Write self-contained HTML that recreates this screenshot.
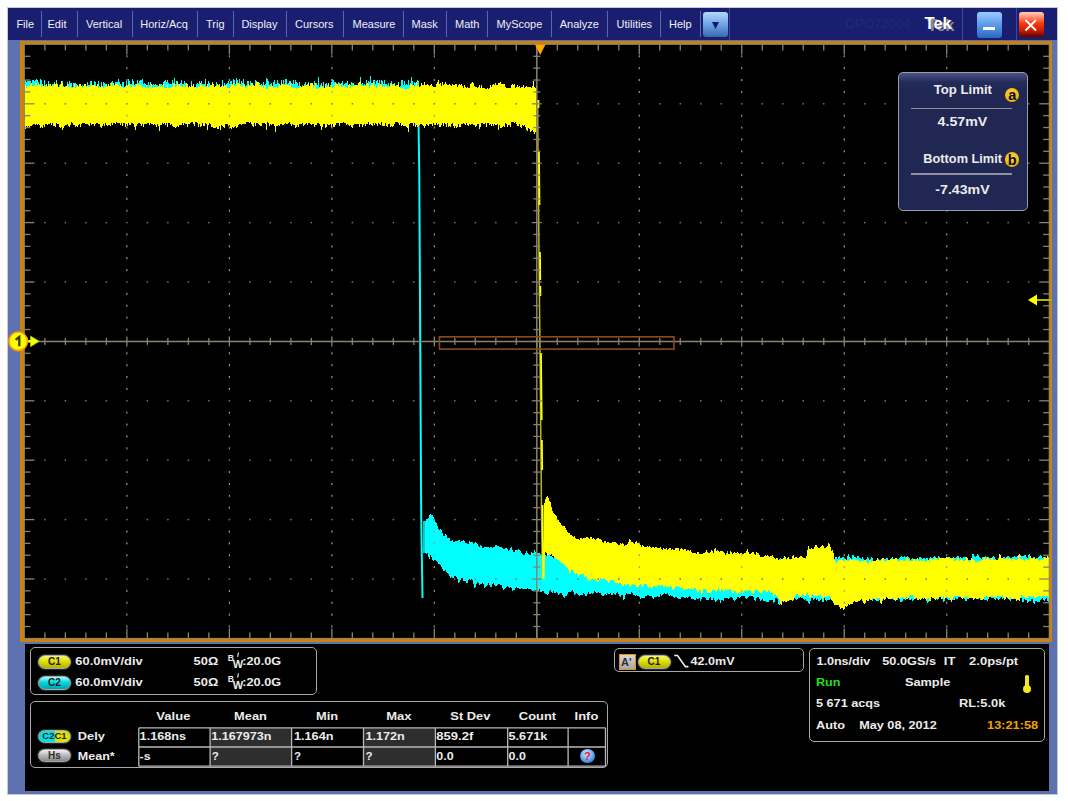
<!DOCTYPE html>
<html><head><meta charset="utf-8"><style>
html,body{margin:0;padding:0;background:#ffffff;}
body{width:1068px;height:801px;position:relative;overflow:hidden;font-family:"Liberation Sans",sans-serif;}
.a{position:absolute;}
.t{position:absolute;white-space:pre;}
.sep{position:absolute;top:11px;width:1px;height:26px;background:#5868b4;}
.box{position:absolute;border:1px solid #a8a8a8;border-radius:5px;box-sizing:border-box;}
.pill{position:absolute;border-radius:7px;box-sizing:border-box;border:1.3px solid #a8a8a8;box-shadow:0 0 1.5px 0.5px #505050;font-weight:bold;font-size:10px;text-align:center;color:#202020;}
</style></head><body>

<div class="a" style="left:7px;top:7px;width:1051px;height:788px;background:#c4c8de"></div>
<div class="a" style="left:8px;top:8px;width:1049px;height:786px;background:#5f72b0"></div>
<div class="a" style="left:8px;top:8px;width:1049px;height:32px;background:#191e6e"></div>
<div class="a" style="left:20px;top:41px;width:1032px;height:601px;background:#c9820f"></div>
<div class="a" style="left:24px;top:44px;width:1025px;height:594px;background:#000"></div>
<div class="a" style="left:25px;top:644px;width:1024px;height:147px;background:#000"></div>
<svg width="1068" height="801" style="position:absolute;left:0;top:0">
<defs><clipPath id="scr"><rect x="24.4" y="44.4" width="1024.8" height="594.0"/></clipPath></defs>
<g clip-path="url(#scr)">
<path shape-rendering="crispEdges" fill="#00ffff" d="M24.4,79.8L25.4,79.6L26.4,82.2L27.4,80.8L28.4,80.5L29.4,81.4L30.4,80.2L31.4,84.9L32.4,80.1L33.4,79.4L34.4,81.6L35.4,80.3L36.4,79.1L37.4,80.4L38.4,81.4L39.4,85.2L40.4,79.1L41.4,79.4L42.4,83.2L43.4,87.1L44.4,79.6L45.4,84.5L46.4,86.8L47.4,87.0L48.4,81.2L49.4,83.7L50.4,86.0L51.4,86.1L52.4,83.8L53.4,84.3L54.4,81.4L55.4,86.3L56.4,79.3L57.4,86.5L58.4,86.9L59.4,84.5L60.4,87.3L61.4,87.0L62.4,81.0L63.4,85.4L64.4,87.1L65.4,85.6L66.4,87.2L67.4,82.2L68.4,84.0L69.4,80.4L70.4,83.5L71.4,82.5L72.4,87.4L73.4,82.5L74.4,82.9L75.4,82.8L76.4,83.4L77.4,84.9L78.4,86.4L79.4,86.2L80.4,86.7L81.4,87.5L82.4,84.9L83.4,87.7L84.4,84.2L85.4,83.6L86.4,86.1L87.4,81.7L88.4,85.3L89.4,85.6L90.4,80.7L91.4,80.8L92.4,85.1L93.4,86.5L94.4,80.5L95.4,81.1L96.4,86.7L97.4,84.1L98.4,80.7L99.4,85.5L100.4,87.3L101.4,80.9L102.4,86.9L103.4,82.1L104.4,82.9L105.4,84.0L106.4,83.7L107.4,85.8L108.4,85.4L109.4,86.3L110.4,83.3L111.4,82.7L112.4,80.8L113.4,86.1L114.4,85.3L115.4,82.1L116.4,81.4L117.4,82.9L118.4,79.2L119.4,82.0L120.4,84.2L121.4,86.9L122.4,82.4L123.4,80.9L124.4,86.6L125.4,86.7L126.4,80.7L127.4,86.0L128.4,78.6L129.4,80.4L130.4,83.5L131.4,84.9L132.4,79.1L133.4,80.1L134.4,85.6L135.4,83.7L136.4,84.7L137.4,79.2L138.4,83.7L139.4,81.3L140.4,80.0L141.4,80.2L142.4,78.6L143.4,83.9L144.4,83.0L145.4,83.7L146.4,85.2L147.4,85.7L148.4,81.5L149.4,85.0L150.4,81.9L151.4,85.9L152.4,85.1L153.4,83.9L154.4,85.6L155.4,83.3L156.4,85.6L157.4,84.4L158.4,86.0L159.4,86.4L160.4,84.5L161.4,84.3L162.4,85.7L163.4,82.1L164.4,81.0L165.4,80.3L166.4,82.0L167.4,79.9L168.4,83.3L169.4,84.3L170.4,84.1L171.4,84.0L172.4,79.8L173.4,84.2L174.4,77.7L175.4,84.5L176.4,81.0L177.4,80.8L178.4,83.5L179.4,85.7L180.4,83.5L181.4,79.0L182.4,83.9L183.4,84.5L184.4,80.9L185.4,82.6L186.4,87.6L187.4,87.5L188.4,87.5L189.4,87.0L190.4,88.0L191.4,80.6L192.4,87.5L193.4,86.8L194.4,87.3L195.4,88.3L196.4,84.6L197.4,82.4L198.4,84.4L199.4,81.2L200.4,83.8L201.4,80.4L202.4,83.9L203.4,83.9L204.4,84.3L205.4,78.6L206.4,85.7L207.4,85.7L208.4,80.3L209.4,83.0L210.4,84.3L211.4,88.1L212.4,81.4L213.4,87.4L214.4,87.7L215.4,86.8L216.4,81.0L217.4,87.0L218.4,86.1L219.4,87.0L220.4,87.6L221.4,86.9L222.4,79.8L223.4,86.2L224.4,83.2L225.4,85.4L226.4,83.9L227.4,82.8L228.4,80.7L229.4,83.8L230.4,81.4L231.4,80.6L232.4,84.4L233.4,79.2L234.4,79.1L235.4,85.0L236.4,78.1L237.4,79.1L238.4,84.8L239.4,78.4L240.4,84.0L241.4,80.7L242.4,83.8L243.4,78.0L244.4,84.3L245.4,85.9L246.4,85.4L247.4,81.5L248.4,80.4L249.4,85.2L250.4,79.8L251.4,86.3L252.4,83.2L253.4,85.3L254.4,86.4L255.4,80.1L256.4,80.4L257.4,85.5L258.4,85.7L259.4,82.3L260.4,86.2L261.4,83.5L262.4,85.6L263.4,82.1L264.4,84.9L265.4,85.1L266.4,78.3L267.4,79.3L268.4,80.8L269.4,84.8L270.4,84.1L271.4,82.5L272.4,86.0L273.4,82.5L274.4,79.8L275.4,84.1L276.4,84.3L277.4,79.8L278.4,82.4L279.4,85.3L280.4,86.0L281.4,79.6L282.4,84.4L283.4,79.1L284.4,85.0L285.4,78.9L286.4,78.4L287.4,84.4L288.4,83.0L289.4,80.6L290.4,80.5L291.4,83.2L292.4,84.4L293.4,79.2L294.4,84.6L295.4,80.1L296.4,82.2L297.4,83.1L298.4,86.5L299.4,81.9L300.4,87.4L301.4,87.8L302.4,84.3L303.4,86.6L304.4,84.2L305.4,80.9L306.4,87.5L307.4,88.5L308.4,81.0L309.4,87.7L310.4,82.6L311.4,87.4L312.4,86.7L313.4,85.5L314.4,80.4L315.4,84.9L316.4,82.6L317.4,86.3L318.4,75.6L319.4,86.7L320.4,85.7L321.4,82.8L322.4,86.3L323.4,81.0L324.4,88.1L325.4,84.4L326.4,83.2L327.4,84.5L328.4,86.4L329.4,86.7L330.4,85.8L331.4,82.2L332.4,79.3L333.4,79.2L334.4,82.2L335.4,81.5L336.4,82.5L337.4,85.5L338.4,82.1L339.4,85.7L340.4,83.6L341.4,83.2L342.4,80.8L343.4,85.4L344.4,84.6L345.4,82.8L346.4,83.3L347.4,80.3L348.4,86.6L349.4,86.3L350.4,85.1L351.4,82.2L352.4,82.9L353.4,83.0L354.4,85.1L355.4,85.9L356.4,85.9L357.4,84.9L358.4,87.1L359.4,87.2L360.4,75.9L361.4,84.4L362.4,82.9L363.4,84.9L364.4,83.4L365.4,85.9L366.4,79.7L367.4,84.7L368.4,80.4L369.4,83.4L370.4,74.6L371.4,83.4L372.4,83.8L373.4,79.9L374.4,79.9L375.4,84.7L376.4,81.0L377.4,79.5L378.4,84.6L379.4,79.5L380.4,83.9L381.4,80.4L382.4,80.9L383.4,85.0L384.4,79.3L385.4,84.3L386.4,83.8L387.4,85.1L388.4,83.1L389.4,86.6L390.4,83.5L391.4,80.6L392.4,84.2L393.4,86.5L394.4,82.9L395.4,86.4L396.4,85.3L397.4,86.6L398.4,81.4L399.4,86.6L400.4,86.4L401.4,79.5L402.4,79.5L403.4,85.8L404.4,80.9L405.4,85.2L406.4,83.4L407.4,85.9L408.4,79.1L409.4,84.7L410.4,83.3L411.4,77.0L412.4,80.6L413.4,84.9L414.4,82.3L415.4,83.1L416.4,82.0L417.4,79.7L418.4,82.3L418.5,80.7L418.5,111.7L418.4,113.0L417.4,115.7L416.4,109.9L415.4,109.9L414.4,111.6L413.4,116.7L412.4,111.8L411.4,115.5L410.4,110.4L409.4,112.3L408.4,111.3L407.4,113.0L406.4,112.6L405.4,110.9L404.4,115.6L403.4,115.8L402.4,114.3L401.4,111.0L400.4,114.8L399.4,112.5L398.4,114.4L397.4,109.3L396.4,109.5L395.4,110.3L394.4,112.8L393.4,116.0L392.4,115.8L391.4,117.9L390.4,117.7L389.4,112.0L388.4,115.5L387.4,116.9L386.4,113.0L385.4,116.4L384.4,112.2L383.4,113.3L382.4,113.1L381.4,113.3L380.4,110.8L379.4,116.9L378.4,109.8L377.4,110.6L376.4,111.4L375.4,114.4L374.4,114.5L373.4,111.6L372.4,111.9L371.4,115.2L370.4,110.9L369.4,114.7L368.4,112.9L367.4,117.1L366.4,111.9L365.4,111.5L364.4,114.3L363.4,114.3L362.4,117.1L361.4,116.3L360.4,111.4L359.4,113.1L358.4,114.7L357.4,115.3L356.4,116.7L355.4,118.1L354.4,111.5L353.4,117.8L352.4,110.8L351.4,116.5L350.4,111.2L349.4,113.2L348.4,114.1L347.4,110.6L346.4,113.3L345.4,113.4L344.4,115.3L343.4,110.1L342.4,113.0L341.4,110.9L340.4,116.4L339.4,111.0L338.4,109.6L337.4,116.8L336.4,111.2L335.4,109.8L334.4,114.9L333.4,111.7L332.4,113.4L331.4,117.1L330.4,115.8L329.4,114.7L328.4,111.7L327.4,111.9L326.4,111.4L325.4,110.3L324.4,116.6L323.4,113.4L322.4,115.5L321.4,109.4L320.4,115.1L319.4,115.1L318.4,111.4L317.4,117.3L316.4,111.5L315.4,113.0L314.4,114.1L313.4,112.8L312.4,115.1L311.4,109.9L310.4,110.4L309.4,112.6L308.4,111.0L307.4,110.0L306.4,116.7L305.4,111.6L304.4,112.0L303.4,116.9L302.4,111.6L301.4,111.2L300.4,117.0L299.4,111.6L298.4,118.4L297.4,114.2L296.4,110.9L295.4,111.0L294.4,114.4L293.4,116.0L292.4,109.9L291.4,116.5L290.4,110.1L289.4,109.6L288.4,109.7L287.4,114.7L286.4,108.9L285.4,113.0L284.4,110.5L283.4,114.4L282.4,112.3L281.4,110.9L280.4,115.2L279.4,113.3L278.4,112.0L277.4,113.2L276.4,117.1L275.4,110.3L274.4,115.9L273.4,110.0L272.4,115.0L271.4,110.1L270.4,114.3L269.4,113.9L268.4,109.4L267.4,111.0L266.4,112.0L265.4,109.0L264.4,109.6L263.4,109.3L262.4,110.6L261.4,108.9L260.4,111.8L259.4,109.9L258.4,113.5L257.4,110.1L256.4,116.9L255.4,110.7L254.4,115.2L253.4,113.9L252.4,110.8L251.4,110.3L250.4,112.9L249.4,115.6L248.4,114.3L247.4,118.5L246.4,110.2L245.4,119.8L244.4,116.4L243.4,109.1L242.4,113.5L241.4,110.8L240.4,115.0L239.4,114.4L238.4,115.6L237.4,109.0L236.4,111.2L235.4,112.0L234.4,115.8L233.4,114.4L232.4,111.7L231.4,116.7L230.4,111.9L229.4,112.0L228.4,111.0L227.4,117.9L226.4,112.0L225.4,110.4L224.4,113.5L223.4,110.4L222.4,111.6L221.4,110.6L220.4,111.1L219.4,110.0L218.4,111.8L217.4,114.0L216.4,115.6L215.4,112.8L214.4,111.9L213.4,110.0L212.4,112.8L211.4,113.2L210.4,114.4L209.4,109.2L208.4,112.0L207.4,111.8L206.4,111.5L205.4,116.6L204.4,111.5L203.4,110.2L202.4,116.0L201.4,116.9L200.4,113.4L199.4,110.6L198.4,115.8L197.4,115.9L196.4,109.9L195.4,111.7L194.4,109.5L193.4,111.5L192.4,116.0L191.4,113.0L190.4,111.3L189.4,110.6L188.4,116.4L187.4,110.8L186.4,109.8L185.4,113.5L184.4,110.1L183.4,114.9L182.4,112.0L181.4,110.7L180.4,115.9L179.4,116.3L178.4,117.4L177.4,110.2L176.4,115.2L175.4,112.4L174.4,110.1L173.4,109.4L172.4,110.9L171.4,110.4L170.4,110.9L169.4,109.7L168.4,110.0L167.4,110.6L166.4,117.5L165.4,116.8L164.4,111.0L163.4,111.6L162.4,110.9L161.4,117.8L160.4,117.6L159.4,110.9L158.4,113.7L157.4,111.4L156.4,111.7L155.4,115.3L154.4,111.0L153.4,112.8L152.4,114.4L151.4,111.5L150.4,112.5L149.4,117.2L148.4,115.3L147.4,111.7L146.4,116.1L145.4,119.0L144.4,116.0L143.4,114.4L142.4,111.2L141.4,110.7L140.4,110.7L139.4,112.3L138.4,113.1L137.4,111.3L136.4,109.4L135.4,109.0L134.4,116.2L133.4,116.5L132.4,116.4L131.4,111.3L130.4,114.7L129.4,114.6L128.4,108.8L127.4,112.2L126.4,110.5L125.4,114.9L124.4,111.3L123.4,114.3L122.4,112.8L121.4,113.3L120.4,115.7L119.4,114.4L118.4,110.4L117.4,109.6L116.4,109.0L115.4,112.9L114.4,111.4L113.4,109.9L112.4,114.1L111.4,110.2L110.4,115.3L109.4,112.0L108.4,116.7L107.4,114.5L106.4,117.8L105.4,111.4L104.4,111.7L103.4,115.0L102.4,110.5L101.4,115.3L100.4,111.0L99.4,114.1L98.4,110.2L97.4,115.3L96.4,113.3L95.4,114.4L94.4,114.0L93.4,116.9L92.4,111.3L91.4,110.3L90.4,111.2L89.4,110.9L88.4,114.2L87.4,113.3L86.4,112.3L85.4,114.0L84.4,115.4L83.4,114.4L82.4,111.0L81.4,114.9L80.4,113.3L79.4,117.3L78.4,116.3L77.4,112.8L76.4,113.7L75.4,112.8L74.4,116.6L73.4,110.0L72.4,114.0L71.4,109.9L70.4,109.8L69.4,109.5L68.4,110.8L67.4,113.0L66.4,110.1L65.4,111.4L64.4,116.1L63.4,110.7L62.4,110.0L61.4,109.7L60.4,112.8L59.4,114.2L58.4,112.5L57.4,111.7L56.4,113.0L55.4,113.6L54.4,110.8L53.4,114.4L52.4,113.2L51.4,117.0L50.4,111.5L49.4,110.7L48.4,115.9L47.4,111.5L46.4,114.5L45.4,116.0L44.4,110.9L43.4,110.5L42.4,110.1L41.4,115.2L40.4,115.5L39.4,111.0L38.4,110.4L37.4,114.9L36.4,109.8L35.4,110.9L34.4,114.0L33.4,113.3L32.4,112.5L31.4,109.1L30.4,109.0L29.4,112.1L28.4,113.9L27.4,112.8L26.4,115.2L25.4,111.3L24.4,112.0Z"/>
<path shape-rendering="crispEdges" fill="#00ffff" d="M425.0,522.2L426.0,520.4L427.0,518.4L428.0,519.2L429.0,516.7L430.0,514.1L431.0,514.0L432.0,516.4L433.0,514.3L434.0,519.8L435.0,521.1L436.0,522.9L437.0,523.4L438.0,529.0L439.0,529.2L440.0,529.9L441.0,529.1L442.0,531.3L443.0,535.1L444.0,536.2L445.0,536.0L446.0,532.6L447.0,536.9L448.0,539.0L449.0,537.0L450.0,539.3L451.0,541.9L452.0,539.8L453.0,539.3L454.0,543.9L455.0,539.9L456.0,541.8L457.0,539.8L458.0,541.3L459.0,538.0L460.0,542.4L461.0,541.9L462.0,540.8L463.0,540.4L464.0,540.2L465.0,542.4L466.0,543.3L467.0,543.2L468.0,544.0L469.0,543.0L470.0,539.6L471.0,543.8L472.0,539.6L473.0,543.9L474.0,543.4L475.0,542.5L476.0,540.8L477.0,544.3L478.0,543.9L479.0,547.2L480.0,546.7L481.0,543.3L482.0,548.1L483.0,548.2L484.0,547.5L485.0,546.8L486.0,546.9L487.0,546.8L488.0,546.3L489.0,547.9L490.0,548.0L491.0,546.2L492.0,548.0L493.0,547.7L494.0,546.2L495.0,548.1L496.0,543.0L497.0,546.8L498.0,546.0L499.0,545.7L500.0,547.7L501.0,545.4L502.0,548.0L503.0,548.6L504.0,549.7L505.0,548.4L506.0,548.5L507.0,546.9L508.0,550.6L509.0,550.8L510.0,549.9L511.0,545.7L512.0,548.8L513.0,551.8L514.0,551.4L515.0,552.5L516.0,548.0L517.0,551.0L518.0,549.7L519.0,549.2L520.0,550.0L521.0,552.7L522.0,553.2L523.0,554.4L524.0,555.1L525.0,555.2L526.0,550.9L527.0,551.0L528.0,554.1L529.0,553.1L530.0,556.3L531.0,554.4L532.0,550.6L533.0,554.4L534.0,550.9L535.0,550.1L536.0,554.6L537.0,553.8L538.0,552.6L539.0,553.0L540.0,552.7L541.0,555.7L542.0,553.8L543.0,554.8L544.0,554.0L545.0,555.4L546.0,555.3L547.0,556.7L548.0,554.7L549.0,554.5L550.0,553.9L551.0,557.4L552.0,555.1L553.0,558.0L554.0,558.2L555.0,556.8L556.0,558.7L557.0,553.8L558.0,557.6L559.0,555.0L560.0,552.2L561.0,553.5L562.0,558.2L563.0,554.3L564.0,555.2L565.0,558.7L566.0,554.5L567.0,556.5L568.0,555.0L569.0,557.9L570.0,557.6L571.0,554.8L572.0,553.4L573.0,553.4L574.0,557.6L575.0,557.5L576.0,556.1L577.0,555.4L578.0,557.4L579.0,558.5L580.0,556.7L581.0,553.2L582.0,557.8L583.0,557.8L584.0,558.0L585.0,553.3L586.0,553.4L587.0,557.6L588.0,552.7L589.0,551.1L590.0,554.9L591.0,556.6L592.0,552.9L593.0,556.5L594.0,553.0L595.0,556.0L596.0,552.2L597.0,554.1L598.0,556.3L599.0,556.2L600.0,553.0L601.0,556.7L602.0,554.2L603.0,556.5L604.0,553.5L605.0,557.7L606.0,557.4L607.0,558.4L608.0,555.9L609.0,552.8L610.0,556.2L611.0,555.8L612.0,558.0L613.0,558.4L614.0,557.3L615.0,557.2L616.0,555.7L617.0,556.8L618.0,558.1L619.0,557.2L620.0,553.9L621.0,552.6L622.0,554.6L623.0,556.6L624.0,557.0L625.0,554.6L626.0,553.8L627.0,557.3L628.0,555.9L629.0,553.2L630.0,557.7L631.0,555.2L632.0,556.0L633.0,550.4L634.0,553.2L635.0,557.1L636.0,555.4L637.0,555.8L638.0,557.0L639.0,556.4L640.0,556.8L641.0,556.5L642.0,556.9L643.0,556.1L644.0,557.4L645.0,554.1L646.0,556.3L647.0,558.8L648.0,554.9L649.0,558.2L650.0,557.2L651.0,558.0L652.0,557.6L653.0,557.2L654.0,554.6L655.0,557.4L656.0,557.4L657.0,557.4L658.0,553.7L659.0,554.2L660.0,558.0L661.0,553.7L662.0,556.7L663.0,553.7L664.0,556.7L665.0,554.9L666.0,555.2L667.0,556.5L668.0,557.6L669.0,554.3L670.0,558.2L671.0,555.7L672.0,558.4L673.0,556.5L674.0,554.7L675.0,555.4L676.0,556.6L677.0,557.4L678.0,555.5L679.0,558.5L680.0,555.7L681.0,556.9L682.0,557.5L683.0,556.7L684.0,558.5L685.0,556.3L686.0,558.1L687.0,558.2L688.0,558.0L689.0,558.3L690.0,556.9L691.0,559.6L692.0,558.5L693.0,557.0L694.0,555.3L695.0,556.6L696.0,555.9L697.0,558.6L698.0,557.4L699.0,558.0L700.0,556.3L701.0,558.6L702.0,559.4L703.0,559.7L704.0,558.4L705.0,559.8L706.0,560.8L707.0,560.6L708.0,561.1L709.0,560.9L710.0,552.0L711.0,560.3L712.0,556.8L713.0,559.4L714.0,556.7L715.0,555.5L716.0,559.4L717.0,557.9L718.0,554.3L719.0,556.8L720.0,558.1L721.0,557.6L722.0,555.6L723.0,556.3L724.0,556.0L725.0,555.2L726.0,556.7L727.0,548.4L728.0,553.7L729.0,557.2L730.0,557.2L731.0,553.6L732.0,553.8L733.0,554.9L734.0,552.8L735.0,556.6L736.0,554.2L737.0,555.2L738.0,559.1L739.0,557.0L740.0,559.0L741.0,557.0L742.0,555.0L743.0,554.2L744.0,555.4L745.0,557.3L746.0,558.2L747.0,555.6L748.0,554.6L749.0,553.9L750.0,558.9L751.0,559.0L752.0,557.5L753.0,555.6L754.0,557.6L755.0,556.9L756.0,556.5L757.0,560.7L758.0,553.6L759.0,553.2L760.0,559.8L761.0,555.7L762.0,560.2L763.0,559.7L764.0,558.4L765.0,558.7L766.0,556.8L767.0,559.5L768.0,557.3L769.0,558.7L770.0,557.9L771.0,557.2L772.0,555.0L773.0,557.9L774.0,558.6L775.0,560.7L776.0,559.0L777.0,559.9L778.0,560.8L779.0,560.4L780.0,557.1L781.0,559.1L782.0,558.8L783.0,560.1L784.0,560.0L785.0,557.7L786.0,559.4L787.0,558.8L788.0,559.9L789.0,558.7L790.0,559.2L791.0,559.8L792.0,557.9L793.0,556.3L794.0,560.7L795.0,558.8L796.0,557.7L797.0,560.9L798.0,559.9L799.0,560.6L800.0,558.0L801.0,559.4L802.0,561.4L803.0,557.0L804.0,560.5L805.0,558.5L806.0,557.5L807.0,556.6L808.0,559.9L809.0,555.9L810.0,556.1L811.0,559.1L812.0,558.1L813.0,557.5L814.0,560.4L815.0,560.7L816.0,557.6L817.0,560.0L818.0,557.2L819.0,558.8L820.0,559.3L821.0,560.5L822.0,559.8L823.0,558.2L824.0,560.8L825.0,556.0L826.0,557.4L827.0,557.7L828.0,558.1L829.0,560.0L830.0,557.2L831.0,555.8L832.0,559.3L833.0,558.8L834.0,558.1L835.0,559.1L836.0,554.9L837.0,558.9L838.0,558.9L839.0,556.1L840.0,556.9L841.0,559.1L842.0,557.6L843.0,557.0L844.0,556.2L845.0,560.5L846.0,559.3L847.0,560.1L848.0,552.1L849.0,555.3L850.0,557.7L851.0,558.3L852.0,559.3L853.0,551.5L854.0,558.2L855.0,556.8L856.0,556.4L857.0,560.0L858.0,551.9L859.0,559.4L860.0,556.7L861.0,560.2L862.0,557.0L863.0,557.8L864.0,561.0L865.0,560.5L866.0,559.7L867.0,558.2L868.0,556.4L869.0,560.5L870.0,559.3L871.0,559.1L872.0,554.4L873.0,560.7L874.0,562.0L875.0,559.7L876.0,562.6L877.0,562.2L878.0,558.0L879.0,560.1L880.0,559.7L881.0,560.5L882.0,560.7L883.0,561.0L884.0,560.2L885.0,558.3L886.0,560.3L887.0,556.2L888.0,560.7L889.0,560.7L890.0,560.5L891.0,560.1L892.0,556.2L893.0,558.3L894.0,560.9L895.0,559.9L896.0,560.2L897.0,559.2L898.0,559.6L899.0,558.8L900.0,558.2L901.0,555.7L902.0,555.7L903.0,557.5L904.0,556.8L905.0,556.2L906.0,557.4L907.0,556.1L908.0,556.5L909.0,556.8L910.0,559.8L911.0,560.8L912.0,557.2L913.0,558.6L914.0,560.7L915.0,560.6L916.0,556.8L917.0,560.7L918.0,559.3L919.0,558.6L920.0,556.1L921.0,557.5L922.0,558.6L923.0,559.0L924.0,556.3L925.0,559.9L926.0,557.5L927.0,557.7L928.0,559.3L929.0,560.3L930.0,554.9L931.0,558.2L932.0,558.0L933.0,558.3L934.0,555.7L935.0,556.6L936.0,558.2L937.0,559.0L938.0,557.0L939.0,555.8L940.0,557.8L941.0,559.9L942.0,559.6L943.0,560.2L944.0,558.0L945.0,558.5L946.0,558.7L947.0,556.3L948.0,558.4L949.0,558.9L950.0,559.8L951.0,558.4L952.0,557.7L953.0,557.5L954.0,557.1L955.0,558.5L956.0,557.3L957.0,557.5L958.0,554.0L959.0,558.0L960.0,557.2L961.0,556.3L962.0,559.0L963.0,557.5L964.0,556.5L965.0,558.5L966.0,556.4L967.0,559.7L968.0,559.9L969.0,560.4L970.0,560.0L971.0,559.9L972.0,555.9L973.0,552.5L974.0,556.1L975.0,556.5L976.0,557.7L977.0,554.1L978.0,554.7L979.0,554.8L980.0,558.4L981.0,558.1L982.0,559.4L983.0,555.1L984.0,558.1L985.0,556.4L986.0,556.1L987.0,558.1L988.0,555.5L989.0,558.2L990.0,557.9L991.0,558.5L992.0,558.5L993.0,555.7L994.0,556.6L995.0,557.7L996.0,559.6L997.0,560.3L998.0,559.3L999.0,556.0L1000.0,555.7L1001.0,557.2L1002.0,558.4L1003.0,558.2L1004.0,556.1L1005.0,557.1L1006.0,558.4L1007.0,556.0L1008.0,555.5L1009.0,555.5L1010.0,559.4L1011.0,556.5L1012.0,559.6L1013.0,555.1L1014.0,557.9L1015.0,554.3L1016.0,558.7L1017.0,555.9L1018.0,555.8L1019.0,559.6L1020.0,553.3L1021.0,557.3L1022.0,555.3L1023.0,556.6L1024.0,556.1L1025.0,554.8L1026.0,555.5L1027.0,557.8L1028.0,557.4L1029.0,553.7L1030.0,554.9L1031.0,557.3L1032.0,557.9L1033.0,557.5L1034.0,556.0L1035.0,558.7L1036.0,558.7L1037.0,558.2L1038.0,557.2L1039.0,556.6L1040.0,554.8L1041.0,554.7L1042.0,558.0L1043.0,557.7L1044.0,555.9L1045.0,558.2L1046.0,555.4L1047.0,559.9L1048.0,555.6L1049.0,559.3L1050.0,558.9L1050.0,599.2L1049.0,599.2L1048.0,604.0L1047.0,597.9L1046.0,598.0L1045.0,601.0L1044.0,601.9L1043.0,597.6L1042.0,599.4L1041.0,598.0L1040.0,602.2L1039.0,601.6L1038.0,602.2L1037.0,602.0L1036.0,600.1L1035.0,601.7L1034.0,605.9L1033.0,600.1L1032.0,598.9L1031.0,599.9L1030.0,602.7L1029.0,599.4L1028.0,605.6L1027.0,599.8L1026.0,600.7L1025.0,598.4L1024.0,600.2L1023.0,603.9L1022.0,599.2L1021.0,596.8L1020.0,596.3L1019.0,596.7L1018.0,599.9L1017.0,597.4L1016.0,598.9L1015.0,596.3L1014.0,601.2L1013.0,597.5L1012.0,597.2L1011.0,600.1L1010.0,601.3L1009.0,598.4L1008.0,598.0L1007.0,596.0L1006.0,595.9L1005.0,596.0L1004.0,596.5L1003.0,600.0L1002.0,598.7L1001.0,596.0L1000.0,599.2L999.0,598.5L998.0,600.6L997.0,597.0L996.0,599.1L995.0,600.3L994.0,598.1L993.0,598.2L992.0,597.4L991.0,597.9L990.0,596.9L989.0,597.4L988.0,600.4L987.0,601.7L986.0,599.1L985.0,601.0L984.0,598.5L983.0,597.3L982.0,598.6L981.0,600.8L980.0,599.1L979.0,597.4L978.0,596.3L977.0,599.7L976.0,596.2L975.0,598.3L974.0,597.4L973.0,596.1L972.0,596.7L971.0,598.6L970.0,598.3L969.0,598.4L968.0,599.2L967.0,599.8L966.0,601.5L965.0,599.7L964.0,597.6L963.0,598.7L962.0,596.5L961.0,596.7L960.0,597.2L959.0,596.9L958.0,597.3L957.0,600.3L956.0,597.3L955.0,599.0L954.0,601.2L953.0,599.0L952.0,600.4L951.0,596.6L950.0,600.8L949.0,599.9L948.0,600.9L947.0,597.3L946.0,598.4L945.0,598.1L944.0,604.5L943.0,600.0L942.0,597.9L941.0,597.3L940.0,597.4L939.0,597.3L938.0,601.6L937.0,597.7L936.0,599.8L935.0,596.8L934.0,600.0L933.0,596.8L932.0,597.9L931.0,596.2L930.0,597.1L929.0,599.6L928.0,604.3L927.0,602.1L926.0,600.7L925.0,597.8L924.0,598.1L923.0,596.7L922.0,599.1L921.0,596.9L920.0,599.5L919.0,596.9L918.0,597.5L917.0,597.0L916.0,599.1L915.0,598.2L914.0,597.5L913.0,602.5L912.0,599.5L911.0,598.2L910.0,601.8L909.0,598.4L908.0,598.1L907.0,598.0L906.0,599.1L905.0,600.0L904.0,598.9L903.0,599.9L902.0,601.6L901.0,602.5L900.0,601.8L899.0,596.9L898.0,599.9L897.0,600.6L896.0,599.6L895.0,598.5L894.0,600.9L893.0,599.9L892.0,598.6L891.0,596.6L890.0,596.4L889.0,600.2L888.0,596.9L887.0,597.5L886.0,597.4L885.0,598.5L884.0,597.2L883.0,600.5L882.0,601.2L881.0,598.7L880.0,599.0L879.0,600.7L878.0,600.8L877.0,601.2L876.0,601.8L875.0,598.9L874.0,597.3L873.0,600.3L872.0,601.6L871.0,596.7L870.0,597.8L869.0,599.5L868.0,599.4L867.0,596.9L866.0,600.9L865.0,596.6L864.0,598.5L863.0,598.8L862.0,597.8L861.0,598.4L860.0,600.3L859.0,598.2L858.0,601.3L857.0,600.9L856.0,600.1L855.0,596.0L854.0,596.7L853.0,600.7L852.0,596.7L851.0,599.0L850.0,599.6L849.0,598.6L848.0,599.4L847.0,599.1L846.0,599.0L845.0,598.6L844.0,597.5L843.0,597.4L842.0,601.1L841.0,597.7L840.0,600.3L839.0,597.3L838.0,601.1L837.0,601.2L836.0,599.0L835.0,600.9L834.0,597.8L833.0,597.9L832.0,600.7L831.0,597.9L830.0,599.7L829.0,600.5L828.0,598.8L827.0,600.7L826.0,600.9L825.0,600.0L824.0,596.5L823.0,607.8L822.0,596.4L821.0,601.0L820.0,599.2L819.0,603.0L818.0,599.1L817.0,599.8L816.0,599.7L815.0,596.7L814.0,600.5L813.0,599.5L812.0,596.7L811.0,599.5L810.0,602.4L809.0,605.8L808.0,600.3L807.0,602.7L806.0,598.5L805.0,598.9L804.0,601.8L803.0,596.9L802.0,598.5L801.0,597.3L800.0,597.0L799.0,599.1L798.0,597.5L797.0,600.3L796.0,599.4L795.0,598.1L794.0,597.8L793.0,602.3L792.0,597.6L791.0,598.9L790.0,600.3L789.0,599.1L788.0,597.3L787.0,598.7L786.0,599.3L785.0,600.7L784.0,599.7L783.0,597.4L782.0,597.9L781.0,600.6L780.0,601.4L779.0,608.4L778.0,600.4L777.0,598.2L776.0,597.7L775.0,599.3L774.0,605.0L773.0,600.8L772.0,599.0L771.0,600.4L770.0,598.7L769.0,602.3L768.0,601.8L767.0,603.2L766.0,600.8L765.0,600.3L764.0,601.8L763.0,599.5L762.0,598.6L761.0,601.1L760.0,600.2L759.0,597.2L758.0,597.0L757.0,596.5L756.0,599.1L755.0,603.4L754.0,597.4L753.0,596.1L752.0,596.0L751.0,596.4L750.0,596.1L749.0,596.0L748.0,597.4L747.0,599.1L746.0,599.1L745.0,596.4L744.0,595.9L743.0,595.9L742.0,595.8L741.0,595.7L740.0,599.4L739.0,596.4L738.0,596.7L737.0,597.2L736.0,600.2L735.0,600.7L734.0,601.9L733.0,598.5L732.0,596.7L731.0,598.0L730.0,596.1L729.0,600.6L728.0,598.3L727.0,597.1L726.0,598.1L725.0,597.4L724.0,599.2L723.0,602.8L722.0,597.4L721.0,602.6L720.0,602.6L719.0,598.1L718.0,599.3L717.0,600.0L716.0,602.2L715.0,601.6L714.0,597.9L713.0,599.1L712.0,601.5L711.0,597.6L710.0,596.9L709.0,599.6L708.0,600.0L707.0,600.5L706.0,598.8L705.0,598.1L704.0,596.2L703.0,598.0L702.0,596.6L701.0,601.3L700.0,600.0L699.0,596.6L698.0,600.7L697.0,596.6L696.0,598.8L695.0,600.3L694.0,600.7L693.0,597.3L692.0,600.1L691.0,597.8L690.0,597.1L689.0,595.6L688.0,598.2L687.0,598.7L686.0,595.3L685.0,600.6L684.0,595.6L683.0,597.9L682.0,595.9L681.0,598.9L680.0,599.3L679.0,598.3L678.0,600.0L677.0,596.8L676.0,597.8L675.0,596.3L674.0,599.7L673.0,594.9L672.0,596.6L671.0,596.0L670.0,594.7L669.0,597.6L668.0,593.2L667.0,592.6L666.0,595.7L665.0,593.2L664.0,593.2L663.0,594.0L662.0,597.0L661.0,594.4L660.0,594.4L659.0,598.7L658.0,595.8L657.0,595.6L656.0,599.0L655.0,594.9L654.0,599.6L653.0,598.7L652.0,596.5L651.0,595.5L650.0,596.5L649.0,594.7L648.0,595.3L647.0,595.5L646.0,595.7L645.0,597.2L644.0,598.2L643.0,597.2L642.0,598.3L641.0,598.5L640.0,599.9L639.0,594.3L638.0,598.2L637.0,593.9L636.0,597.0L635.0,594.5L634.0,596.1L633.0,593.5L632.0,592.1L631.0,592.7L630.0,596.0L629.0,592.4L628.0,595.4L627.0,593.6L626.0,593.1L625.0,596.4L624.0,602.1L623.0,596.9L622.0,593.3L621.0,597.1L620.0,596.1L619.0,595.3L618.0,591.8L617.0,592.2L616.0,593.0L615.0,596.1L614.0,591.6L613.0,593.7L612.0,596.9L611.0,593.6L610.0,592.7L609.0,594.5L608.0,593.8L607.0,593.1L606.0,596.2L605.0,592.6L604.0,596.8L603.0,594.4L602.0,598.0L601.0,591.6L600.0,594.6L599.0,591.7L598.0,592.9L597.0,592.9L596.0,593.7L595.0,591.2L594.0,591.0L593.0,595.3L592.0,592.0L591.0,593.2L590.0,595.5L589.0,592.7L588.0,591.6L587.0,596.4L586.0,595.2L585.0,596.5L584.0,592.4L583.0,593.2L582.0,596.2L581.0,593.3L580.0,597.0L579.0,594.5L578.0,596.1L577.0,592.5L576.0,592.9L575.0,594.6L574.0,594.9L573.0,590.0L572.0,590.3L571.0,592.2L570.0,591.8L569.0,591.6L568.0,591.8L567.0,595.6L566.0,595.7L565.0,596.5L564.0,598.8L563.0,596.1L562.0,593.1L561.0,592.5L560.0,593.2L559.0,594.8L558.0,594.6L557.0,592.3L556.0,591.8L555.0,594.7L554.0,590.4L553.0,591.1L552.0,594.2L551.0,590.0L550.0,589.8L549.0,592.5L548.0,594.6L547.0,594.7L546.0,593.4L545.0,594.9L544.0,591.0L543.0,591.6L542.0,590.4L541.0,593.8L540.0,589.2L539.0,589.5L538.0,591.9L537.0,591.8L536.0,589.0L535.0,590.5L534.0,590.0L533.0,592.2L532.0,589.6L531.0,590.7L530.0,588.0L529.0,589.8L528.0,587.4L527.0,588.7L526.0,589.0L525.0,588.7L524.0,589.0L523.0,589.9L522.0,588.1L521.0,587.7L520.0,589.9L519.0,587.3L518.0,588.6L517.0,586.6L516.0,586.7L515.0,590.4L514.0,588.8L513.0,590.8L512.0,590.5L511.0,585.6L510.0,587.8L509.0,588.5L508.0,586.0L507.0,586.4L506.0,588.5L505.0,587.8L504.0,590.2L503.0,590.1L502.0,585.7L501.0,584.7L500.0,584.7L499.0,583.4L498.0,583.8L497.0,586.2L496.0,586.2L495.0,585.8L494.0,583.2L493.0,582.9L492.0,584.8L491.0,588.6L490.0,586.4L489.0,583.0L488.0,582.4L487.0,588.2L486.0,584.4L485.0,590.7L484.0,584.6L483.0,582.5L482.0,583.8L481.0,584.7L480.0,584.0L479.0,585.2L478.0,581.3L477.0,583.5L476.0,584.9L475.0,589.6L474.0,586.5L473.0,581.0L472.0,578.7L471.0,579.3L470.0,580.0L469.0,578.9L468.0,581.8L467.0,583.7L466.0,581.3L465.0,579.8L464.0,582.1L463.0,579.1L462.0,577.0L461.0,578.7L460.0,581.5L459.0,583.1L458.0,582.6L457.0,576.1L456.0,577.5L455.0,575.5L454.0,575.6L453.0,579.5L452.0,576.5L451.0,578.2L450.0,577.3L449.0,575.2L448.0,572.7L447.0,574.1L446.0,570.1L445.0,570.0L444.0,572.4L443.0,570.3L442.0,567.9L441.0,565.9L440.0,564.7L439.0,563.8L438.0,564.0L437.0,560.6L436.0,562.2L435.0,558.7L434.0,560.9L433.0,560.4L432.0,559.6L431.0,554.5L430.0,555.8L429.0,561.8L428.0,552.2L427.0,554.1L426.0,554.0L425.0,551.2Z"/>
<path fill="none" stroke="#00ffff" stroke-width="2" d="M418.5,120 L419.3,175 L421.2,517 L422.5,598"/>
<path fill="none" stroke="#00ffff" stroke-width="1.6" d="M424,521 L424,553"/>
<path shape-rendering="crispEdges" fill="#ffff00" d="M24.4,84.0L25.4,84.4L26.4,88.7L27.4,85.6L28.4,84.9L29.4,86.5L30.4,84.3L31.4,83.0L32.4,85.5L33.4,85.8L34.4,86.3L35.4,82.7L36.4,82.6L37.4,86.6L38.4,84.3L39.4,85.0L40.4,84.0L41.4,86.9L42.4,84.8L43.4,86.5L44.4,85.8L45.4,87.6L46.4,83.7L47.4,87.8L48.4,84.1L49.4,86.7L50.4,84.1L51.4,85.8L52.4,84.9L53.4,86.1L54.4,83.2L55.4,84.5L56.4,83.2L57.4,83.8L58.4,87.0L59.4,87.0L60.4,84.5L61.4,81.1L62.4,82.0L63.4,87.2L64.4,87.3L65.4,86.9L66.4,86.4L67.4,84.0L68.4,87.1L69.4,87.4L70.4,85.1L71.4,88.2L72.4,88.0L73.4,87.9L74.4,83.4L75.4,87.9L76.4,87.7L77.4,84.4L78.4,87.5L79.4,84.6L80.4,83.5L81.4,85.4L82.4,87.8L83.4,85.8L84.4,84.1L85.4,83.1L86.4,87.4L87.4,86.4L88.4,86.9L89.4,87.3L90.4,86.5L91.4,82.4L92.4,85.1L93.4,85.4L94.4,85.4L95.4,86.3L96.4,86.3L97.4,83.0L98.4,87.6L99.4,87.2L100.4,87.0L101.4,85.1L102.4,87.3L103.4,87.8L104.4,85.6L105.4,87.0L106.4,83.8L107.4,87.5L108.4,83.9L109.4,86.4L110.4,86.7L111.4,82.6L112.4,86.7L113.4,82.6L114.4,85.9L115.4,84.4L116.4,83.8L117.4,83.6L118.4,84.3L119.4,87.3L120.4,84.7L121.4,87.2L122.4,87.3L123.4,88.4L124.4,87.6L125.4,87.2L126.4,84.5L127.4,86.2L128.4,84.1L129.4,83.1L130.4,87.0L131.4,87.1L132.4,84.6L133.4,86.0L134.4,86.6L135.4,86.6L136.4,84.0L137.4,83.5L138.4,86.3L139.4,84.2L140.4,84.6L141.4,85.8L142.4,86.9L143.4,86.7L144.4,86.8L145.4,88.4L146.4,84.7L147.4,88.2L148.4,87.8L149.4,87.2L150.4,87.6L151.4,83.7L152.4,87.6L153.4,87.0L154.4,86.6L155.4,87.5L156.4,87.4L157.4,86.4L158.4,87.8L159.4,83.8L160.4,87.2L161.4,86.1L162.4,87.6L163.4,83.2L164.4,87.7L165.4,88.2L166.4,88.3L167.4,84.3L168.4,87.5L169.4,87.9L170.4,88.3L171.4,87.5L172.4,87.0L173.4,83.8L174.4,82.9L175.4,86.7L176.4,86.1L177.4,81.6L178.4,85.3L179.4,84.0L180.4,86.6L181.4,86.1L182.4,87.3L183.4,85.2L184.4,84.4L185.4,87.9L186.4,83.1L187.4,84.0L188.4,88.0L189.4,85.6L190.4,87.4L191.4,84.5L192.4,86.1L193.4,83.5L194.4,87.8L195.4,86.8L196.4,87.8L197.4,87.6L198.4,85.4L199.4,87.6L200.4,82.2L201.4,85.4L202.4,86.4L203.4,86.4L204.4,84.7L205.4,87.4L206.4,87.5L207.4,83.9L208.4,87.5L209.4,87.3L210.4,84.6L211.4,85.8L212.4,82.6L213.4,83.5L214.4,86.7L215.4,85.4L216.4,86.6L217.4,83.8L218.4,85.1L219.4,84.0L220.4,86.8L221.4,87.2L222.4,85.2L223.4,87.2L224.4,84.5L225.4,85.9L226.4,84.2L227.4,88.1L228.4,87.8L229.4,87.8L230.4,87.6L231.4,84.2L232.4,85.1L233.4,82.6L234.4,86.4L235.4,86.1L236.4,81.7L237.4,83.6L238.4,83.4L239.4,84.3L240.4,85.9L241.4,84.6L242.4,87.5L243.4,84.0L244.4,84.1L245.4,88.1L246.4,87.0L247.4,87.6L248.4,84.1L249.4,85.7L250.4,86.5L251.4,83.0L252.4,82.4L253.4,84.7L254.4,86.7L255.4,84.7L256.4,81.8L257.4,82.2L258.4,81.6L259.4,85.2L260.4,84.7L261.4,86.9L262.4,85.9L263.4,87.9L264.4,86.3L265.4,86.0L266.4,89.0L267.4,89.1L268.4,84.6L269.4,87.4L270.4,86.9L271.4,84.6L272.4,85.5L273.4,87.9L274.4,87.3L275.4,86.7L276.4,86.7L277.4,88.0L278.4,87.2L279.4,83.4L280.4,86.5L281.4,83.0L282.4,83.6L283.4,85.4L284.4,85.0L285.4,84.2L286.4,85.2L287.4,85.4L288.4,84.4L289.4,86.5L290.4,83.1L291.4,86.5L292.4,88.0L293.4,87.9L294.4,86.3L295.4,88.4L296.4,89.0L297.4,87.9L298.4,88.1L299.4,88.1L300.4,85.5L301.4,87.5L302.4,86.2L303.4,85.5L304.4,86.1L305.4,85.3L306.4,84.5L307.4,84.6L308.4,82.7L309.4,86.7L310.4,84.2L311.4,82.5L312.4,82.9L313.4,87.7L314.4,86.5L315.4,82.8L316.4,88.5L317.4,88.7L318.4,88.6L319.4,87.6L320.4,86.8L321.4,86.2L322.4,87.5L323.4,86.6L324.4,88.6L325.4,84.0L326.4,87.2L327.4,87.6L328.4,82.7L329.4,87.5L330.4,87.0L331.4,85.1L332.4,87.6L333.4,87.6L334.4,86.5L335.4,83.3L336.4,84.5L337.4,83.7L338.4,86.0L339.4,82.9L340.4,83.5L341.4,86.7L342.4,86.5L343.4,86.5L344.4,85.3L345.4,86.9L346.4,87.1L347.4,88.2L348.4,85.8L349.4,83.2L350.4,88.2L351.4,85.8L352.4,87.6L353.4,84.1L354.4,85.9L355.4,85.4L356.4,84.7L357.4,86.6L358.4,83.5L359.4,82.0L360.4,80.1L361.4,85.5L362.4,85.5L363.4,86.0L364.4,86.4L365.4,86.3L366.4,84.1L367.4,82.9L368.4,84.1L369.4,87.8L370.4,86.0L371.4,84.9L372.4,83.4L373.4,83.5L374.4,86.6L375.4,85.2L376.4,87.5L377.4,87.6L378.4,83.1L379.4,84.5L380.4,85.0L381.4,85.1L382.4,86.7L383.4,86.3L384.4,87.2L385.4,85.7L386.4,86.2L387.4,87.1L388.4,86.6L389.4,87.4L390.4,83.7L391.4,83.3L392.4,85.9L393.4,84.1L394.4,83.7L395.4,85.6L396.4,85.5L397.4,85.6L398.4,83.8L399.4,87.2L400.4,88.3L401.4,87.6L402.4,88.7L403.4,88.1L404.4,88.8L405.4,89.7L406.4,89.0L407.4,89.1L408.4,89.0L409.4,88.4L410.4,84.5L411.4,83.5L412.4,86.7L413.4,84.6L414.4,87.3L415.4,85.5L416.4,82.0L417.4,85.9L418.4,85.1L419.4,87.3L420.4,86.8L421.4,83.2L422.4,85.4L423.4,85.5L424.4,81.6L425.4,85.0L426.4,85.6L427.4,84.4L428.4,85.4L429.4,86.4L430.4,84.7L431.4,83.5L432.4,85.7L433.4,86.6L434.4,87.3L435.4,87.6L436.4,84.5L437.4,82.0L438.4,79.9L439.4,83.7L440.4,82.5L441.4,87.1L442.4,81.3L443.4,85.5L444.4,84.3L445.4,82.2L446.4,84.2L447.4,85.0L448.4,85.6L449.4,83.8L450.4,85.4L451.4,86.0L452.4,84.3L453.4,85.3L454.4,84.8L455.4,83.9L456.4,83.1L457.4,87.3L458.4,84.8L459.4,84.2L460.4,84.9L461.4,84.3L462.4,85.5L463.4,88.2L464.4,84.9L465.4,87.4L466.4,88.1L467.4,87.2L468.4,87.7L469.4,87.9L470.4,84.6L471.4,83.0L472.4,82.0L473.4,82.7L474.4,85.4L475.4,86.6L476.4,86.6L477.4,88.2L478.4,87.5L479.4,84.2L480.4,88.2L481.4,84.5L482.4,88.0L483.4,87.5L484.4,88.2L485.4,89.0L486.4,89.2L487.4,87.5L488.4,89.0L489.4,88.0L490.4,84.6L491.4,87.0L492.4,85.5L493.4,84.4L494.4,84.9L495.4,82.5L496.4,84.9L497.4,85.8L498.4,82.8L499.4,83.5L500.4,82.3L501.4,84.1L502.4,83.7L503.4,84.4L504.4,83.7L505.4,86.9L506.4,87.5L507.4,87.6L508.4,87.9L509.4,88.5L510.4,88.1L511.4,84.9L512.4,83.4L513.4,85.5L514.4,83.0L515.4,88.2L516.4,87.8L517.4,84.7L518.4,87.4L519.4,85.2L520.4,88.4L521.4,87.4L522.4,87.8L523.4,84.5L524.4,88.3L525.4,86.8L526.4,86.2L527.4,86.5L528.4,87.0L529.4,87.1L530.4,86.5L531.4,88.2L532.4,87.0L533.4,80.5L534.4,86.7L535.4,88.5L536.4,86.9L537.0,84.0L537.0,134.8L536.4,131.5L535.4,131.5L534.4,134.1L533.4,131.9L532.4,130.1L531.4,131.3L530.4,131.6L529.4,129.0L528.4,127.6L527.4,131.1L526.4,129.9L525.4,126.4L524.4,125.1L523.4,126.2L522.4,125.4L521.4,127.9L520.4,127.2L519.4,123.2L518.4,126.1L517.4,125.6L516.4,123.7L515.4,121.9L514.4,122.9L513.4,121.9L512.4,121.8L511.4,122.4L510.4,127.1L509.4,124.4L508.4,125.4L507.4,126.9L506.4,124.1L505.4,123.3L504.4,127.5L503.4,126.2L502.4,126.9L501.4,128.0L500.4,127.6L499.4,124.8L498.4,130.6L497.4,123.5L496.4,124.7L495.4,125.3L494.4,124.2L493.4,126.0L492.4,123.5L491.4,126.1L490.4,123.8L489.4,124.9L488.4,123.2L487.4,123.0L486.4,127.5L485.4,122.7L484.4,124.7L483.4,124.2L482.4,122.3L481.4,123.0L480.4,127.0L479.4,129.4L478.4,123.2L477.4,124.6L476.4,126.0L475.4,127.5L474.4,124.2L473.4,125.0L472.4,123.5L471.4,124.5L470.4,125.0L469.4,123.4L468.4,126.1L467.4,124.4L466.4,122.5L465.4,125.5L464.4,123.8L463.4,123.2L462.4,124.6L461.4,123.8L460.4,127.0L459.4,127.5L458.4,123.2L457.4,127.9L456.4,128.1L455.4,126.3L454.4,127.8L453.4,125.7L452.4,123.0L451.4,123.6L450.4,126.9L449.4,125.4L448.4,126.7L447.4,123.1L446.4,127.6L445.4,123.0L444.4,123.3L443.4,126.1L442.4,122.1L441.4,125.3L440.4,126.9L439.4,126.9L438.4,124.0L437.4,125.3L436.4,122.7L435.4,125.4L434.4,124.7L433.4,123.0L432.4,126.4L431.4,123.5L430.4,124.3L429.4,123.7L428.4,126.3L427.4,125.1L426.4,123.9L425.4,126.6L424.4,128.5L423.4,126.0L422.4,125.3L421.4,123.6L420.4,124.1L419.4,124.7L418.4,126.0L417.4,127.4L416.4,124.5L415.4,127.5L414.4,122.8L413.4,126.6L412.4,123.1L411.4,123.4L410.4,122.9L409.4,124.6L408.4,133.4L407.4,126.9L406.4,127.5L405.4,125.7L404.4,125.5L403.4,126.5L402.4,124.8L401.4,126.2L400.4,123.0L399.4,125.2L398.4,122.6L397.4,122.2L396.4,122.2L395.4,122.1L394.4,124.4L393.4,126.5L392.4,126.9L391.4,126.2L390.4,127.3L389.4,123.8L388.4,123.6L387.4,127.0L386.4,125.6L385.4,122.4L384.4,125.9L383.4,125.5L382.4,125.5L381.4,121.7L380.4,125.5L379.4,123.9L378.4,123.1L377.4,126.0L376.4,123.6L375.4,122.9L374.4,125.1L373.4,123.1L372.4,126.9L371.4,125.2L370.4,123.7L369.4,124.8L368.4,121.9L367.4,124.2L366.4,124.3L365.4,126.4L364.4,124.2L363.4,125.6L362.4,127.2L361.4,123.6L360.4,124.2L359.4,127.8L358.4,124.1L357.4,123.6L356.4,123.9L355.4,124.3L354.4,124.5L353.4,124.7L352.4,129.0L351.4,127.3L350.4,124.9L349.4,126.5L348.4,124.8L347.4,123.7L346.4,125.5L345.4,122.9L344.4,122.8L343.4,122.4L342.4,122.8L341.4,122.8L340.4,122.6L339.4,126.5L338.4,122.6L337.4,122.7L336.4,122.6L335.4,125.3L334.4,127.7L333.4,127.2L332.4,123.6L331.4,127.2L330.4,123.5L329.4,125.7L328.4,125.0L327.4,123.8L326.4,127.8L325.4,127.8L324.4,123.6L323.4,123.5L322.4,127.6L321.4,130.2L320.4,125.5L319.4,124.2L318.4,122.3L317.4,123.6L316.4,125.6L315.4,124.6L314.4,126.8L313.4,123.8L312.4,123.8L311.4,125.6L310.4,123.6L309.4,123.4L308.4,123.4L307.4,125.4L306.4,123.1L305.4,124.0L304.4,124.7L303.4,126.0L302.4,122.9L301.4,123.9L300.4,123.7L299.4,123.6L298.4,127.7L297.4,125.0L296.4,126.9L295.4,127.6L294.4,124.9L293.4,125.2L292.4,124.3L291.4,125.9L290.4,123.6L289.4,122.2L288.4,123.3L287.4,124.1L286.4,124.1L285.4,122.9L284.4,124.5L283.4,124.6L282.4,125.5L281.4,124.1L280.4,123.6L279.4,126.8L278.4,124.5L277.4,126.1L276.4,126.1L275.4,133.1L274.4,124.7L273.4,124.3L272.4,124.3L271.4,124.9L270.4,124.3L269.4,126.7L268.4,122.6L267.4,122.1L266.4,130.9L265.4,122.7L264.4,122.9L263.4,122.7L262.4,122.6L261.4,126.6L260.4,126.4L259.4,125.3L258.4,123.5L257.4,123.2L256.4,123.1L255.4,126.7L254.4,123.1L253.4,127.3L252.4,125.5L251.4,123.4L250.4,122.0L249.4,122.9L248.4,121.8L247.4,122.4L246.4,122.4L245.4,124.1L244.4,123.7L243.4,123.9L242.4,123.5L241.4,124.8L240.4,123.7L239.4,123.6L238.4,124.7L237.4,127.5L236.4,128.3L235.4,125.6L234.4,127.5L233.4,128.4L232.4,127.3L231.4,129.5L230.4,127.4L229.4,124.2L228.4,126.3L227.4,123.8L226.4,123.6L225.4,123.5L224.4,128.3L223.4,126.7L222.4,125.6L221.4,124.5L220.4,130.9L219.4,125.3L218.4,129.2L217.4,128.5L216.4,127.2L215.4,128.1L214.4,128.2L213.4,127.8L212.4,127.0L211.4,126.9L210.4,124.1L209.4,123.3L208.4,124.8L207.4,130.7L206.4,123.7L205.4,122.7L204.4,126.5L203.4,126.2L202.4,122.3L201.4,127.0L200.4,126.9L199.4,123.2L198.4,127.3L197.4,122.5L196.4,122.3L195.4,122.3L194.4,126.0L193.4,123.5L192.4,122.3L191.4,122.4L190.4,123.1L189.4,124.7L188.4,123.8L187.4,127.2L186.4,123.1L185.4,123.6L184.4,123.3L183.4,124.7L182.4,123.2L181.4,125.0L180.4,124.7L179.4,124.9L178.4,127.3L177.4,125.3L176.4,127.3L175.4,128.1L174.4,127.0L173.4,127.3L172.4,125.8L171.4,123.6L170.4,125.6L169.4,123.1L168.4,123.5L167.4,127.2L166.4,122.6L165.4,125.8L164.4,122.6L163.4,123.8L162.4,123.3L161.4,124.9L160.4,125.3L159.4,131.5L158.4,125.2L157.4,124.4L156.4,127.1L155.4,125.3L154.4,123.9L153.4,125.0L152.4,123.4L151.4,123.6L150.4,123.0L149.4,125.3L148.4,122.6L147.4,122.7L146.4,124.4L145.4,124.3L144.4,124.0L143.4,127.6L142.4,123.0L141.4,126.1L140.4,124.2L139.4,122.6L138.4,123.0L137.4,124.3L136.4,126.3L135.4,130.5L134.4,126.2L133.4,123.2L132.4,123.1L131.4,123.4L130.4,125.6L129.4,125.4L128.4,123.0L127.4,126.3L126.4,123.5L125.4,127.0L124.4,122.9L123.4,123.0L122.4,126.1L121.4,122.3L120.4,124.9L119.4,123.2L118.4,123.2L117.4,122.7L116.4,121.6L115.4,124.7L114.4,123.0L113.4,122.5L112.4,125.8L111.4,123.0L110.4,126.1L109.4,124.5L108.4,124.8L107.4,126.3L106.4,124.7L105.4,123.0L104.4,126.6L103.4,123.6L102.4,126.3L101.4,128.1L100.4,127.3L99.4,123.1L98.4,124.7L97.4,123.2L96.4,123.3L95.4,124.3L94.4,126.4L93.4,124.0L92.4,124.4L91.4,124.6L90.4,123.1L89.4,126.3L88.4,124.3L87.4,124.5L86.4,123.8L85.4,123.6L84.4,122.6L83.4,123.5L82.4,122.5L81.4,124.2L80.4,126.9L79.4,123.3L78.4,125.7L77.4,126.7L76.4,126.4L75.4,126.8L74.4,124.3L73.4,125.6L72.4,122.7L71.4,122.0L70.4,125.0L69.4,127.1L68.4,126.4L67.4,123.7L66.4,125.2L65.4,124.8L64.4,126.5L63.4,127.9L62.4,129.8L61.4,127.2L60.4,128.5L59.4,126.8L58.4,123.6L57.4,123.6L56.4,122.8L55.4,127.2L54.4,125.9L53.4,125.8L52.4,122.2L51.4,125.8L50.4,122.9L49.4,124.1L48.4,123.5L47.4,125.7L46.4,124.1L45.4,124.4L44.4,127.5L43.4,125.0L42.4,128.8L41.4,126.6L40.4,128.0L39.4,124.7L38.4,124.1L37.4,124.9L36.4,123.7L35.4,125.6L34.4,123.6L33.4,123.6L32.4,125.1L31.4,126.2L30.4,125.5L29.4,128.6L28.4,125.4L27.4,127.0L26.4,125.7L25.4,129.0L24.4,127.2Z"/>
<path fill="none" stroke="#b8b820" stroke-width="1.5" d="M537.6,100 L538,152 L540,353 L541.5,511 L542.5,578"/>
<line x1="538.40" y1="100" x2="538.48" y2="108" stroke="#ffff00" stroke-width="1.8"/>
<line x1="538.93" y1="152" x2="539.48" y2="205" stroke="#ffff00" stroke-width="1.8"/>
<line x1="539.96" y1="252" x2="540.25" y2="280" stroke="#ffff00" stroke-width="1.8"/>
<line x1="540.31" y1="286" x2="540.41" y2="296" stroke="#ffff00" stroke-width="1.8"/>
<line x1="540.99" y1="353" x2="541.68" y2="420" stroke="#ffff00" stroke-width="1.8"/>
<line x1="541.89" y1="440" x2="542.19" y2="470" stroke="#ffff00" stroke-width="1.8"/>
<line x1="542.55" y1="505" x2="543.30" y2="578" stroke="#ffff00" stroke-width="1.8"/>
<path fill="none" stroke="#ffff00" stroke-width="1.8" d="M542.5,578 L543.5,578 L544.5,540"/>
<path shape-rendering="crispEdges" fill="#ffff00" d="M544.0,504.5L545.0,500.9L546.0,497.8L547.0,496.6L548.0,495.1L549.0,500.6L550.0,500.5L551.0,503.0L552.0,510.2L553.0,512.2L554.0,514.1L555.0,514.2L556.0,515.2L557.0,517.7L558.0,519.6L559.0,521.3L560.0,522.3L561.0,524.0L562.0,525.6L563.0,525.9L564.0,525.4L565.0,527.5L566.0,528.2L567.0,530.9L568.0,533.3L569.0,531.9L570.0,534.8L571.0,535.6L572.0,533.5L573.0,538.1L574.0,535.3L575.0,537.0L576.0,539.4L577.0,539.3L578.0,539.1L579.0,539.8L580.0,539.3L581.0,537.1L582.0,539.2L583.0,538.5L584.0,537.5L585.0,539.2L586.0,536.7L587.0,537.7L588.0,536.7L589.0,538.8L590.0,538.5L591.0,534.7L592.0,539.3L593.0,539.4L594.0,537.1L595.0,540.0L596.0,540.9L597.0,537.8L598.0,538.0L599.0,537.9L600.0,539.6L601.0,537.5L602.0,541.8L603.0,542.8L604.0,542.8L605.0,538.8L606.0,543.4L607.0,543.4L608.0,540.1L609.0,544.7L610.0,542.1L611.0,544.3L612.0,542.2L613.0,541.5L614.0,543.5L615.0,540.3L616.0,543.1L617.0,542.8L618.0,544.6L619.0,544.5L620.0,545.2L621.0,541.6L622.0,545.6L623.0,541.3L624.0,546.0L625.0,545.6L626.0,545.4L627.0,544.3L628.0,543.8L629.0,540.7L630.0,538.3L631.0,542.4L632.0,542.0L633.0,541.8L634.0,544.2L635.0,544.8L636.0,538.6L637.0,543.7L638.0,541.7L639.0,544.0L640.0,544.5L641.0,546.3L642.0,547.2L643.0,543.5L644.0,547.9L645.0,546.8L646.0,547.5L647.0,545.5L648.0,547.5L649.0,546.1L650.0,545.5L651.0,548.0L652.0,547.7L653.0,545.7L654.0,548.3L655.0,548.6L656.0,546.0L657.0,548.8L658.0,547.4L659.0,548.0L660.0,547.5L661.0,546.9L662.0,550.2L663.0,550.2L664.0,546.6L665.0,550.8L666.0,547.6L667.0,549.3L668.0,549.8L669.0,549.0L670.0,546.1L671.0,549.6L672.0,549.7L673.0,548.9L674.0,550.3L675.0,549.3L676.0,547.7L677.0,549.0L678.0,546.5L679.0,550.4L680.0,551.0L681.0,547.1L682.0,548.5L683.0,549.8L684.0,550.9L685.0,548.0L686.0,550.4L687.0,551.0L688.0,548.5L689.0,550.9L690.0,551.2L691.0,549.5L692.0,553.7L693.0,552.1L694.0,553.8L695.0,553.1L696.0,553.4L697.0,554.1L698.0,550.3L699.0,554.3L700.0,554.6L701.0,554.2L702.0,554.8L703.0,552.7L704.0,552.9L705.0,554.0L706.0,550.6L707.0,549.5L708.0,554.0L709.0,551.9L710.0,553.2L711.0,551.4L712.0,549.2L713.0,552.4L714.0,554.0L715.0,544.5L716.0,552.3L717.0,550.5L718.0,549.1L719.0,553.6L720.0,551.1L721.0,550.8L722.0,550.5L723.0,552.4L724.0,552.1L725.0,554.0L726.0,556.4L727.0,551.4L728.0,554.3L729.0,554.4L730.0,552.8L731.0,550.0L732.0,553.7L733.0,553.5L734.0,552.1L735.0,551.4L736.0,554.4L737.0,550.9L738.0,552.2L739.0,554.6L740.0,554.2L741.0,552.5L742.0,554.3L743.0,553.2L744.0,554.1L745.0,551.2L746.0,555.3L747.0,547.6L748.0,550.6L749.0,553.1L750.0,554.3L751.0,553.0L752.0,553.1L753.0,551.8L754.0,553.2L755.0,555.4L756.0,554.4L757.0,550.3L758.0,555.8L759.0,553.4L760.0,556.9L761.0,557.2L762.0,556.4L763.0,557.4L764.0,557.1L765.0,554.3L766.0,556.0L767.0,556.8L768.0,554.1L769.0,558.2L770.0,555.3L771.0,556.8L772.0,554.4L773.0,556.3L774.0,557.9L775.0,558.3L776.0,558.9L777.0,557.2L778.0,559.3L779.0,560.6L780.0,560.4L781.0,559.9L782.0,557.6L783.0,559.6L784.0,556.4L785.0,556.0L786.0,558.9L787.0,560.2L788.0,555.6L789.0,557.7L790.0,559.5L791.0,559.9L792.0,558.3L793.0,553.0L794.0,557.9L795.0,558.0L796.0,555.8L797.0,557.9L798.0,557.6L799.0,558.9L800.0,555.8L801.0,555.8L802.0,555.7L803.0,558.7L804.0,556.8L805.0,559.3L806.0,558.0L807.0,554.6L808.0,545.4L809.0,547.1L810.0,550.5L811.0,548.1L812.0,548.5L813.0,548.9L814.0,548.2L815.0,546.0L816.0,544.7L817.0,545.2L818.0,548.2L819.0,548.6L820.0,547.9L821.0,546.3L822.0,546.1L823.0,544.6L824.0,547.2L825.0,548.9L826.0,548.1L827.0,545.9L828.0,545.2L829.0,541.7L830.0,545.8L831.0,548.4L832.0,554.2L833.0,546.8L834.0,559.1L835.0,561.0L836.0,561.9L837.0,563.5L838.0,561.4L839.0,558.6L840.0,562.3L841.0,557.9L842.0,560.2L843.0,559.6L844.0,562.6L845.0,559.8L846.0,558.7L847.0,561.5L848.0,560.1L849.0,562.4L850.0,558.5L851.0,558.8L852.0,560.9L853.0,559.0L854.0,558.7L855.0,560.0L856.0,559.1L857.0,561.5L858.0,560.9L859.0,560.0L860.0,563.3L861.0,560.9L862.0,562.0L863.0,559.5L864.0,562.2L865.0,558.8L866.0,562.1L867.0,562.9L868.0,563.4L869.0,563.7L870.0,558.6L871.0,561.8L872.0,562.2L873.0,559.1L874.0,562.2L875.0,559.8L876.0,561.5L877.0,558.8L878.0,558.2L879.0,561.7L880.0,561.0L881.0,560.8L882.0,557.3L883.0,558.0L884.0,558.2L885.0,562.8L886.0,560.5L887.0,561.3L888.0,559.6L889.0,559.8L890.0,559.5L891.0,557.5L892.0,559.9L893.0,558.9L894.0,558.4L895.0,560.5L896.0,556.4L897.0,559.2L898.0,561.7L899.0,562.5L900.0,559.2L901.0,561.5L902.0,558.2L903.0,562.2L904.0,559.9L905.0,561.8L906.0,558.9L907.0,558.1L908.0,557.4L909.0,560.8L910.0,561.4L911.0,560.4L912.0,561.3L913.0,561.5L914.0,557.4L915.0,561.2L916.0,561.5L917.0,558.1L918.0,558.8L919.0,562.5L920.0,560.3L921.0,559.8L922.0,562.6L923.0,558.7L924.0,562.2L925.0,560.4L926.0,561.1L927.0,562.1L928.0,557.5L929.0,561.8L930.0,561.4L931.0,556.9L932.0,560.8L933.0,559.8L934.0,558.5L935.0,559.0L936.0,556.7L937.0,558.7L938.0,561.0L939.0,558.5L940.0,557.9L941.0,557.6L942.0,558.1L943.0,557.0L944.0,559.0L945.0,560.0L946.0,555.3L947.0,558.8L948.0,556.6L949.0,557.2L950.0,557.5L951.0,557.9L952.0,559.3L953.0,556.1L954.0,560.8L955.0,561.1L956.0,561.0L957.0,559.8L958.0,556.6L959.0,559.6L960.0,561.9L961.0,558.4L962.0,559.8L963.0,559.9L964.0,561.4L965.0,561.2L966.0,558.1L967.0,555.8L968.0,561.1L969.0,561.6L970.0,562.0L971.0,557.8L972.0,557.9L973.0,561.0L974.0,558.1L975.0,561.9L976.0,562.1L977.0,562.5L978.0,561.1L979.0,560.9L980.0,562.0L981.0,559.1L982.0,560.2L983.0,559.3L984.0,556.6L985.0,558.3L986.0,559.5L987.0,557.7L988.0,556.7L989.0,559.7L990.0,560.3L991.0,560.0L992.0,556.9L993.0,560.0L994.0,560.3L995.0,560.1L996.0,559.3L997.0,560.2L998.0,560.3L999.0,557.0L1000.0,550.7L1001.0,559.2L1002.0,556.4L1003.0,559.0L1004.0,558.9L1005.0,559.5L1006.0,558.3L1007.0,557.0L1008.0,558.8L1009.0,559.7L1010.0,556.8L1011.0,561.5L1012.0,559.5L1013.0,558.2L1014.0,559.2L1015.0,559.7L1016.0,560.5L1017.0,559.3L1018.0,558.4L1019.0,551.8L1020.0,556.9L1021.0,561.3L1022.0,557.4L1023.0,558.9L1024.0,561.5L1025.0,561.2L1026.0,557.5L1027.0,559.6L1028.0,560.3L1029.0,560.3L1030.0,555.0L1031.0,557.7L1032.0,558.3L1033.0,559.7L1034.0,555.9L1035.0,560.0L1036.0,558.6L1037.0,558.4L1038.0,559.4L1039.0,561.0L1040.0,561.0L1041.0,558.7L1042.0,560.1L1043.0,559.9L1044.0,557.3L1045.0,557.1L1046.0,559.6L1047.0,556.4L1048.0,556.3L1049.0,557.3L1050.0,558.2L1050.0,597.6L1049.0,600.8L1048.0,596.0L1047.0,596.6L1046.0,595.2L1045.0,596.4L1044.0,595.8L1043.0,596.6L1042.0,596.3L1041.0,597.5L1040.0,596.5L1039.0,595.9L1038.0,597.1L1037.0,597.0L1036.0,596.5L1035.0,600.2L1034.0,596.2L1033.0,596.7L1032.0,598.3L1031.0,596.2L1030.0,596.1L1029.0,596.3L1028.0,595.6L1027.0,599.6L1026.0,597.4L1025.0,597.7L1024.0,596.9L1023.0,596.8L1022.0,594.9L1021.0,595.2L1020.0,600.6L1019.0,600.9L1018.0,598.4L1017.0,601.4L1016.0,601.4L1015.0,596.6L1014.0,600.0L1013.0,598.1L1012.0,600.3L1011.0,596.7L1010.0,598.0L1009.0,600.0L1008.0,597.4L1007.0,597.9L1006.0,597.1L1005.0,600.6L1004.0,600.3L1003.0,595.6L1002.0,595.4L1001.0,596.8L1000.0,595.5L999.0,595.6L998.0,596.8L997.0,596.1L996.0,599.3L995.0,595.6L994.0,597.6L993.0,597.0L992.0,594.5L991.0,597.9L990.0,596.5L989.0,598.3L988.0,597.9L987.0,595.5L986.0,596.9L985.0,596.3L984.0,597.8L983.0,599.7L982.0,599.7L981.0,599.6L980.0,596.0L979.0,599.3L978.0,598.9L977.0,599.4L976.0,597.7L975.0,598.6L974.0,599.8L973.0,599.9L972.0,597.0L971.0,599.0L970.0,597.1L969.0,599.2L968.0,597.0L967.0,596.4L966.0,597.9L965.0,597.0L964.0,597.0L963.0,598.9L962.0,598.9L961.0,596.4L960.0,597.3L959.0,595.6L958.0,596.5L957.0,594.9L956.0,596.3L955.0,595.4L954.0,596.6L953.0,597.6L952.0,599.7L951.0,604.4L950.0,596.2L949.0,599.6L948.0,597.4L947.0,597.0L946.0,595.8L945.0,600.8L944.0,596.3L943.0,596.1L942.0,599.9L941.0,597.8L940.0,595.1L939.0,599.4L938.0,597.6L937.0,598.4L936.0,598.9L935.0,600.6L934.0,597.4L933.0,598.2L932.0,597.2L931.0,596.9L930.0,604.3L929.0,597.8L928.0,597.5L927.0,598.7L926.0,601.0L925.0,597.6L924.0,599.1L923.0,598.6L922.0,596.5L921.0,600.5L920.0,600.2L919.0,598.6L918.0,600.6L917.0,599.3L916.0,595.9L915.0,599.5L914.0,598.6L913.0,595.4L912.0,595.1L911.0,595.6L910.0,594.6L909.0,596.5L908.0,600.1L907.0,598.9L906.0,596.0L905.0,600.9L904.0,596.7L903.0,596.6L902.0,597.5L901.0,599.1L900.0,597.1L899.0,599.9L898.0,596.9L897.0,600.1L896.0,600.9L895.0,601.2L894.0,598.3L893.0,597.0L892.0,598.3L891.0,599.0L890.0,599.6L889.0,597.5L888.0,600.0L887.0,596.2L886.0,597.5L885.0,601.4L884.0,598.0L883.0,598.5L882.0,601.7L881.0,606.6L880.0,598.4L879.0,598.2L878.0,597.6L877.0,599.4L876.0,600.8L875.0,599.8L874.0,598.1L873.0,597.1L872.0,598.8L871.0,601.3L870.0,598.5L869.0,599.6L868.0,601.5L867.0,599.6L866.0,601.1L865.0,604.4L864.0,604.1L863.0,601.6L862.0,600.5L861.0,598.5L860.0,601.4L859.0,600.2L858.0,602.4L857.0,601.9L856.0,603.1L855.0,601.4L854.0,600.8L853.0,604.2L852.0,603.3L851.0,604.2L850.0,604.2L849.0,605.1L848.0,603.9L847.0,608.6L846.0,606.0L845.0,606.3L844.0,611.7L843.0,608.8L842.0,607.9L841.0,607.5L840.0,609.7L839.0,605.2L838.0,604.5L837.0,604.5L836.0,605.5L835.0,604.3L834.0,605.5L833.0,601.4L832.0,601.3L831.0,598.2L830.0,594.9L829.0,596.6L828.0,595.0L827.0,596.6L826.0,597.8L825.0,596.4L824.0,596.3L823.0,599.4L822.0,598.2L821.0,595.7L820.0,595.2L819.0,594.4L818.0,595.2L817.0,596.6L816.0,596.3L815.0,595.8L814.0,595.4L813.0,594.1L812.0,594.9L811.0,598.5L810.0,597.3L809.0,596.3L808.0,593.1L807.0,593.7L806.0,594.5L805.0,597.3L804.0,594.7L803.0,594.4L802.0,594.0L801.0,597.6L800.0,596.1L799.0,596.6L798.0,595.4L797.0,593.1L796.0,595.5L795.0,596.1L794.0,598.1L793.0,602.4L792.0,599.2L791.0,600.0L790.0,600.6L789.0,600.4L788.0,600.7L787.0,600.4L786.0,603.4L785.0,599.6L784.0,603.4L783.0,599.8L782.0,602.1L781.0,608.0L780.0,600.9L779.0,599.0L778.0,597.1L777.0,595.7L776.0,595.5L775.0,593.5L774.0,596.0L773.0,595.3L772.0,591.4L771.0,592.9L770.0,592.6L769.0,589.8L768.0,590.1L767.0,593.6L766.0,590.2L765.0,591.1L764.0,589.8L763.0,590.3L762.0,594.6L761.0,593.8L760.0,593.2L759.0,591.1L758.0,590.2L757.0,590.7L756.0,589.7L755.0,588.2L754.0,594.0L753.0,593.2L752.0,592.9L751.0,592.5L750.0,589.6L749.0,590.5L748.0,588.9L747.0,592.6L746.0,589.0L745.0,591.4L744.0,590.1L743.0,593.8L742.0,593.8L741.0,591.1L740.0,592.7L739.0,592.8L738.0,593.8L737.0,594.0L736.0,592.7L735.0,589.4L734.0,592.0L733.0,593.9L732.0,592.9L731.0,589.3L730.0,589.4L729.0,589.6L728.0,590.7L727.0,590.3L726.0,589.1L725.0,589.0L724.0,592.6L723.0,591.5L722.0,588.7L721.0,589.3L720.0,592.0L719.0,588.6L718.0,588.4L717.0,591.7L716.0,591.5L715.0,590.8L714.0,588.5L713.0,589.6L712.0,590.7L711.0,592.6L710.0,592.6L709.0,593.7L708.0,592.3L707.0,592.9L706.0,587.8L705.0,589.4L704.0,589.2L703.0,588.0L702.0,598.2L701.0,591.3L700.0,588.7L699.0,591.0L698.0,593.1L697.0,592.8L696.0,588.1L695.0,587.5L694.0,589.3L693.0,589.4L692.0,590.2L691.0,588.1L690.0,590.2L689.0,588.3L688.0,587.4L687.0,589.8L686.0,589.2L685.0,588.5L684.0,592.4L683.0,587.3L682.0,586.3L681.0,589.6L680.0,586.7L679.0,588.3L678.0,586.2L677.0,586.2L676.0,586.8L675.0,586.6L674.0,589.1L673.0,590.1L672.0,588.2L671.0,584.9L670.0,585.2L669.0,588.5L668.0,585.1L667.0,589.2L666.0,585.4L665.0,586.4L664.0,588.3L663.0,586.4L662.0,584.1L661.0,586.8L660.0,584.6L659.0,585.3L658.0,585.4L657.0,586.6L656.0,588.0L655.0,585.9L654.0,586.0L653.0,586.9L652.0,589.9L651.0,586.8L650.0,586.9L649.0,587.4L648.0,587.9L647.0,584.8L646.0,583.9L645.0,584.4L644.0,583.4L643.0,586.6L642.0,586.5L641.0,583.2L640.0,583.9L639.0,586.5L638.0,586.7L637.0,587.7L636.0,586.0L635.0,584.3L634.0,584.2L633.0,585.0L632.0,583.2L631.0,587.0L630.0,586.8L629.0,585.3L628.0,583.5L627.0,584.0L626.0,586.5L625.0,584.4L624.0,584.3L623.0,587.5L622.0,585.5L621.0,582.8L620.0,583.1L619.0,583.9L618.0,584.0L617.0,582.7L616.0,582.8L615.0,583.5L614.0,580.7L613.0,580.3L612.0,580.1L611.0,580.1L610.0,580.5L609.0,583.4L608.0,583.5L607.0,579.2L606.0,580.1L605.0,579.0L604.0,578.1L603.0,578.3L602.0,579.1L601.0,579.4L600.0,577.3L599.0,582.2L598.0,581.9L597.0,581.8L596.0,578.0L595.0,581.0L594.0,578.8L593.0,580.6L592.0,578.3L591.0,579.2L590.0,581.4L589.0,580.6L588.0,580.9L587.0,576.6L586.0,575.8L585.0,579.2L584.0,574.7L583.0,574.3L582.0,573.8L581.0,575.0L580.0,572.9L579.0,577.4L578.0,573.9L577.0,573.5L576.0,573.1L575.0,574.2L574.0,572.1L573.0,570.2L572.0,569.4L571.0,569.1L570.0,574.4L569.0,570.8L568.0,570.2L567.0,565.9L566.0,567.4L565.0,564.7L564.0,564.9L563.0,564.0L562.0,562.9L561.0,562.5L560.0,560.9L559.0,561.0L558.0,558.8L557.0,560.6L556.0,557.0L555.0,559.2L554.0,555.3L553.0,556.7L552.0,554.7L551.0,554.1L550.0,555.2L549.0,553.2L548.0,557.5L547.0,553.8L546.0,552.1L545.0,551.5L544.0,550.7Z"/>
</g>
<rect x="24.40" y="44.40" width="1024.80" height="594.00" fill="none" stroke="#8a846c" stroke-width="1"/>
<line x1="536.80" y1="44.40" x2="536.80" y2="638.40" stroke="#8a846c" stroke-width="1.5"/>
<line x1="24.40" y1="341.40" x2="1049.20" y2="341.40" stroke="#8a846c" stroke-width="1.5"/>
<line x1="44.90" y1="44.40" x2="44.90" y2="50.40" stroke="#8a846c" stroke-width="1.3"/>
<line x1="44.90" y1="638.40" x2="44.90" y2="632.40" stroke="#8a846c" stroke-width="1.3"/>
<line x1="44.90" y1="337.90" x2="44.90" y2="344.90" stroke="#8a846c" stroke-width="1.3"/>
<rect x="44.15" y="103.05" width="1.5" height="1.5" fill="#7a7462"/>
<rect x="44.15" y="162.45" width="1.5" height="1.5" fill="#7a7462"/>
<rect x="44.15" y="221.85" width="1.5" height="1.5" fill="#7a7462"/>
<rect x="44.15" y="281.25" width="1.5" height="1.5" fill="#7a7462"/>
<rect x="44.15" y="400.05" width="1.5" height="1.5" fill="#7a7462"/>
<rect x="44.15" y="459.45" width="1.5" height="1.5" fill="#7a7462"/>
<rect x="44.15" y="518.85" width="1.5" height="1.5" fill="#7a7462"/>
<rect x="44.15" y="578.25" width="1.5" height="1.5" fill="#7a7462"/>
<line x1="65.39" y1="44.40" x2="65.39" y2="50.40" stroke="#8a846c" stroke-width="1.3"/>
<line x1="65.39" y1="638.40" x2="65.39" y2="632.40" stroke="#8a846c" stroke-width="1.3"/>
<line x1="65.39" y1="337.90" x2="65.39" y2="344.90" stroke="#8a846c" stroke-width="1.3"/>
<rect x="64.64" y="103.05" width="1.5" height="1.5" fill="#7a7462"/>
<rect x="64.64" y="162.45" width="1.5" height="1.5" fill="#7a7462"/>
<rect x="64.64" y="221.85" width="1.5" height="1.5" fill="#7a7462"/>
<rect x="64.64" y="281.25" width="1.5" height="1.5" fill="#7a7462"/>
<rect x="64.64" y="400.05" width="1.5" height="1.5" fill="#7a7462"/>
<rect x="64.64" y="459.45" width="1.5" height="1.5" fill="#7a7462"/>
<rect x="64.64" y="518.85" width="1.5" height="1.5" fill="#7a7462"/>
<rect x="64.64" y="578.25" width="1.5" height="1.5" fill="#7a7462"/>
<line x1="85.89" y1="44.40" x2="85.89" y2="50.40" stroke="#8a846c" stroke-width="1.3"/>
<line x1="85.89" y1="638.40" x2="85.89" y2="632.40" stroke="#8a846c" stroke-width="1.3"/>
<line x1="85.89" y1="337.90" x2="85.89" y2="344.90" stroke="#8a846c" stroke-width="1.3"/>
<rect x="85.14" y="103.05" width="1.5" height="1.5" fill="#7a7462"/>
<rect x="85.14" y="162.45" width="1.5" height="1.5" fill="#7a7462"/>
<rect x="85.14" y="221.85" width="1.5" height="1.5" fill="#7a7462"/>
<rect x="85.14" y="281.25" width="1.5" height="1.5" fill="#7a7462"/>
<rect x="85.14" y="400.05" width="1.5" height="1.5" fill="#7a7462"/>
<rect x="85.14" y="459.45" width="1.5" height="1.5" fill="#7a7462"/>
<rect x="85.14" y="518.85" width="1.5" height="1.5" fill="#7a7462"/>
<rect x="85.14" y="578.25" width="1.5" height="1.5" fill="#7a7462"/>
<line x1="106.38" y1="44.40" x2="106.38" y2="50.40" stroke="#8a846c" stroke-width="1.3"/>
<line x1="106.38" y1="638.40" x2="106.38" y2="632.40" stroke="#8a846c" stroke-width="1.3"/>
<line x1="106.38" y1="337.90" x2="106.38" y2="344.90" stroke="#8a846c" stroke-width="1.3"/>
<rect x="105.63" y="103.05" width="1.5" height="1.5" fill="#7a7462"/>
<rect x="105.63" y="162.45" width="1.5" height="1.5" fill="#7a7462"/>
<rect x="105.63" y="221.85" width="1.5" height="1.5" fill="#7a7462"/>
<rect x="105.63" y="281.25" width="1.5" height="1.5" fill="#7a7462"/>
<rect x="105.63" y="400.05" width="1.5" height="1.5" fill="#7a7462"/>
<rect x="105.63" y="459.45" width="1.5" height="1.5" fill="#7a7462"/>
<rect x="105.63" y="518.85" width="1.5" height="1.5" fill="#7a7462"/>
<rect x="105.63" y="578.25" width="1.5" height="1.5" fill="#7a7462"/>
<line x1="126.88" y1="44.40" x2="126.88" y2="54.40" stroke="#8a846c" stroke-width="1.3"/>
<line x1="126.88" y1="638.40" x2="126.88" y2="628.40" stroke="#8a846c" stroke-width="1.3"/>
<line x1="126.88" y1="336.40" x2="126.88" y2="346.40" stroke="#8a846c" stroke-width="1.3"/>
<line x1="147.38" y1="44.40" x2="147.38" y2="50.40" stroke="#8a846c" stroke-width="1.3"/>
<line x1="147.38" y1="638.40" x2="147.38" y2="632.40" stroke="#8a846c" stroke-width="1.3"/>
<line x1="147.38" y1="337.90" x2="147.38" y2="344.90" stroke="#8a846c" stroke-width="1.3"/>
<rect x="146.63" y="103.05" width="1.5" height="1.5" fill="#7a7462"/>
<rect x="146.63" y="162.45" width="1.5" height="1.5" fill="#7a7462"/>
<rect x="146.63" y="221.85" width="1.5" height="1.5" fill="#7a7462"/>
<rect x="146.63" y="281.25" width="1.5" height="1.5" fill="#7a7462"/>
<rect x="146.63" y="400.05" width="1.5" height="1.5" fill="#7a7462"/>
<rect x="146.63" y="459.45" width="1.5" height="1.5" fill="#7a7462"/>
<rect x="146.63" y="518.85" width="1.5" height="1.5" fill="#7a7462"/>
<rect x="146.63" y="578.25" width="1.5" height="1.5" fill="#7a7462"/>
<line x1="167.87" y1="44.40" x2="167.87" y2="50.40" stroke="#8a846c" stroke-width="1.3"/>
<line x1="167.87" y1="638.40" x2="167.87" y2="632.40" stroke="#8a846c" stroke-width="1.3"/>
<line x1="167.87" y1="337.90" x2="167.87" y2="344.90" stroke="#8a846c" stroke-width="1.3"/>
<rect x="167.12" y="103.05" width="1.5" height="1.5" fill="#7a7462"/>
<rect x="167.12" y="162.45" width="1.5" height="1.5" fill="#7a7462"/>
<rect x="167.12" y="221.85" width="1.5" height="1.5" fill="#7a7462"/>
<rect x="167.12" y="281.25" width="1.5" height="1.5" fill="#7a7462"/>
<rect x="167.12" y="400.05" width="1.5" height="1.5" fill="#7a7462"/>
<rect x="167.12" y="459.45" width="1.5" height="1.5" fill="#7a7462"/>
<rect x="167.12" y="518.85" width="1.5" height="1.5" fill="#7a7462"/>
<rect x="167.12" y="578.25" width="1.5" height="1.5" fill="#7a7462"/>
<line x1="188.37" y1="44.40" x2="188.37" y2="50.40" stroke="#8a846c" stroke-width="1.3"/>
<line x1="188.37" y1="638.40" x2="188.37" y2="632.40" stroke="#8a846c" stroke-width="1.3"/>
<line x1="188.37" y1="337.90" x2="188.37" y2="344.90" stroke="#8a846c" stroke-width="1.3"/>
<rect x="187.62" y="103.05" width="1.5" height="1.5" fill="#7a7462"/>
<rect x="187.62" y="162.45" width="1.5" height="1.5" fill="#7a7462"/>
<rect x="187.62" y="221.85" width="1.5" height="1.5" fill="#7a7462"/>
<rect x="187.62" y="281.25" width="1.5" height="1.5" fill="#7a7462"/>
<rect x="187.62" y="400.05" width="1.5" height="1.5" fill="#7a7462"/>
<rect x="187.62" y="459.45" width="1.5" height="1.5" fill="#7a7462"/>
<rect x="187.62" y="518.85" width="1.5" height="1.5" fill="#7a7462"/>
<rect x="187.62" y="578.25" width="1.5" height="1.5" fill="#7a7462"/>
<line x1="208.86" y1="44.40" x2="208.86" y2="50.40" stroke="#8a846c" stroke-width="1.3"/>
<line x1="208.86" y1="638.40" x2="208.86" y2="632.40" stroke="#8a846c" stroke-width="1.3"/>
<line x1="208.86" y1="337.90" x2="208.86" y2="344.90" stroke="#8a846c" stroke-width="1.3"/>
<rect x="208.11" y="103.05" width="1.5" height="1.5" fill="#7a7462"/>
<rect x="208.11" y="162.45" width="1.5" height="1.5" fill="#7a7462"/>
<rect x="208.11" y="221.85" width="1.5" height="1.5" fill="#7a7462"/>
<rect x="208.11" y="281.25" width="1.5" height="1.5" fill="#7a7462"/>
<rect x="208.11" y="400.05" width="1.5" height="1.5" fill="#7a7462"/>
<rect x="208.11" y="459.45" width="1.5" height="1.5" fill="#7a7462"/>
<rect x="208.11" y="518.85" width="1.5" height="1.5" fill="#7a7462"/>
<rect x="208.11" y="578.25" width="1.5" height="1.5" fill="#7a7462"/>
<line x1="229.36" y1="44.40" x2="229.36" y2="54.40" stroke="#8a846c" stroke-width="1.3"/>
<line x1="229.36" y1="638.40" x2="229.36" y2="628.40" stroke="#8a846c" stroke-width="1.3"/>
<line x1="229.36" y1="336.40" x2="229.36" y2="346.40" stroke="#8a846c" stroke-width="1.3"/>
<line x1="249.86" y1="44.40" x2="249.86" y2="50.40" stroke="#8a846c" stroke-width="1.3"/>
<line x1="249.86" y1="638.40" x2="249.86" y2="632.40" stroke="#8a846c" stroke-width="1.3"/>
<line x1="249.86" y1="337.90" x2="249.86" y2="344.90" stroke="#8a846c" stroke-width="1.3"/>
<rect x="249.11" y="103.05" width="1.5" height="1.5" fill="#7a7462"/>
<rect x="249.11" y="162.45" width="1.5" height="1.5" fill="#7a7462"/>
<rect x="249.11" y="221.85" width="1.5" height="1.5" fill="#7a7462"/>
<rect x="249.11" y="281.25" width="1.5" height="1.5" fill="#7a7462"/>
<rect x="249.11" y="400.05" width="1.5" height="1.5" fill="#7a7462"/>
<rect x="249.11" y="459.45" width="1.5" height="1.5" fill="#7a7462"/>
<rect x="249.11" y="518.85" width="1.5" height="1.5" fill="#7a7462"/>
<rect x="249.11" y="578.25" width="1.5" height="1.5" fill="#7a7462"/>
<line x1="270.35" y1="44.40" x2="270.35" y2="50.40" stroke="#8a846c" stroke-width="1.3"/>
<line x1="270.35" y1="638.40" x2="270.35" y2="632.40" stroke="#8a846c" stroke-width="1.3"/>
<line x1="270.35" y1="337.90" x2="270.35" y2="344.90" stroke="#8a846c" stroke-width="1.3"/>
<rect x="269.60" y="103.05" width="1.5" height="1.5" fill="#7a7462"/>
<rect x="269.60" y="162.45" width="1.5" height="1.5" fill="#7a7462"/>
<rect x="269.60" y="221.85" width="1.5" height="1.5" fill="#7a7462"/>
<rect x="269.60" y="281.25" width="1.5" height="1.5" fill="#7a7462"/>
<rect x="269.60" y="400.05" width="1.5" height="1.5" fill="#7a7462"/>
<rect x="269.60" y="459.45" width="1.5" height="1.5" fill="#7a7462"/>
<rect x="269.60" y="518.85" width="1.5" height="1.5" fill="#7a7462"/>
<rect x="269.60" y="578.25" width="1.5" height="1.5" fill="#7a7462"/>
<line x1="290.85" y1="44.40" x2="290.85" y2="50.40" stroke="#8a846c" stroke-width="1.3"/>
<line x1="290.85" y1="638.40" x2="290.85" y2="632.40" stroke="#8a846c" stroke-width="1.3"/>
<line x1="290.85" y1="337.90" x2="290.85" y2="344.90" stroke="#8a846c" stroke-width="1.3"/>
<rect x="290.10" y="103.05" width="1.5" height="1.5" fill="#7a7462"/>
<rect x="290.10" y="162.45" width="1.5" height="1.5" fill="#7a7462"/>
<rect x="290.10" y="221.85" width="1.5" height="1.5" fill="#7a7462"/>
<rect x="290.10" y="281.25" width="1.5" height="1.5" fill="#7a7462"/>
<rect x="290.10" y="400.05" width="1.5" height="1.5" fill="#7a7462"/>
<rect x="290.10" y="459.45" width="1.5" height="1.5" fill="#7a7462"/>
<rect x="290.10" y="518.85" width="1.5" height="1.5" fill="#7a7462"/>
<rect x="290.10" y="578.25" width="1.5" height="1.5" fill="#7a7462"/>
<line x1="311.34" y1="44.40" x2="311.34" y2="50.40" stroke="#8a846c" stroke-width="1.3"/>
<line x1="311.34" y1="638.40" x2="311.34" y2="632.40" stroke="#8a846c" stroke-width="1.3"/>
<line x1="311.34" y1="337.90" x2="311.34" y2="344.90" stroke="#8a846c" stroke-width="1.3"/>
<rect x="310.59" y="103.05" width="1.5" height="1.5" fill="#7a7462"/>
<rect x="310.59" y="162.45" width="1.5" height="1.5" fill="#7a7462"/>
<rect x="310.59" y="221.85" width="1.5" height="1.5" fill="#7a7462"/>
<rect x="310.59" y="281.25" width="1.5" height="1.5" fill="#7a7462"/>
<rect x="310.59" y="400.05" width="1.5" height="1.5" fill="#7a7462"/>
<rect x="310.59" y="459.45" width="1.5" height="1.5" fill="#7a7462"/>
<rect x="310.59" y="518.85" width="1.5" height="1.5" fill="#7a7462"/>
<rect x="310.59" y="578.25" width="1.5" height="1.5" fill="#7a7462"/>
<line x1="331.84" y1="44.40" x2="331.84" y2="54.40" stroke="#8a846c" stroke-width="1.3"/>
<line x1="331.84" y1="638.40" x2="331.84" y2="628.40" stroke="#8a846c" stroke-width="1.3"/>
<line x1="331.84" y1="336.40" x2="331.84" y2="346.40" stroke="#8a846c" stroke-width="1.3"/>
<line x1="352.34" y1="44.40" x2="352.34" y2="50.40" stroke="#8a846c" stroke-width="1.3"/>
<line x1="352.34" y1="638.40" x2="352.34" y2="632.40" stroke="#8a846c" stroke-width="1.3"/>
<line x1="352.34" y1="337.90" x2="352.34" y2="344.90" stroke="#8a846c" stroke-width="1.3"/>
<rect x="351.59" y="103.05" width="1.5" height="1.5" fill="#7a7462"/>
<rect x="351.59" y="162.45" width="1.5" height="1.5" fill="#7a7462"/>
<rect x="351.59" y="221.85" width="1.5" height="1.5" fill="#7a7462"/>
<rect x="351.59" y="281.25" width="1.5" height="1.5" fill="#7a7462"/>
<rect x="351.59" y="400.05" width="1.5" height="1.5" fill="#7a7462"/>
<rect x="351.59" y="459.45" width="1.5" height="1.5" fill="#7a7462"/>
<rect x="351.59" y="518.85" width="1.5" height="1.5" fill="#7a7462"/>
<rect x="351.59" y="578.25" width="1.5" height="1.5" fill="#7a7462"/>
<line x1="372.83" y1="44.40" x2="372.83" y2="50.40" stroke="#8a846c" stroke-width="1.3"/>
<line x1="372.83" y1="638.40" x2="372.83" y2="632.40" stroke="#8a846c" stroke-width="1.3"/>
<line x1="372.83" y1="337.90" x2="372.83" y2="344.90" stroke="#8a846c" stroke-width="1.3"/>
<rect x="372.08" y="103.05" width="1.5" height="1.5" fill="#7a7462"/>
<rect x="372.08" y="162.45" width="1.5" height="1.5" fill="#7a7462"/>
<rect x="372.08" y="221.85" width="1.5" height="1.5" fill="#7a7462"/>
<rect x="372.08" y="281.25" width="1.5" height="1.5" fill="#7a7462"/>
<rect x="372.08" y="400.05" width="1.5" height="1.5" fill="#7a7462"/>
<rect x="372.08" y="459.45" width="1.5" height="1.5" fill="#7a7462"/>
<rect x="372.08" y="518.85" width="1.5" height="1.5" fill="#7a7462"/>
<rect x="372.08" y="578.25" width="1.5" height="1.5" fill="#7a7462"/>
<line x1="393.33" y1="44.40" x2="393.33" y2="50.40" stroke="#8a846c" stroke-width="1.3"/>
<line x1="393.33" y1="638.40" x2="393.33" y2="632.40" stroke="#8a846c" stroke-width="1.3"/>
<line x1="393.33" y1="337.90" x2="393.33" y2="344.90" stroke="#8a846c" stroke-width="1.3"/>
<rect x="392.58" y="103.05" width="1.5" height="1.5" fill="#7a7462"/>
<rect x="392.58" y="162.45" width="1.5" height="1.5" fill="#7a7462"/>
<rect x="392.58" y="221.85" width="1.5" height="1.5" fill="#7a7462"/>
<rect x="392.58" y="281.25" width="1.5" height="1.5" fill="#7a7462"/>
<rect x="392.58" y="400.05" width="1.5" height="1.5" fill="#7a7462"/>
<rect x="392.58" y="459.45" width="1.5" height="1.5" fill="#7a7462"/>
<rect x="392.58" y="518.85" width="1.5" height="1.5" fill="#7a7462"/>
<rect x="392.58" y="578.25" width="1.5" height="1.5" fill="#7a7462"/>
<line x1="413.82" y1="44.40" x2="413.82" y2="50.40" stroke="#8a846c" stroke-width="1.3"/>
<line x1="413.82" y1="638.40" x2="413.82" y2="632.40" stroke="#8a846c" stroke-width="1.3"/>
<line x1="413.82" y1="337.90" x2="413.82" y2="344.90" stroke="#8a846c" stroke-width="1.3"/>
<rect x="413.07" y="103.05" width="1.5" height="1.5" fill="#7a7462"/>
<rect x="413.07" y="162.45" width="1.5" height="1.5" fill="#7a7462"/>
<rect x="413.07" y="221.85" width="1.5" height="1.5" fill="#7a7462"/>
<rect x="413.07" y="281.25" width="1.5" height="1.5" fill="#7a7462"/>
<rect x="413.07" y="400.05" width="1.5" height="1.5" fill="#7a7462"/>
<rect x="413.07" y="459.45" width="1.5" height="1.5" fill="#7a7462"/>
<rect x="413.07" y="518.85" width="1.5" height="1.5" fill="#7a7462"/>
<rect x="413.07" y="578.25" width="1.5" height="1.5" fill="#7a7462"/>
<line x1="434.32" y1="44.40" x2="434.32" y2="54.40" stroke="#8a846c" stroke-width="1.3"/>
<line x1="434.32" y1="638.40" x2="434.32" y2="628.40" stroke="#8a846c" stroke-width="1.3"/>
<line x1="434.32" y1="336.40" x2="434.32" y2="346.40" stroke="#8a846c" stroke-width="1.3"/>
<line x1="454.82" y1="44.40" x2="454.82" y2="50.40" stroke="#8a846c" stroke-width="1.3"/>
<line x1="454.82" y1="638.40" x2="454.82" y2="632.40" stroke="#8a846c" stroke-width="1.3"/>
<line x1="454.82" y1="337.90" x2="454.82" y2="344.90" stroke="#8a846c" stroke-width="1.3"/>
<rect x="454.07" y="103.05" width="1.5" height="1.5" fill="#7a7462"/>
<rect x="454.07" y="162.45" width="1.5" height="1.5" fill="#7a7462"/>
<rect x="454.07" y="221.85" width="1.5" height="1.5" fill="#7a7462"/>
<rect x="454.07" y="281.25" width="1.5" height="1.5" fill="#7a7462"/>
<rect x="454.07" y="400.05" width="1.5" height="1.5" fill="#7a7462"/>
<rect x="454.07" y="459.45" width="1.5" height="1.5" fill="#7a7462"/>
<rect x="454.07" y="518.85" width="1.5" height="1.5" fill="#7a7462"/>
<rect x="454.07" y="578.25" width="1.5" height="1.5" fill="#7a7462"/>
<line x1="475.31" y1="44.40" x2="475.31" y2="50.40" stroke="#8a846c" stroke-width="1.3"/>
<line x1="475.31" y1="638.40" x2="475.31" y2="632.40" stroke="#8a846c" stroke-width="1.3"/>
<line x1="475.31" y1="337.90" x2="475.31" y2="344.90" stroke="#8a846c" stroke-width="1.3"/>
<rect x="474.56" y="103.05" width="1.5" height="1.5" fill="#7a7462"/>
<rect x="474.56" y="162.45" width="1.5" height="1.5" fill="#7a7462"/>
<rect x="474.56" y="221.85" width="1.5" height="1.5" fill="#7a7462"/>
<rect x="474.56" y="281.25" width="1.5" height="1.5" fill="#7a7462"/>
<rect x="474.56" y="400.05" width="1.5" height="1.5" fill="#7a7462"/>
<rect x="474.56" y="459.45" width="1.5" height="1.5" fill="#7a7462"/>
<rect x="474.56" y="518.85" width="1.5" height="1.5" fill="#7a7462"/>
<rect x="474.56" y="578.25" width="1.5" height="1.5" fill="#7a7462"/>
<line x1="495.81" y1="44.40" x2="495.81" y2="50.40" stroke="#8a846c" stroke-width="1.3"/>
<line x1="495.81" y1="638.40" x2="495.81" y2="632.40" stroke="#8a846c" stroke-width="1.3"/>
<line x1="495.81" y1="337.90" x2="495.81" y2="344.90" stroke="#8a846c" stroke-width="1.3"/>
<rect x="495.06" y="103.05" width="1.5" height="1.5" fill="#7a7462"/>
<rect x="495.06" y="162.45" width="1.5" height="1.5" fill="#7a7462"/>
<rect x="495.06" y="221.85" width="1.5" height="1.5" fill="#7a7462"/>
<rect x="495.06" y="281.25" width="1.5" height="1.5" fill="#7a7462"/>
<rect x="495.06" y="400.05" width="1.5" height="1.5" fill="#7a7462"/>
<rect x="495.06" y="459.45" width="1.5" height="1.5" fill="#7a7462"/>
<rect x="495.06" y="518.85" width="1.5" height="1.5" fill="#7a7462"/>
<rect x="495.06" y="578.25" width="1.5" height="1.5" fill="#7a7462"/>
<line x1="516.30" y1="44.40" x2="516.30" y2="50.40" stroke="#8a846c" stroke-width="1.3"/>
<line x1="516.30" y1="638.40" x2="516.30" y2="632.40" stroke="#8a846c" stroke-width="1.3"/>
<line x1="516.30" y1="337.90" x2="516.30" y2="344.90" stroke="#8a846c" stroke-width="1.3"/>
<rect x="515.55" y="103.05" width="1.5" height="1.5" fill="#7a7462"/>
<rect x="515.55" y="162.45" width="1.5" height="1.5" fill="#7a7462"/>
<rect x="515.55" y="221.85" width="1.5" height="1.5" fill="#7a7462"/>
<rect x="515.55" y="281.25" width="1.5" height="1.5" fill="#7a7462"/>
<rect x="515.55" y="400.05" width="1.5" height="1.5" fill="#7a7462"/>
<rect x="515.55" y="459.45" width="1.5" height="1.5" fill="#7a7462"/>
<rect x="515.55" y="518.85" width="1.5" height="1.5" fill="#7a7462"/>
<rect x="515.55" y="578.25" width="1.5" height="1.5" fill="#7a7462"/>
<line x1="536.80" y1="44.40" x2="536.80" y2="54.40" stroke="#8a846c" stroke-width="1.3"/>
<line x1="536.80" y1="638.40" x2="536.80" y2="628.40" stroke="#8a846c" stroke-width="1.3"/>
<line x1="536.80" y1="336.40" x2="536.80" y2="346.40" stroke="#8a846c" stroke-width="1.3"/>
<line x1="557.30" y1="44.40" x2="557.30" y2="50.40" stroke="#8a846c" stroke-width="1.3"/>
<line x1="557.30" y1="638.40" x2="557.30" y2="632.40" stroke="#8a846c" stroke-width="1.3"/>
<line x1="557.30" y1="337.90" x2="557.30" y2="344.90" stroke="#8a846c" stroke-width="1.3"/>
<rect x="556.55" y="103.05" width="1.5" height="1.5" fill="#7a7462"/>
<rect x="556.55" y="162.45" width="1.5" height="1.5" fill="#7a7462"/>
<rect x="556.55" y="221.85" width="1.5" height="1.5" fill="#7a7462"/>
<rect x="556.55" y="281.25" width="1.5" height="1.5" fill="#7a7462"/>
<rect x="556.55" y="400.05" width="1.5" height="1.5" fill="#7a7462"/>
<rect x="556.55" y="459.45" width="1.5" height="1.5" fill="#7a7462"/>
<rect x="556.55" y="518.85" width="1.5" height="1.5" fill="#7a7462"/>
<rect x="556.55" y="578.25" width="1.5" height="1.5" fill="#7a7462"/>
<line x1="577.79" y1="44.40" x2="577.79" y2="50.40" stroke="#8a846c" stroke-width="1.3"/>
<line x1="577.79" y1="638.40" x2="577.79" y2="632.40" stroke="#8a846c" stroke-width="1.3"/>
<line x1="577.79" y1="337.90" x2="577.79" y2="344.90" stroke="#8a846c" stroke-width="1.3"/>
<rect x="577.04" y="103.05" width="1.5" height="1.5" fill="#7a7462"/>
<rect x="577.04" y="162.45" width="1.5" height="1.5" fill="#7a7462"/>
<rect x="577.04" y="221.85" width="1.5" height="1.5" fill="#7a7462"/>
<rect x="577.04" y="281.25" width="1.5" height="1.5" fill="#7a7462"/>
<rect x="577.04" y="400.05" width="1.5" height="1.5" fill="#7a7462"/>
<rect x="577.04" y="459.45" width="1.5" height="1.5" fill="#7a7462"/>
<rect x="577.04" y="518.85" width="1.5" height="1.5" fill="#7a7462"/>
<rect x="577.04" y="578.25" width="1.5" height="1.5" fill="#7a7462"/>
<line x1="598.29" y1="44.40" x2="598.29" y2="50.40" stroke="#8a846c" stroke-width="1.3"/>
<line x1="598.29" y1="638.40" x2="598.29" y2="632.40" stroke="#8a846c" stroke-width="1.3"/>
<line x1="598.29" y1="337.90" x2="598.29" y2="344.90" stroke="#8a846c" stroke-width="1.3"/>
<rect x="597.54" y="103.05" width="1.5" height="1.5" fill="#7a7462"/>
<rect x="597.54" y="162.45" width="1.5" height="1.5" fill="#7a7462"/>
<rect x="597.54" y="221.85" width="1.5" height="1.5" fill="#7a7462"/>
<rect x="597.54" y="281.25" width="1.5" height="1.5" fill="#7a7462"/>
<rect x="597.54" y="400.05" width="1.5" height="1.5" fill="#7a7462"/>
<rect x="597.54" y="459.45" width="1.5" height="1.5" fill="#7a7462"/>
<rect x="597.54" y="518.85" width="1.5" height="1.5" fill="#7a7462"/>
<rect x="597.54" y="578.25" width="1.5" height="1.5" fill="#7a7462"/>
<line x1="618.78" y1="44.40" x2="618.78" y2="50.40" stroke="#8a846c" stroke-width="1.3"/>
<line x1="618.78" y1="638.40" x2="618.78" y2="632.40" stroke="#8a846c" stroke-width="1.3"/>
<line x1="618.78" y1="337.90" x2="618.78" y2="344.90" stroke="#8a846c" stroke-width="1.3"/>
<rect x="618.03" y="103.05" width="1.5" height="1.5" fill="#7a7462"/>
<rect x="618.03" y="162.45" width="1.5" height="1.5" fill="#7a7462"/>
<rect x="618.03" y="221.85" width="1.5" height="1.5" fill="#7a7462"/>
<rect x="618.03" y="281.25" width="1.5" height="1.5" fill="#7a7462"/>
<rect x="618.03" y="400.05" width="1.5" height="1.5" fill="#7a7462"/>
<rect x="618.03" y="459.45" width="1.5" height="1.5" fill="#7a7462"/>
<rect x="618.03" y="518.85" width="1.5" height="1.5" fill="#7a7462"/>
<rect x="618.03" y="578.25" width="1.5" height="1.5" fill="#7a7462"/>
<line x1="639.28" y1="44.40" x2="639.28" y2="54.40" stroke="#8a846c" stroke-width="1.3"/>
<line x1="639.28" y1="638.40" x2="639.28" y2="628.40" stroke="#8a846c" stroke-width="1.3"/>
<line x1="639.28" y1="336.40" x2="639.28" y2="346.40" stroke="#8a846c" stroke-width="1.3"/>
<line x1="659.78" y1="44.40" x2="659.78" y2="50.40" stroke="#8a846c" stroke-width="1.3"/>
<line x1="659.78" y1="638.40" x2="659.78" y2="632.40" stroke="#8a846c" stroke-width="1.3"/>
<line x1="659.78" y1="337.90" x2="659.78" y2="344.90" stroke="#8a846c" stroke-width="1.3"/>
<rect x="659.03" y="103.05" width="1.5" height="1.5" fill="#7a7462"/>
<rect x="659.03" y="162.45" width="1.5" height="1.5" fill="#7a7462"/>
<rect x="659.03" y="221.85" width="1.5" height="1.5" fill="#7a7462"/>
<rect x="659.03" y="281.25" width="1.5" height="1.5" fill="#7a7462"/>
<rect x="659.03" y="400.05" width="1.5" height="1.5" fill="#7a7462"/>
<rect x="659.03" y="459.45" width="1.5" height="1.5" fill="#7a7462"/>
<rect x="659.03" y="518.85" width="1.5" height="1.5" fill="#7a7462"/>
<rect x="659.03" y="578.25" width="1.5" height="1.5" fill="#7a7462"/>
<line x1="680.27" y1="44.40" x2="680.27" y2="50.40" stroke="#8a846c" stroke-width="1.3"/>
<line x1="680.27" y1="638.40" x2="680.27" y2="632.40" stroke="#8a846c" stroke-width="1.3"/>
<line x1="680.27" y1="337.90" x2="680.27" y2="344.90" stroke="#8a846c" stroke-width="1.3"/>
<rect x="679.52" y="103.05" width="1.5" height="1.5" fill="#7a7462"/>
<rect x="679.52" y="162.45" width="1.5" height="1.5" fill="#7a7462"/>
<rect x="679.52" y="221.85" width="1.5" height="1.5" fill="#7a7462"/>
<rect x="679.52" y="281.25" width="1.5" height="1.5" fill="#7a7462"/>
<rect x="679.52" y="400.05" width="1.5" height="1.5" fill="#7a7462"/>
<rect x="679.52" y="459.45" width="1.5" height="1.5" fill="#7a7462"/>
<rect x="679.52" y="518.85" width="1.5" height="1.5" fill="#7a7462"/>
<rect x="679.52" y="578.25" width="1.5" height="1.5" fill="#7a7462"/>
<line x1="700.77" y1="44.40" x2="700.77" y2="50.40" stroke="#8a846c" stroke-width="1.3"/>
<line x1="700.77" y1="638.40" x2="700.77" y2="632.40" stroke="#8a846c" stroke-width="1.3"/>
<line x1="700.77" y1="337.90" x2="700.77" y2="344.90" stroke="#8a846c" stroke-width="1.3"/>
<rect x="700.02" y="103.05" width="1.5" height="1.5" fill="#7a7462"/>
<rect x="700.02" y="162.45" width="1.5" height="1.5" fill="#7a7462"/>
<rect x="700.02" y="221.85" width="1.5" height="1.5" fill="#7a7462"/>
<rect x="700.02" y="281.25" width="1.5" height="1.5" fill="#7a7462"/>
<rect x="700.02" y="400.05" width="1.5" height="1.5" fill="#7a7462"/>
<rect x="700.02" y="459.45" width="1.5" height="1.5" fill="#7a7462"/>
<rect x="700.02" y="518.85" width="1.5" height="1.5" fill="#7a7462"/>
<rect x="700.02" y="578.25" width="1.5" height="1.5" fill="#7a7462"/>
<line x1="721.26" y1="44.40" x2="721.26" y2="50.40" stroke="#8a846c" stroke-width="1.3"/>
<line x1="721.26" y1="638.40" x2="721.26" y2="632.40" stroke="#8a846c" stroke-width="1.3"/>
<line x1="721.26" y1="337.90" x2="721.26" y2="344.90" stroke="#8a846c" stroke-width="1.3"/>
<rect x="720.51" y="103.05" width="1.5" height="1.5" fill="#7a7462"/>
<rect x="720.51" y="162.45" width="1.5" height="1.5" fill="#7a7462"/>
<rect x="720.51" y="221.85" width="1.5" height="1.5" fill="#7a7462"/>
<rect x="720.51" y="281.25" width="1.5" height="1.5" fill="#7a7462"/>
<rect x="720.51" y="400.05" width="1.5" height="1.5" fill="#7a7462"/>
<rect x="720.51" y="459.45" width="1.5" height="1.5" fill="#7a7462"/>
<rect x="720.51" y="518.85" width="1.5" height="1.5" fill="#7a7462"/>
<rect x="720.51" y="578.25" width="1.5" height="1.5" fill="#7a7462"/>
<line x1="741.76" y1="44.40" x2="741.76" y2="54.40" stroke="#8a846c" stroke-width="1.3"/>
<line x1="741.76" y1="638.40" x2="741.76" y2="628.40" stroke="#8a846c" stroke-width="1.3"/>
<line x1="741.76" y1="336.40" x2="741.76" y2="346.40" stroke="#8a846c" stroke-width="1.3"/>
<line x1="762.26" y1="44.40" x2="762.26" y2="50.40" stroke="#8a846c" stroke-width="1.3"/>
<line x1="762.26" y1="638.40" x2="762.26" y2="632.40" stroke="#8a846c" stroke-width="1.3"/>
<line x1="762.26" y1="337.90" x2="762.26" y2="344.90" stroke="#8a846c" stroke-width="1.3"/>
<rect x="761.51" y="103.05" width="1.5" height="1.5" fill="#7a7462"/>
<rect x="761.51" y="162.45" width="1.5" height="1.5" fill="#7a7462"/>
<rect x="761.51" y="221.85" width="1.5" height="1.5" fill="#7a7462"/>
<rect x="761.51" y="281.25" width="1.5" height="1.5" fill="#7a7462"/>
<rect x="761.51" y="400.05" width="1.5" height="1.5" fill="#7a7462"/>
<rect x="761.51" y="459.45" width="1.5" height="1.5" fill="#7a7462"/>
<rect x="761.51" y="518.85" width="1.5" height="1.5" fill="#7a7462"/>
<rect x="761.51" y="578.25" width="1.5" height="1.5" fill="#7a7462"/>
<line x1="782.75" y1="44.40" x2="782.75" y2="50.40" stroke="#8a846c" stroke-width="1.3"/>
<line x1="782.75" y1="638.40" x2="782.75" y2="632.40" stroke="#8a846c" stroke-width="1.3"/>
<line x1="782.75" y1="337.90" x2="782.75" y2="344.90" stroke="#8a846c" stroke-width="1.3"/>
<rect x="782.00" y="103.05" width="1.5" height="1.5" fill="#7a7462"/>
<rect x="782.00" y="162.45" width="1.5" height="1.5" fill="#7a7462"/>
<rect x="782.00" y="221.85" width="1.5" height="1.5" fill="#7a7462"/>
<rect x="782.00" y="281.25" width="1.5" height="1.5" fill="#7a7462"/>
<rect x="782.00" y="400.05" width="1.5" height="1.5" fill="#7a7462"/>
<rect x="782.00" y="459.45" width="1.5" height="1.5" fill="#7a7462"/>
<rect x="782.00" y="518.85" width="1.5" height="1.5" fill="#7a7462"/>
<rect x="782.00" y="578.25" width="1.5" height="1.5" fill="#7a7462"/>
<line x1="803.25" y1="44.40" x2="803.25" y2="50.40" stroke="#8a846c" stroke-width="1.3"/>
<line x1="803.25" y1="638.40" x2="803.25" y2="632.40" stroke="#8a846c" stroke-width="1.3"/>
<line x1="803.25" y1="337.90" x2="803.25" y2="344.90" stroke="#8a846c" stroke-width="1.3"/>
<rect x="802.50" y="103.05" width="1.5" height="1.5" fill="#7a7462"/>
<rect x="802.50" y="162.45" width="1.5" height="1.5" fill="#7a7462"/>
<rect x="802.50" y="221.85" width="1.5" height="1.5" fill="#7a7462"/>
<rect x="802.50" y="281.25" width="1.5" height="1.5" fill="#7a7462"/>
<rect x="802.50" y="400.05" width="1.5" height="1.5" fill="#7a7462"/>
<rect x="802.50" y="459.45" width="1.5" height="1.5" fill="#7a7462"/>
<rect x="802.50" y="518.85" width="1.5" height="1.5" fill="#7a7462"/>
<rect x="802.50" y="578.25" width="1.5" height="1.5" fill="#7a7462"/>
<line x1="823.74" y1="44.40" x2="823.74" y2="50.40" stroke="#8a846c" stroke-width="1.3"/>
<line x1="823.74" y1="638.40" x2="823.74" y2="632.40" stroke="#8a846c" stroke-width="1.3"/>
<line x1="823.74" y1="337.90" x2="823.74" y2="344.90" stroke="#8a846c" stroke-width="1.3"/>
<rect x="822.99" y="103.05" width="1.5" height="1.5" fill="#7a7462"/>
<rect x="822.99" y="162.45" width="1.5" height="1.5" fill="#7a7462"/>
<rect x="822.99" y="221.85" width="1.5" height="1.5" fill="#7a7462"/>
<rect x="822.99" y="281.25" width="1.5" height="1.5" fill="#7a7462"/>
<rect x="822.99" y="400.05" width="1.5" height="1.5" fill="#7a7462"/>
<rect x="822.99" y="459.45" width="1.5" height="1.5" fill="#7a7462"/>
<rect x="822.99" y="518.85" width="1.5" height="1.5" fill="#7a7462"/>
<rect x="822.99" y="578.25" width="1.5" height="1.5" fill="#7a7462"/>
<line x1="844.24" y1="44.40" x2="844.24" y2="54.40" stroke="#8a846c" stroke-width="1.3"/>
<line x1="844.24" y1="638.40" x2="844.24" y2="628.40" stroke="#8a846c" stroke-width="1.3"/>
<line x1="844.24" y1="336.40" x2="844.24" y2="346.40" stroke="#8a846c" stroke-width="1.3"/>
<line x1="864.74" y1="44.40" x2="864.74" y2="50.40" stroke="#8a846c" stroke-width="1.3"/>
<line x1="864.74" y1="638.40" x2="864.74" y2="632.40" stroke="#8a846c" stroke-width="1.3"/>
<line x1="864.74" y1="337.90" x2="864.74" y2="344.90" stroke="#8a846c" stroke-width="1.3"/>
<rect x="863.99" y="103.05" width="1.5" height="1.5" fill="#7a7462"/>
<rect x="863.99" y="162.45" width="1.5" height="1.5" fill="#7a7462"/>
<rect x="863.99" y="221.85" width="1.5" height="1.5" fill="#7a7462"/>
<rect x="863.99" y="281.25" width="1.5" height="1.5" fill="#7a7462"/>
<rect x="863.99" y="400.05" width="1.5" height="1.5" fill="#7a7462"/>
<rect x="863.99" y="459.45" width="1.5" height="1.5" fill="#7a7462"/>
<rect x="863.99" y="518.85" width="1.5" height="1.5" fill="#7a7462"/>
<rect x="863.99" y="578.25" width="1.5" height="1.5" fill="#7a7462"/>
<line x1="885.23" y1="44.40" x2="885.23" y2="50.40" stroke="#8a846c" stroke-width="1.3"/>
<line x1="885.23" y1="638.40" x2="885.23" y2="632.40" stroke="#8a846c" stroke-width="1.3"/>
<line x1="885.23" y1="337.90" x2="885.23" y2="344.90" stroke="#8a846c" stroke-width="1.3"/>
<rect x="884.48" y="103.05" width="1.5" height="1.5" fill="#7a7462"/>
<rect x="884.48" y="162.45" width="1.5" height="1.5" fill="#7a7462"/>
<rect x="884.48" y="221.85" width="1.5" height="1.5" fill="#7a7462"/>
<rect x="884.48" y="281.25" width="1.5" height="1.5" fill="#7a7462"/>
<rect x="884.48" y="400.05" width="1.5" height="1.5" fill="#7a7462"/>
<rect x="884.48" y="459.45" width="1.5" height="1.5" fill="#7a7462"/>
<rect x="884.48" y="518.85" width="1.5" height="1.5" fill="#7a7462"/>
<rect x="884.48" y="578.25" width="1.5" height="1.5" fill="#7a7462"/>
<line x1="905.73" y1="44.40" x2="905.73" y2="50.40" stroke="#8a846c" stroke-width="1.3"/>
<line x1="905.73" y1="638.40" x2="905.73" y2="632.40" stroke="#8a846c" stroke-width="1.3"/>
<line x1="905.73" y1="337.90" x2="905.73" y2="344.90" stroke="#8a846c" stroke-width="1.3"/>
<rect x="904.98" y="103.05" width="1.5" height="1.5" fill="#7a7462"/>
<rect x="904.98" y="162.45" width="1.5" height="1.5" fill="#7a7462"/>
<rect x="904.98" y="221.85" width="1.5" height="1.5" fill="#7a7462"/>
<rect x="904.98" y="281.25" width="1.5" height="1.5" fill="#7a7462"/>
<rect x="904.98" y="400.05" width="1.5" height="1.5" fill="#7a7462"/>
<rect x="904.98" y="459.45" width="1.5" height="1.5" fill="#7a7462"/>
<rect x="904.98" y="518.85" width="1.5" height="1.5" fill="#7a7462"/>
<rect x="904.98" y="578.25" width="1.5" height="1.5" fill="#7a7462"/>
<line x1="926.22" y1="44.40" x2="926.22" y2="50.40" stroke="#8a846c" stroke-width="1.3"/>
<line x1="926.22" y1="638.40" x2="926.22" y2="632.40" stroke="#8a846c" stroke-width="1.3"/>
<line x1="926.22" y1="337.90" x2="926.22" y2="344.90" stroke="#8a846c" stroke-width="1.3"/>
<rect x="925.47" y="103.05" width="1.5" height="1.5" fill="#7a7462"/>
<rect x="925.47" y="162.45" width="1.5" height="1.5" fill="#7a7462"/>
<rect x="925.47" y="221.85" width="1.5" height="1.5" fill="#7a7462"/>
<rect x="925.47" y="281.25" width="1.5" height="1.5" fill="#7a7462"/>
<rect x="925.47" y="400.05" width="1.5" height="1.5" fill="#7a7462"/>
<rect x="925.47" y="459.45" width="1.5" height="1.5" fill="#7a7462"/>
<rect x="925.47" y="518.85" width="1.5" height="1.5" fill="#7a7462"/>
<rect x="925.47" y="578.25" width="1.5" height="1.5" fill="#7a7462"/>
<line x1="946.72" y1="44.40" x2="946.72" y2="54.40" stroke="#8a846c" stroke-width="1.3"/>
<line x1="946.72" y1="638.40" x2="946.72" y2="628.40" stroke="#8a846c" stroke-width="1.3"/>
<line x1="946.72" y1="336.40" x2="946.72" y2="346.40" stroke="#8a846c" stroke-width="1.3"/>
<line x1="967.22" y1="44.40" x2="967.22" y2="50.40" stroke="#8a846c" stroke-width="1.3"/>
<line x1="967.22" y1="638.40" x2="967.22" y2="632.40" stroke="#8a846c" stroke-width="1.3"/>
<line x1="967.22" y1="337.90" x2="967.22" y2="344.90" stroke="#8a846c" stroke-width="1.3"/>
<rect x="966.47" y="103.05" width="1.5" height="1.5" fill="#7a7462"/>
<rect x="966.47" y="162.45" width="1.5" height="1.5" fill="#7a7462"/>
<rect x="966.47" y="221.85" width="1.5" height="1.5" fill="#7a7462"/>
<rect x="966.47" y="281.25" width="1.5" height="1.5" fill="#7a7462"/>
<rect x="966.47" y="400.05" width="1.5" height="1.5" fill="#7a7462"/>
<rect x="966.47" y="459.45" width="1.5" height="1.5" fill="#7a7462"/>
<rect x="966.47" y="518.85" width="1.5" height="1.5" fill="#7a7462"/>
<rect x="966.47" y="578.25" width="1.5" height="1.5" fill="#7a7462"/>
<line x1="987.71" y1="44.40" x2="987.71" y2="50.40" stroke="#8a846c" stroke-width="1.3"/>
<line x1="987.71" y1="638.40" x2="987.71" y2="632.40" stroke="#8a846c" stroke-width="1.3"/>
<line x1="987.71" y1="337.90" x2="987.71" y2="344.90" stroke="#8a846c" stroke-width="1.3"/>
<rect x="986.96" y="103.05" width="1.5" height="1.5" fill="#7a7462"/>
<rect x="986.96" y="162.45" width="1.5" height="1.5" fill="#7a7462"/>
<rect x="986.96" y="221.85" width="1.5" height="1.5" fill="#7a7462"/>
<rect x="986.96" y="281.25" width="1.5" height="1.5" fill="#7a7462"/>
<rect x="986.96" y="400.05" width="1.5" height="1.5" fill="#7a7462"/>
<rect x="986.96" y="459.45" width="1.5" height="1.5" fill="#7a7462"/>
<rect x="986.96" y="518.85" width="1.5" height="1.5" fill="#7a7462"/>
<rect x="986.96" y="578.25" width="1.5" height="1.5" fill="#7a7462"/>
<line x1="1008.21" y1="44.40" x2="1008.21" y2="50.40" stroke="#8a846c" stroke-width="1.3"/>
<line x1="1008.21" y1="638.40" x2="1008.21" y2="632.40" stroke="#8a846c" stroke-width="1.3"/>
<line x1="1008.21" y1="337.90" x2="1008.21" y2="344.90" stroke="#8a846c" stroke-width="1.3"/>
<rect x="1007.46" y="103.05" width="1.5" height="1.5" fill="#7a7462"/>
<rect x="1007.46" y="162.45" width="1.5" height="1.5" fill="#7a7462"/>
<rect x="1007.46" y="221.85" width="1.5" height="1.5" fill="#7a7462"/>
<rect x="1007.46" y="281.25" width="1.5" height="1.5" fill="#7a7462"/>
<rect x="1007.46" y="400.05" width="1.5" height="1.5" fill="#7a7462"/>
<rect x="1007.46" y="459.45" width="1.5" height="1.5" fill="#7a7462"/>
<rect x="1007.46" y="518.85" width="1.5" height="1.5" fill="#7a7462"/>
<rect x="1007.46" y="578.25" width="1.5" height="1.5" fill="#7a7462"/>
<line x1="1028.70" y1="44.40" x2="1028.70" y2="50.40" stroke="#8a846c" stroke-width="1.3"/>
<line x1="1028.70" y1="638.40" x2="1028.70" y2="632.40" stroke="#8a846c" stroke-width="1.3"/>
<line x1="1028.70" y1="337.90" x2="1028.70" y2="344.90" stroke="#8a846c" stroke-width="1.3"/>
<rect x="1027.95" y="103.05" width="1.5" height="1.5" fill="#7a7462"/>
<rect x="1027.95" y="162.45" width="1.5" height="1.5" fill="#7a7462"/>
<rect x="1027.95" y="221.85" width="1.5" height="1.5" fill="#7a7462"/>
<rect x="1027.95" y="281.25" width="1.5" height="1.5" fill="#7a7462"/>
<rect x="1027.95" y="400.05" width="1.5" height="1.5" fill="#7a7462"/>
<rect x="1027.95" y="459.45" width="1.5" height="1.5" fill="#7a7462"/>
<rect x="1027.95" y="518.85" width="1.5" height="1.5" fill="#7a7462"/>
<rect x="1027.95" y="578.25" width="1.5" height="1.5" fill="#7a7462"/>
<line x1="24.40" y1="56.28" x2="30.40" y2="56.28" stroke="#8a846c" stroke-width="1.3"/>
<line x1="1049.20" y1="56.28" x2="1043.20" y2="56.28" stroke="#8a846c" stroke-width="1.3"/>
<line x1="533.30" y1="56.28" x2="540.30" y2="56.28" stroke="#8a846c" stroke-width="1.3"/>
<rect x="126.28" y="55.28" width="1.2" height="2" fill="#a29c84"/>
<rect x="228.76" y="55.28" width="1.2" height="2" fill="#a29c84"/>
<rect x="331.24" y="55.28" width="1.2" height="2" fill="#a29c84"/>
<rect x="433.72" y="55.28" width="1.2" height="2" fill="#a29c84"/>
<rect x="638.68" y="55.28" width="1.2" height="2" fill="#a29c84"/>
<rect x="741.16" y="55.28" width="1.2" height="2" fill="#a29c84"/>
<rect x="843.64" y="55.28" width="1.2" height="2" fill="#a29c84"/>
<rect x="946.12" y="55.28" width="1.2" height="2" fill="#a29c84"/>
<line x1="24.40" y1="68.16" x2="30.40" y2="68.16" stroke="#8a846c" stroke-width="1.3"/>
<line x1="1049.20" y1="68.16" x2="1043.20" y2="68.16" stroke="#8a846c" stroke-width="1.3"/>
<line x1="533.30" y1="68.16" x2="540.30" y2="68.16" stroke="#8a846c" stroke-width="1.3"/>
<rect x="126.28" y="67.16" width="1.2" height="2" fill="#a29c84"/>
<rect x="228.76" y="67.16" width="1.2" height="2" fill="#a29c84"/>
<rect x="331.24" y="67.16" width="1.2" height="2" fill="#a29c84"/>
<rect x="433.72" y="67.16" width="1.2" height="2" fill="#a29c84"/>
<rect x="638.68" y="67.16" width="1.2" height="2" fill="#a29c84"/>
<rect x="741.16" y="67.16" width="1.2" height="2" fill="#a29c84"/>
<rect x="843.64" y="67.16" width="1.2" height="2" fill="#a29c84"/>
<rect x="946.12" y="67.16" width="1.2" height="2" fill="#a29c84"/>
<line x1="24.40" y1="80.04" x2="30.40" y2="80.04" stroke="#8a846c" stroke-width="1.3"/>
<line x1="1049.20" y1="80.04" x2="1043.20" y2="80.04" stroke="#8a846c" stroke-width="1.3"/>
<line x1="533.30" y1="80.04" x2="540.30" y2="80.04" stroke="#8a846c" stroke-width="1.3"/>
<rect x="126.28" y="79.04" width="1.2" height="2" fill="#a29c84"/>
<rect x="228.76" y="79.04" width="1.2" height="2" fill="#a29c84"/>
<rect x="331.24" y="79.04" width="1.2" height="2" fill="#a29c84"/>
<rect x="433.72" y="79.04" width="1.2" height="2" fill="#a29c84"/>
<rect x="638.68" y="79.04" width="1.2" height="2" fill="#a29c84"/>
<rect x="741.16" y="79.04" width="1.2" height="2" fill="#a29c84"/>
<rect x="843.64" y="79.04" width="1.2" height="2" fill="#a29c84"/>
<rect x="946.12" y="79.04" width="1.2" height="2" fill="#a29c84"/>
<line x1="24.40" y1="91.92" x2="30.40" y2="91.92" stroke="#8a846c" stroke-width="1.3"/>
<line x1="1049.20" y1="91.92" x2="1043.20" y2="91.92" stroke="#8a846c" stroke-width="1.3"/>
<line x1="533.30" y1="91.92" x2="540.30" y2="91.92" stroke="#8a846c" stroke-width="1.3"/>
<rect x="126.28" y="90.92" width="1.2" height="2" fill="#a29c84"/>
<rect x="228.76" y="90.92" width="1.2" height="2" fill="#a29c84"/>
<rect x="331.24" y="90.92" width="1.2" height="2" fill="#a29c84"/>
<rect x="433.72" y="90.92" width="1.2" height="2" fill="#a29c84"/>
<rect x="638.68" y="90.92" width="1.2" height="2" fill="#a29c84"/>
<rect x="741.16" y="90.92" width="1.2" height="2" fill="#a29c84"/>
<rect x="843.64" y="90.92" width="1.2" height="2" fill="#a29c84"/>
<rect x="946.12" y="90.92" width="1.2" height="2" fill="#a29c84"/>
<line x1="24.40" y1="103.80" x2="34.40" y2="103.80" stroke="#8a846c" stroke-width="1.3"/>
<line x1="1049.20" y1="103.80" x2="1039.20" y2="103.80" stroke="#8a846c" stroke-width="1.3"/>
<line x1="531.80" y1="103.80" x2="541.80" y2="103.80" stroke="#8a846c" stroke-width="1.3"/>
<line x1="24.40" y1="115.68" x2="30.40" y2="115.68" stroke="#8a846c" stroke-width="1.3"/>
<line x1="1049.20" y1="115.68" x2="1043.20" y2="115.68" stroke="#8a846c" stroke-width="1.3"/>
<line x1="533.30" y1="115.68" x2="540.30" y2="115.68" stroke="#8a846c" stroke-width="1.3"/>
<rect x="126.28" y="114.68" width="1.2" height="2" fill="#a29c84"/>
<rect x="228.76" y="114.68" width="1.2" height="2" fill="#a29c84"/>
<rect x="331.24" y="114.68" width="1.2" height="2" fill="#a29c84"/>
<rect x="433.72" y="114.68" width="1.2" height="2" fill="#a29c84"/>
<rect x="638.68" y="114.68" width="1.2" height="2" fill="#a29c84"/>
<rect x="741.16" y="114.68" width="1.2" height="2" fill="#a29c84"/>
<rect x="843.64" y="114.68" width="1.2" height="2" fill="#a29c84"/>
<rect x="946.12" y="114.68" width="1.2" height="2" fill="#a29c84"/>
<line x1="24.40" y1="127.56" x2="30.40" y2="127.56" stroke="#8a846c" stroke-width="1.3"/>
<line x1="1049.20" y1="127.56" x2="1043.20" y2="127.56" stroke="#8a846c" stroke-width="1.3"/>
<line x1="533.30" y1="127.56" x2="540.30" y2="127.56" stroke="#8a846c" stroke-width="1.3"/>
<rect x="126.28" y="126.56" width="1.2" height="2" fill="#a29c84"/>
<rect x="228.76" y="126.56" width="1.2" height="2" fill="#a29c84"/>
<rect x="331.24" y="126.56" width="1.2" height="2" fill="#a29c84"/>
<rect x="433.72" y="126.56" width="1.2" height="2" fill="#a29c84"/>
<rect x="638.68" y="126.56" width="1.2" height="2" fill="#a29c84"/>
<rect x="741.16" y="126.56" width="1.2" height="2" fill="#a29c84"/>
<rect x="843.64" y="126.56" width="1.2" height="2" fill="#a29c84"/>
<rect x="946.12" y="126.56" width="1.2" height="2" fill="#a29c84"/>
<line x1="24.40" y1="139.44" x2="30.40" y2="139.44" stroke="#8a846c" stroke-width="1.3"/>
<line x1="1049.20" y1="139.44" x2="1043.20" y2="139.44" stroke="#8a846c" stroke-width="1.3"/>
<line x1="533.30" y1="139.44" x2="540.30" y2="139.44" stroke="#8a846c" stroke-width="1.3"/>
<rect x="126.28" y="138.44" width="1.2" height="2" fill="#a29c84"/>
<rect x="228.76" y="138.44" width="1.2" height="2" fill="#a29c84"/>
<rect x="331.24" y="138.44" width="1.2" height="2" fill="#a29c84"/>
<rect x="433.72" y="138.44" width="1.2" height="2" fill="#a29c84"/>
<rect x="638.68" y="138.44" width="1.2" height="2" fill="#a29c84"/>
<rect x="741.16" y="138.44" width="1.2" height="2" fill="#a29c84"/>
<rect x="843.64" y="138.44" width="1.2" height="2" fill="#a29c84"/>
<rect x="946.12" y="138.44" width="1.2" height="2" fill="#a29c84"/>
<line x1="24.40" y1="151.32" x2="30.40" y2="151.32" stroke="#8a846c" stroke-width="1.3"/>
<line x1="1049.20" y1="151.32" x2="1043.20" y2="151.32" stroke="#8a846c" stroke-width="1.3"/>
<line x1="533.30" y1="151.32" x2="540.30" y2="151.32" stroke="#8a846c" stroke-width="1.3"/>
<rect x="126.28" y="150.32" width="1.2" height="2" fill="#a29c84"/>
<rect x="228.76" y="150.32" width="1.2" height="2" fill="#a29c84"/>
<rect x="331.24" y="150.32" width="1.2" height="2" fill="#a29c84"/>
<rect x="433.72" y="150.32" width="1.2" height="2" fill="#a29c84"/>
<rect x="638.68" y="150.32" width="1.2" height="2" fill="#a29c84"/>
<rect x="741.16" y="150.32" width="1.2" height="2" fill="#a29c84"/>
<rect x="843.64" y="150.32" width="1.2" height="2" fill="#a29c84"/>
<rect x="946.12" y="150.32" width="1.2" height="2" fill="#a29c84"/>
<line x1="24.40" y1="163.20" x2="34.40" y2="163.20" stroke="#8a846c" stroke-width="1.3"/>
<line x1="1049.20" y1="163.20" x2="1039.20" y2="163.20" stroke="#8a846c" stroke-width="1.3"/>
<line x1="531.80" y1="163.20" x2="541.80" y2="163.20" stroke="#8a846c" stroke-width="1.3"/>
<line x1="24.40" y1="175.08" x2="30.40" y2="175.08" stroke="#8a846c" stroke-width="1.3"/>
<line x1="1049.20" y1="175.08" x2="1043.20" y2="175.08" stroke="#8a846c" stroke-width="1.3"/>
<line x1="533.30" y1="175.08" x2="540.30" y2="175.08" stroke="#8a846c" stroke-width="1.3"/>
<rect x="126.28" y="174.08" width="1.2" height="2" fill="#a29c84"/>
<rect x="228.76" y="174.08" width="1.2" height="2" fill="#a29c84"/>
<rect x="331.24" y="174.08" width="1.2" height="2" fill="#a29c84"/>
<rect x="433.72" y="174.08" width="1.2" height="2" fill="#a29c84"/>
<rect x="638.68" y="174.08" width="1.2" height="2" fill="#a29c84"/>
<rect x="741.16" y="174.08" width="1.2" height="2" fill="#a29c84"/>
<rect x="843.64" y="174.08" width="1.2" height="2" fill="#a29c84"/>
<rect x="946.12" y="174.08" width="1.2" height="2" fill="#a29c84"/>
<line x1="24.40" y1="186.96" x2="30.40" y2="186.96" stroke="#8a846c" stroke-width="1.3"/>
<line x1="1049.20" y1="186.96" x2="1043.20" y2="186.96" stroke="#8a846c" stroke-width="1.3"/>
<line x1="533.30" y1="186.96" x2="540.30" y2="186.96" stroke="#8a846c" stroke-width="1.3"/>
<rect x="126.28" y="185.96" width="1.2" height="2" fill="#a29c84"/>
<rect x="228.76" y="185.96" width="1.2" height="2" fill="#a29c84"/>
<rect x="331.24" y="185.96" width="1.2" height="2" fill="#a29c84"/>
<rect x="433.72" y="185.96" width="1.2" height="2" fill="#a29c84"/>
<rect x="638.68" y="185.96" width="1.2" height="2" fill="#a29c84"/>
<rect x="741.16" y="185.96" width="1.2" height="2" fill="#a29c84"/>
<rect x="843.64" y="185.96" width="1.2" height="2" fill="#a29c84"/>
<rect x="946.12" y="185.96" width="1.2" height="2" fill="#a29c84"/>
<line x1="24.40" y1="198.84" x2="30.40" y2="198.84" stroke="#8a846c" stroke-width="1.3"/>
<line x1="1049.20" y1="198.84" x2="1043.20" y2="198.84" stroke="#8a846c" stroke-width="1.3"/>
<line x1="533.30" y1="198.84" x2="540.30" y2="198.84" stroke="#8a846c" stroke-width="1.3"/>
<rect x="126.28" y="197.84" width="1.2" height="2" fill="#a29c84"/>
<rect x="228.76" y="197.84" width="1.2" height="2" fill="#a29c84"/>
<rect x="331.24" y="197.84" width="1.2" height="2" fill="#a29c84"/>
<rect x="433.72" y="197.84" width="1.2" height="2" fill="#a29c84"/>
<rect x="638.68" y="197.84" width="1.2" height="2" fill="#a29c84"/>
<rect x="741.16" y="197.84" width="1.2" height="2" fill="#a29c84"/>
<rect x="843.64" y="197.84" width="1.2" height="2" fill="#a29c84"/>
<rect x="946.12" y="197.84" width="1.2" height="2" fill="#a29c84"/>
<line x1="24.40" y1="210.72" x2="30.40" y2="210.72" stroke="#8a846c" stroke-width="1.3"/>
<line x1="1049.20" y1="210.72" x2="1043.20" y2="210.72" stroke="#8a846c" stroke-width="1.3"/>
<line x1="533.30" y1="210.72" x2="540.30" y2="210.72" stroke="#8a846c" stroke-width="1.3"/>
<rect x="126.28" y="209.72" width="1.2" height="2" fill="#a29c84"/>
<rect x="228.76" y="209.72" width="1.2" height="2" fill="#a29c84"/>
<rect x="331.24" y="209.72" width="1.2" height="2" fill="#a29c84"/>
<rect x="433.72" y="209.72" width="1.2" height="2" fill="#a29c84"/>
<rect x="638.68" y="209.72" width="1.2" height="2" fill="#a29c84"/>
<rect x="741.16" y="209.72" width="1.2" height="2" fill="#a29c84"/>
<rect x="843.64" y="209.72" width="1.2" height="2" fill="#a29c84"/>
<rect x="946.12" y="209.72" width="1.2" height="2" fill="#a29c84"/>
<line x1="24.40" y1="222.60" x2="34.40" y2="222.60" stroke="#8a846c" stroke-width="1.3"/>
<line x1="1049.20" y1="222.60" x2="1039.20" y2="222.60" stroke="#8a846c" stroke-width="1.3"/>
<line x1="531.80" y1="222.60" x2="541.80" y2="222.60" stroke="#8a846c" stroke-width="1.3"/>
<line x1="24.40" y1="234.48" x2="30.40" y2="234.48" stroke="#8a846c" stroke-width="1.3"/>
<line x1="1049.20" y1="234.48" x2="1043.20" y2="234.48" stroke="#8a846c" stroke-width="1.3"/>
<line x1="533.30" y1="234.48" x2="540.30" y2="234.48" stroke="#8a846c" stroke-width="1.3"/>
<rect x="126.28" y="233.48" width="1.2" height="2" fill="#a29c84"/>
<rect x="228.76" y="233.48" width="1.2" height="2" fill="#a29c84"/>
<rect x="331.24" y="233.48" width="1.2" height="2" fill="#a29c84"/>
<rect x="433.72" y="233.48" width="1.2" height="2" fill="#a29c84"/>
<rect x="638.68" y="233.48" width="1.2" height="2" fill="#a29c84"/>
<rect x="741.16" y="233.48" width="1.2" height="2" fill="#a29c84"/>
<rect x="843.64" y="233.48" width="1.2" height="2" fill="#a29c84"/>
<rect x="946.12" y="233.48" width="1.2" height="2" fill="#a29c84"/>
<line x1="24.40" y1="246.36" x2="30.40" y2="246.36" stroke="#8a846c" stroke-width="1.3"/>
<line x1="1049.20" y1="246.36" x2="1043.20" y2="246.36" stroke="#8a846c" stroke-width="1.3"/>
<line x1="533.30" y1="246.36" x2="540.30" y2="246.36" stroke="#8a846c" stroke-width="1.3"/>
<rect x="126.28" y="245.36" width="1.2" height="2" fill="#a29c84"/>
<rect x="228.76" y="245.36" width="1.2" height="2" fill="#a29c84"/>
<rect x="331.24" y="245.36" width="1.2" height="2" fill="#a29c84"/>
<rect x="433.72" y="245.36" width="1.2" height="2" fill="#a29c84"/>
<rect x="638.68" y="245.36" width="1.2" height="2" fill="#a29c84"/>
<rect x="741.16" y="245.36" width="1.2" height="2" fill="#a29c84"/>
<rect x="843.64" y="245.36" width="1.2" height="2" fill="#a29c84"/>
<rect x="946.12" y="245.36" width="1.2" height="2" fill="#a29c84"/>
<line x1="24.40" y1="258.24" x2="30.40" y2="258.24" stroke="#8a846c" stroke-width="1.3"/>
<line x1="1049.20" y1="258.24" x2="1043.20" y2="258.24" stroke="#8a846c" stroke-width="1.3"/>
<line x1="533.30" y1="258.24" x2="540.30" y2="258.24" stroke="#8a846c" stroke-width="1.3"/>
<rect x="126.28" y="257.24" width="1.2" height="2" fill="#a29c84"/>
<rect x="228.76" y="257.24" width="1.2" height="2" fill="#a29c84"/>
<rect x="331.24" y="257.24" width="1.2" height="2" fill="#a29c84"/>
<rect x="433.72" y="257.24" width="1.2" height="2" fill="#a29c84"/>
<rect x="638.68" y="257.24" width="1.2" height="2" fill="#a29c84"/>
<rect x="741.16" y="257.24" width="1.2" height="2" fill="#a29c84"/>
<rect x="843.64" y="257.24" width="1.2" height="2" fill="#a29c84"/>
<rect x="946.12" y="257.24" width="1.2" height="2" fill="#a29c84"/>
<line x1="24.40" y1="270.12" x2="30.40" y2="270.12" stroke="#8a846c" stroke-width="1.3"/>
<line x1="1049.20" y1="270.12" x2="1043.20" y2="270.12" stroke="#8a846c" stroke-width="1.3"/>
<line x1="533.30" y1="270.12" x2="540.30" y2="270.12" stroke="#8a846c" stroke-width="1.3"/>
<rect x="126.28" y="269.12" width="1.2" height="2" fill="#a29c84"/>
<rect x="228.76" y="269.12" width="1.2" height="2" fill="#a29c84"/>
<rect x="331.24" y="269.12" width="1.2" height="2" fill="#a29c84"/>
<rect x="433.72" y="269.12" width="1.2" height="2" fill="#a29c84"/>
<rect x="638.68" y="269.12" width="1.2" height="2" fill="#a29c84"/>
<rect x="741.16" y="269.12" width="1.2" height="2" fill="#a29c84"/>
<rect x="843.64" y="269.12" width="1.2" height="2" fill="#a29c84"/>
<rect x="946.12" y="269.12" width="1.2" height="2" fill="#a29c84"/>
<line x1="24.40" y1="282.00" x2="34.40" y2="282.00" stroke="#8a846c" stroke-width="1.3"/>
<line x1="1049.20" y1="282.00" x2="1039.20" y2="282.00" stroke="#8a846c" stroke-width="1.3"/>
<line x1="531.80" y1="282.00" x2="541.80" y2="282.00" stroke="#8a846c" stroke-width="1.3"/>
<line x1="24.40" y1="293.88" x2="30.40" y2="293.88" stroke="#8a846c" stroke-width="1.3"/>
<line x1="1049.20" y1="293.88" x2="1043.20" y2="293.88" stroke="#8a846c" stroke-width="1.3"/>
<line x1="533.30" y1="293.88" x2="540.30" y2="293.88" stroke="#8a846c" stroke-width="1.3"/>
<rect x="126.28" y="292.88" width="1.2" height="2" fill="#a29c84"/>
<rect x="228.76" y="292.88" width="1.2" height="2" fill="#a29c84"/>
<rect x="331.24" y="292.88" width="1.2" height="2" fill="#a29c84"/>
<rect x="433.72" y="292.88" width="1.2" height="2" fill="#a29c84"/>
<rect x="638.68" y="292.88" width="1.2" height="2" fill="#a29c84"/>
<rect x="741.16" y="292.88" width="1.2" height="2" fill="#a29c84"/>
<rect x="843.64" y="292.88" width="1.2" height="2" fill="#a29c84"/>
<rect x="946.12" y="292.88" width="1.2" height="2" fill="#a29c84"/>
<line x1="24.40" y1="305.76" x2="30.40" y2="305.76" stroke="#8a846c" stroke-width="1.3"/>
<line x1="1049.20" y1="305.76" x2="1043.20" y2="305.76" stroke="#8a846c" stroke-width="1.3"/>
<line x1="533.30" y1="305.76" x2="540.30" y2="305.76" stroke="#8a846c" stroke-width="1.3"/>
<rect x="126.28" y="304.76" width="1.2" height="2" fill="#a29c84"/>
<rect x="228.76" y="304.76" width="1.2" height="2" fill="#a29c84"/>
<rect x="331.24" y="304.76" width="1.2" height="2" fill="#a29c84"/>
<rect x="433.72" y="304.76" width="1.2" height="2" fill="#a29c84"/>
<rect x="638.68" y="304.76" width="1.2" height="2" fill="#a29c84"/>
<rect x="741.16" y="304.76" width="1.2" height="2" fill="#a29c84"/>
<rect x="843.64" y="304.76" width="1.2" height="2" fill="#a29c84"/>
<rect x="946.12" y="304.76" width="1.2" height="2" fill="#a29c84"/>
<line x1="24.40" y1="317.64" x2="30.40" y2="317.64" stroke="#8a846c" stroke-width="1.3"/>
<line x1="1049.20" y1="317.64" x2="1043.20" y2="317.64" stroke="#8a846c" stroke-width="1.3"/>
<line x1="533.30" y1="317.64" x2="540.30" y2="317.64" stroke="#8a846c" stroke-width="1.3"/>
<rect x="126.28" y="316.64" width="1.2" height="2" fill="#a29c84"/>
<rect x="228.76" y="316.64" width="1.2" height="2" fill="#a29c84"/>
<rect x="331.24" y="316.64" width="1.2" height="2" fill="#a29c84"/>
<rect x="433.72" y="316.64" width="1.2" height="2" fill="#a29c84"/>
<rect x="638.68" y="316.64" width="1.2" height="2" fill="#a29c84"/>
<rect x="741.16" y="316.64" width="1.2" height="2" fill="#a29c84"/>
<rect x="843.64" y="316.64" width="1.2" height="2" fill="#a29c84"/>
<rect x="946.12" y="316.64" width="1.2" height="2" fill="#a29c84"/>
<line x1="24.40" y1="329.52" x2="30.40" y2="329.52" stroke="#8a846c" stroke-width="1.3"/>
<line x1="1049.20" y1="329.52" x2="1043.20" y2="329.52" stroke="#8a846c" stroke-width="1.3"/>
<line x1="533.30" y1="329.52" x2="540.30" y2="329.52" stroke="#8a846c" stroke-width="1.3"/>
<rect x="126.28" y="328.52" width="1.2" height="2" fill="#a29c84"/>
<rect x="228.76" y="328.52" width="1.2" height="2" fill="#a29c84"/>
<rect x="331.24" y="328.52" width="1.2" height="2" fill="#a29c84"/>
<rect x="433.72" y="328.52" width="1.2" height="2" fill="#a29c84"/>
<rect x="638.68" y="328.52" width="1.2" height="2" fill="#a29c84"/>
<rect x="741.16" y="328.52" width="1.2" height="2" fill="#a29c84"/>
<rect x="843.64" y="328.52" width="1.2" height="2" fill="#a29c84"/>
<rect x="946.12" y="328.52" width="1.2" height="2" fill="#a29c84"/>
<line x1="24.40" y1="341.40" x2="34.40" y2="341.40" stroke="#8a846c" stroke-width="1.3"/>
<line x1="1049.20" y1="341.40" x2="1039.20" y2="341.40" stroke="#8a846c" stroke-width="1.3"/>
<line x1="531.80" y1="341.40" x2="541.80" y2="341.40" stroke="#8a846c" stroke-width="1.3"/>
<line x1="24.40" y1="353.28" x2="30.40" y2="353.28" stroke="#8a846c" stroke-width="1.3"/>
<line x1="1049.20" y1="353.28" x2="1043.20" y2="353.28" stroke="#8a846c" stroke-width="1.3"/>
<line x1="533.30" y1="353.28" x2="540.30" y2="353.28" stroke="#8a846c" stroke-width="1.3"/>
<rect x="126.28" y="352.28" width="1.2" height="2" fill="#a29c84"/>
<rect x="228.76" y="352.28" width="1.2" height="2" fill="#a29c84"/>
<rect x="331.24" y="352.28" width="1.2" height="2" fill="#a29c84"/>
<rect x="433.72" y="352.28" width="1.2" height="2" fill="#a29c84"/>
<rect x="638.68" y="352.28" width="1.2" height="2" fill="#a29c84"/>
<rect x="741.16" y="352.28" width="1.2" height="2" fill="#a29c84"/>
<rect x="843.64" y="352.28" width="1.2" height="2" fill="#a29c84"/>
<rect x="946.12" y="352.28" width="1.2" height="2" fill="#a29c84"/>
<line x1="24.40" y1="365.16" x2="30.40" y2="365.16" stroke="#8a846c" stroke-width="1.3"/>
<line x1="1049.20" y1="365.16" x2="1043.20" y2="365.16" stroke="#8a846c" stroke-width="1.3"/>
<line x1="533.30" y1="365.16" x2="540.30" y2="365.16" stroke="#8a846c" stroke-width="1.3"/>
<rect x="126.28" y="364.16" width="1.2" height="2" fill="#a29c84"/>
<rect x="228.76" y="364.16" width="1.2" height="2" fill="#a29c84"/>
<rect x="331.24" y="364.16" width="1.2" height="2" fill="#a29c84"/>
<rect x="433.72" y="364.16" width="1.2" height="2" fill="#a29c84"/>
<rect x="638.68" y="364.16" width="1.2" height="2" fill="#a29c84"/>
<rect x="741.16" y="364.16" width="1.2" height="2" fill="#a29c84"/>
<rect x="843.64" y="364.16" width="1.2" height="2" fill="#a29c84"/>
<rect x="946.12" y="364.16" width="1.2" height="2" fill="#a29c84"/>
<line x1="24.40" y1="377.04" x2="30.40" y2="377.04" stroke="#8a846c" stroke-width="1.3"/>
<line x1="1049.20" y1="377.04" x2="1043.20" y2="377.04" stroke="#8a846c" stroke-width="1.3"/>
<line x1="533.30" y1="377.04" x2="540.30" y2="377.04" stroke="#8a846c" stroke-width="1.3"/>
<rect x="126.28" y="376.04" width="1.2" height="2" fill="#a29c84"/>
<rect x="228.76" y="376.04" width="1.2" height="2" fill="#a29c84"/>
<rect x="331.24" y="376.04" width="1.2" height="2" fill="#a29c84"/>
<rect x="433.72" y="376.04" width="1.2" height="2" fill="#a29c84"/>
<rect x="638.68" y="376.04" width="1.2" height="2" fill="#a29c84"/>
<rect x="741.16" y="376.04" width="1.2" height="2" fill="#a29c84"/>
<rect x="843.64" y="376.04" width="1.2" height="2" fill="#a29c84"/>
<rect x="946.12" y="376.04" width="1.2" height="2" fill="#a29c84"/>
<line x1="24.40" y1="388.92" x2="30.40" y2="388.92" stroke="#8a846c" stroke-width="1.3"/>
<line x1="1049.20" y1="388.92" x2="1043.20" y2="388.92" stroke="#8a846c" stroke-width="1.3"/>
<line x1="533.30" y1="388.92" x2="540.30" y2="388.92" stroke="#8a846c" stroke-width="1.3"/>
<rect x="126.28" y="387.92" width="1.2" height="2" fill="#a29c84"/>
<rect x="228.76" y="387.92" width="1.2" height="2" fill="#a29c84"/>
<rect x="331.24" y="387.92" width="1.2" height="2" fill="#a29c84"/>
<rect x="433.72" y="387.92" width="1.2" height="2" fill="#a29c84"/>
<rect x="638.68" y="387.92" width="1.2" height="2" fill="#a29c84"/>
<rect x="741.16" y="387.92" width="1.2" height="2" fill="#a29c84"/>
<rect x="843.64" y="387.92" width="1.2" height="2" fill="#a29c84"/>
<rect x="946.12" y="387.92" width="1.2" height="2" fill="#a29c84"/>
<line x1="24.40" y1="400.80" x2="34.40" y2="400.80" stroke="#8a846c" stroke-width="1.3"/>
<line x1="1049.20" y1="400.80" x2="1039.20" y2="400.80" stroke="#8a846c" stroke-width="1.3"/>
<line x1="531.80" y1="400.80" x2="541.80" y2="400.80" stroke="#8a846c" stroke-width="1.3"/>
<line x1="24.40" y1="412.68" x2="30.40" y2="412.68" stroke="#8a846c" stroke-width="1.3"/>
<line x1="1049.20" y1="412.68" x2="1043.20" y2="412.68" stroke="#8a846c" stroke-width="1.3"/>
<line x1="533.30" y1="412.68" x2="540.30" y2="412.68" stroke="#8a846c" stroke-width="1.3"/>
<rect x="126.28" y="411.68" width="1.2" height="2" fill="#a29c84"/>
<rect x="228.76" y="411.68" width="1.2" height="2" fill="#a29c84"/>
<rect x="331.24" y="411.68" width="1.2" height="2" fill="#a29c84"/>
<rect x="433.72" y="411.68" width="1.2" height="2" fill="#a29c84"/>
<rect x="638.68" y="411.68" width="1.2" height="2" fill="#a29c84"/>
<rect x="741.16" y="411.68" width="1.2" height="2" fill="#a29c84"/>
<rect x="843.64" y="411.68" width="1.2" height="2" fill="#a29c84"/>
<rect x="946.12" y="411.68" width="1.2" height="2" fill="#a29c84"/>
<line x1="24.40" y1="424.56" x2="30.40" y2="424.56" stroke="#8a846c" stroke-width="1.3"/>
<line x1="1049.20" y1="424.56" x2="1043.20" y2="424.56" stroke="#8a846c" stroke-width="1.3"/>
<line x1="533.30" y1="424.56" x2="540.30" y2="424.56" stroke="#8a846c" stroke-width="1.3"/>
<rect x="126.28" y="423.56" width="1.2" height="2" fill="#a29c84"/>
<rect x="228.76" y="423.56" width="1.2" height="2" fill="#a29c84"/>
<rect x="331.24" y="423.56" width="1.2" height="2" fill="#a29c84"/>
<rect x="433.72" y="423.56" width="1.2" height="2" fill="#a29c84"/>
<rect x="638.68" y="423.56" width="1.2" height="2" fill="#a29c84"/>
<rect x="741.16" y="423.56" width="1.2" height="2" fill="#a29c84"/>
<rect x="843.64" y="423.56" width="1.2" height="2" fill="#a29c84"/>
<rect x="946.12" y="423.56" width="1.2" height="2" fill="#a29c84"/>
<line x1="24.40" y1="436.44" x2="30.40" y2="436.44" stroke="#8a846c" stroke-width="1.3"/>
<line x1="1049.20" y1="436.44" x2="1043.20" y2="436.44" stroke="#8a846c" stroke-width="1.3"/>
<line x1="533.30" y1="436.44" x2="540.30" y2="436.44" stroke="#8a846c" stroke-width="1.3"/>
<rect x="126.28" y="435.44" width="1.2" height="2" fill="#a29c84"/>
<rect x="228.76" y="435.44" width="1.2" height="2" fill="#a29c84"/>
<rect x="331.24" y="435.44" width="1.2" height="2" fill="#a29c84"/>
<rect x="433.72" y="435.44" width="1.2" height="2" fill="#a29c84"/>
<rect x="638.68" y="435.44" width="1.2" height="2" fill="#a29c84"/>
<rect x="741.16" y="435.44" width="1.2" height="2" fill="#a29c84"/>
<rect x="843.64" y="435.44" width="1.2" height="2" fill="#a29c84"/>
<rect x="946.12" y="435.44" width="1.2" height="2" fill="#a29c84"/>
<line x1="24.40" y1="448.32" x2="30.40" y2="448.32" stroke="#8a846c" stroke-width="1.3"/>
<line x1="1049.20" y1="448.32" x2="1043.20" y2="448.32" stroke="#8a846c" stroke-width="1.3"/>
<line x1="533.30" y1="448.32" x2="540.30" y2="448.32" stroke="#8a846c" stroke-width="1.3"/>
<rect x="126.28" y="447.32" width="1.2" height="2" fill="#a29c84"/>
<rect x="228.76" y="447.32" width="1.2" height="2" fill="#a29c84"/>
<rect x="331.24" y="447.32" width="1.2" height="2" fill="#a29c84"/>
<rect x="433.72" y="447.32" width="1.2" height="2" fill="#a29c84"/>
<rect x="638.68" y="447.32" width="1.2" height="2" fill="#a29c84"/>
<rect x="741.16" y="447.32" width="1.2" height="2" fill="#a29c84"/>
<rect x="843.64" y="447.32" width="1.2" height="2" fill="#a29c84"/>
<rect x="946.12" y="447.32" width="1.2" height="2" fill="#a29c84"/>
<line x1="24.40" y1="460.20" x2="34.40" y2="460.20" stroke="#8a846c" stroke-width="1.3"/>
<line x1="1049.20" y1="460.20" x2="1039.20" y2="460.20" stroke="#8a846c" stroke-width="1.3"/>
<line x1="531.80" y1="460.20" x2="541.80" y2="460.20" stroke="#8a846c" stroke-width="1.3"/>
<line x1="24.40" y1="472.08" x2="30.40" y2="472.08" stroke="#8a846c" stroke-width="1.3"/>
<line x1="1049.20" y1="472.08" x2="1043.20" y2="472.08" stroke="#8a846c" stroke-width="1.3"/>
<line x1="533.30" y1="472.08" x2="540.30" y2="472.08" stroke="#8a846c" stroke-width="1.3"/>
<rect x="126.28" y="471.08" width="1.2" height="2" fill="#a29c84"/>
<rect x="228.76" y="471.08" width="1.2" height="2" fill="#a29c84"/>
<rect x="331.24" y="471.08" width="1.2" height="2" fill="#a29c84"/>
<rect x="433.72" y="471.08" width="1.2" height="2" fill="#a29c84"/>
<rect x="638.68" y="471.08" width="1.2" height="2" fill="#a29c84"/>
<rect x="741.16" y="471.08" width="1.2" height="2" fill="#a29c84"/>
<rect x="843.64" y="471.08" width="1.2" height="2" fill="#a29c84"/>
<rect x="946.12" y="471.08" width="1.2" height="2" fill="#a29c84"/>
<line x1="24.40" y1="483.96" x2="30.40" y2="483.96" stroke="#8a846c" stroke-width="1.3"/>
<line x1="1049.20" y1="483.96" x2="1043.20" y2="483.96" stroke="#8a846c" stroke-width="1.3"/>
<line x1="533.30" y1="483.96" x2="540.30" y2="483.96" stroke="#8a846c" stroke-width="1.3"/>
<rect x="126.28" y="482.96" width="1.2" height="2" fill="#a29c84"/>
<rect x="228.76" y="482.96" width="1.2" height="2" fill="#a29c84"/>
<rect x="331.24" y="482.96" width="1.2" height="2" fill="#a29c84"/>
<rect x="433.72" y="482.96" width="1.2" height="2" fill="#a29c84"/>
<rect x="638.68" y="482.96" width="1.2" height="2" fill="#a29c84"/>
<rect x="741.16" y="482.96" width="1.2" height="2" fill="#a29c84"/>
<rect x="843.64" y="482.96" width="1.2" height="2" fill="#a29c84"/>
<rect x="946.12" y="482.96" width="1.2" height="2" fill="#a29c84"/>
<line x1="24.40" y1="495.84" x2="30.40" y2="495.84" stroke="#8a846c" stroke-width="1.3"/>
<line x1="1049.20" y1="495.84" x2="1043.20" y2="495.84" stroke="#8a846c" stroke-width="1.3"/>
<line x1="533.30" y1="495.84" x2="540.30" y2="495.84" stroke="#8a846c" stroke-width="1.3"/>
<rect x="126.28" y="494.84" width="1.2" height="2" fill="#a29c84"/>
<rect x="228.76" y="494.84" width="1.2" height="2" fill="#a29c84"/>
<rect x="331.24" y="494.84" width="1.2" height="2" fill="#a29c84"/>
<rect x="433.72" y="494.84" width="1.2" height="2" fill="#a29c84"/>
<rect x="638.68" y="494.84" width="1.2" height="2" fill="#a29c84"/>
<rect x="741.16" y="494.84" width="1.2" height="2" fill="#a29c84"/>
<rect x="843.64" y="494.84" width="1.2" height="2" fill="#a29c84"/>
<rect x="946.12" y="494.84" width="1.2" height="2" fill="#a29c84"/>
<line x1="24.40" y1="507.72" x2="30.40" y2="507.72" stroke="#8a846c" stroke-width="1.3"/>
<line x1="1049.20" y1="507.72" x2="1043.20" y2="507.72" stroke="#8a846c" stroke-width="1.3"/>
<line x1="533.30" y1="507.72" x2="540.30" y2="507.72" stroke="#8a846c" stroke-width="1.3"/>
<rect x="126.28" y="506.72" width="1.2" height="2" fill="#a29c84"/>
<rect x="228.76" y="506.72" width="1.2" height="2" fill="#a29c84"/>
<rect x="331.24" y="506.72" width="1.2" height="2" fill="#a29c84"/>
<rect x="433.72" y="506.72" width="1.2" height="2" fill="#a29c84"/>
<rect x="638.68" y="506.72" width="1.2" height="2" fill="#a29c84"/>
<rect x="741.16" y="506.72" width="1.2" height="2" fill="#a29c84"/>
<rect x="843.64" y="506.72" width="1.2" height="2" fill="#a29c84"/>
<rect x="946.12" y="506.72" width="1.2" height="2" fill="#a29c84"/>
<line x1="24.40" y1="519.60" x2="34.40" y2="519.60" stroke="#8a846c" stroke-width="1.3"/>
<line x1="1049.20" y1="519.60" x2="1039.20" y2="519.60" stroke="#8a846c" stroke-width="1.3"/>
<line x1="531.80" y1="519.60" x2="541.80" y2="519.60" stroke="#8a846c" stroke-width="1.3"/>
<line x1="24.40" y1="531.48" x2="30.40" y2="531.48" stroke="#8a846c" stroke-width="1.3"/>
<line x1="1049.20" y1="531.48" x2="1043.20" y2="531.48" stroke="#8a846c" stroke-width="1.3"/>
<line x1="533.30" y1="531.48" x2="540.30" y2="531.48" stroke="#8a846c" stroke-width="1.3"/>
<rect x="126.28" y="530.48" width="1.2" height="2" fill="#a29c84"/>
<rect x="228.76" y="530.48" width="1.2" height="2" fill="#a29c84"/>
<rect x="331.24" y="530.48" width="1.2" height="2" fill="#a29c84"/>
<rect x="433.72" y="530.48" width="1.2" height="2" fill="#a29c84"/>
<rect x="638.68" y="530.48" width="1.2" height="2" fill="#a29c84"/>
<rect x="741.16" y="530.48" width="1.2" height="2" fill="#a29c84"/>
<rect x="843.64" y="530.48" width="1.2" height="2" fill="#a29c84"/>
<rect x="946.12" y="530.48" width="1.2" height="2" fill="#a29c84"/>
<line x1="24.40" y1="543.36" x2="30.40" y2="543.36" stroke="#8a846c" stroke-width="1.3"/>
<line x1="1049.20" y1="543.36" x2="1043.20" y2="543.36" stroke="#8a846c" stroke-width="1.3"/>
<line x1="533.30" y1="543.36" x2="540.30" y2="543.36" stroke="#8a846c" stroke-width="1.3"/>
<rect x="126.28" y="542.36" width="1.2" height="2" fill="#a29c84"/>
<rect x="228.76" y="542.36" width="1.2" height="2" fill="#a29c84"/>
<rect x="331.24" y="542.36" width="1.2" height="2" fill="#a29c84"/>
<rect x="433.72" y="542.36" width="1.2" height="2" fill="#a29c84"/>
<rect x="638.68" y="542.36" width="1.2" height="2" fill="#a29c84"/>
<rect x="741.16" y="542.36" width="1.2" height="2" fill="#a29c84"/>
<rect x="843.64" y="542.36" width="1.2" height="2" fill="#a29c84"/>
<rect x="946.12" y="542.36" width="1.2" height="2" fill="#a29c84"/>
<line x1="24.40" y1="555.24" x2="30.40" y2="555.24" stroke="#8a846c" stroke-width="1.3"/>
<line x1="1049.20" y1="555.24" x2="1043.20" y2="555.24" stroke="#8a846c" stroke-width="1.3"/>
<line x1="533.30" y1="555.24" x2="540.30" y2="555.24" stroke="#8a846c" stroke-width="1.3"/>
<rect x="126.28" y="554.24" width="1.2" height="2" fill="#a29c84"/>
<rect x="228.76" y="554.24" width="1.2" height="2" fill="#a29c84"/>
<rect x="331.24" y="554.24" width="1.2" height="2" fill="#a29c84"/>
<rect x="433.72" y="554.24" width="1.2" height="2" fill="#a29c84"/>
<rect x="638.68" y="554.24" width="1.2" height="2" fill="#a29c84"/>
<rect x="741.16" y="554.24" width="1.2" height="2" fill="#a29c84"/>
<rect x="843.64" y="554.24" width="1.2" height="2" fill="#a29c84"/>
<rect x="946.12" y="554.24" width="1.2" height="2" fill="#a29c84"/>
<line x1="24.40" y1="567.12" x2="30.40" y2="567.12" stroke="#8a846c" stroke-width="1.3"/>
<line x1="1049.20" y1="567.12" x2="1043.20" y2="567.12" stroke="#8a846c" stroke-width="1.3"/>
<line x1="533.30" y1="567.12" x2="540.30" y2="567.12" stroke="#8a846c" stroke-width="1.3"/>
<rect x="126.28" y="566.12" width="1.2" height="2" fill="#a29c84"/>
<rect x="228.76" y="566.12" width="1.2" height="2" fill="#a29c84"/>
<rect x="331.24" y="566.12" width="1.2" height="2" fill="#a29c84"/>
<rect x="433.72" y="566.12" width="1.2" height="2" fill="#a29c84"/>
<rect x="638.68" y="566.12" width="1.2" height="2" fill="#a29c84"/>
<rect x="741.16" y="566.12" width="1.2" height="2" fill="#a29c84"/>
<rect x="843.64" y="566.12" width="1.2" height="2" fill="#a29c84"/>
<rect x="946.12" y="566.12" width="1.2" height="2" fill="#a29c84"/>
<line x1="24.40" y1="579.00" x2="34.40" y2="579.00" stroke="#8a846c" stroke-width="1.3"/>
<line x1="1049.20" y1="579.00" x2="1039.20" y2="579.00" stroke="#8a846c" stroke-width="1.3"/>
<line x1="531.80" y1="579.00" x2="541.80" y2="579.00" stroke="#8a846c" stroke-width="1.3"/>
<line x1="24.40" y1="590.88" x2="30.40" y2="590.88" stroke="#8a846c" stroke-width="1.3"/>
<line x1="1049.20" y1="590.88" x2="1043.20" y2="590.88" stroke="#8a846c" stroke-width="1.3"/>
<line x1="533.30" y1="590.88" x2="540.30" y2="590.88" stroke="#8a846c" stroke-width="1.3"/>
<rect x="126.28" y="589.88" width="1.2" height="2" fill="#a29c84"/>
<rect x="228.76" y="589.88" width="1.2" height="2" fill="#a29c84"/>
<rect x="331.24" y="589.88" width="1.2" height="2" fill="#a29c84"/>
<rect x="433.72" y="589.88" width="1.2" height="2" fill="#a29c84"/>
<rect x="638.68" y="589.88" width="1.2" height="2" fill="#a29c84"/>
<rect x="741.16" y="589.88" width="1.2" height="2" fill="#a29c84"/>
<rect x="843.64" y="589.88" width="1.2" height="2" fill="#a29c84"/>
<rect x="946.12" y="589.88" width="1.2" height="2" fill="#a29c84"/>
<line x1="24.40" y1="602.76" x2="30.40" y2="602.76" stroke="#8a846c" stroke-width="1.3"/>
<line x1="1049.20" y1="602.76" x2="1043.20" y2="602.76" stroke="#8a846c" stroke-width="1.3"/>
<line x1="533.30" y1="602.76" x2="540.30" y2="602.76" stroke="#8a846c" stroke-width="1.3"/>
<rect x="126.28" y="601.76" width="1.2" height="2" fill="#a29c84"/>
<rect x="228.76" y="601.76" width="1.2" height="2" fill="#a29c84"/>
<rect x="331.24" y="601.76" width="1.2" height="2" fill="#a29c84"/>
<rect x="433.72" y="601.76" width="1.2" height="2" fill="#a29c84"/>
<rect x="638.68" y="601.76" width="1.2" height="2" fill="#a29c84"/>
<rect x="741.16" y="601.76" width="1.2" height="2" fill="#a29c84"/>
<rect x="843.64" y="601.76" width="1.2" height="2" fill="#a29c84"/>
<rect x="946.12" y="601.76" width="1.2" height="2" fill="#a29c84"/>
<line x1="24.40" y1="614.64" x2="30.40" y2="614.64" stroke="#8a846c" stroke-width="1.3"/>
<line x1="1049.20" y1="614.64" x2="1043.20" y2="614.64" stroke="#8a846c" stroke-width="1.3"/>
<line x1="533.30" y1="614.64" x2="540.30" y2="614.64" stroke="#8a846c" stroke-width="1.3"/>
<rect x="126.28" y="613.64" width="1.2" height="2" fill="#a29c84"/>
<rect x="228.76" y="613.64" width="1.2" height="2" fill="#a29c84"/>
<rect x="331.24" y="613.64" width="1.2" height="2" fill="#a29c84"/>
<rect x="433.72" y="613.64" width="1.2" height="2" fill="#a29c84"/>
<rect x="638.68" y="613.64" width="1.2" height="2" fill="#a29c84"/>
<rect x="741.16" y="613.64" width="1.2" height="2" fill="#a29c84"/>
<rect x="843.64" y="613.64" width="1.2" height="2" fill="#a29c84"/>
<rect x="946.12" y="613.64" width="1.2" height="2" fill="#a29c84"/>
<line x1="24.40" y1="626.52" x2="30.40" y2="626.52" stroke="#8a846c" stroke-width="1.3"/>
<line x1="1049.20" y1="626.52" x2="1043.20" y2="626.52" stroke="#8a846c" stroke-width="1.3"/>
<line x1="533.30" y1="626.52" x2="540.30" y2="626.52" stroke="#8a846c" stroke-width="1.3"/>
<rect x="126.28" y="625.52" width="1.2" height="2" fill="#a29c84"/>
<rect x="228.76" y="625.52" width="1.2" height="2" fill="#a29c84"/>
<rect x="331.24" y="625.52" width="1.2" height="2" fill="#a29c84"/>
<rect x="433.72" y="625.52" width="1.2" height="2" fill="#a29c84"/>
<rect x="638.68" y="625.52" width="1.2" height="2" fill="#a29c84"/>
<rect x="741.16" y="625.52" width="1.2" height="2" fill="#a29c84"/>
<rect x="843.64" y="625.52" width="1.2" height="2" fill="#a29c84"/>
<rect x="946.12" y="625.52" width="1.2" height="2" fill="#a29c84"/>
<rect x="126.13" y="103.05" width="1.5" height="1.5" fill="#7a7462"/>
<rect x="126.13" y="162.45" width="1.5" height="1.5" fill="#7a7462"/>
<rect x="126.13" y="221.85" width="1.5" height="1.5" fill="#7a7462"/>
<rect x="126.13" y="281.25" width="1.5" height="1.5" fill="#7a7462"/>
<rect x="126.13" y="400.05" width="1.5" height="1.5" fill="#7a7462"/>
<rect x="126.13" y="459.45" width="1.5" height="1.5" fill="#7a7462"/>
<rect x="126.13" y="518.85" width="1.5" height="1.5" fill="#7a7462"/>
<rect x="126.13" y="578.25" width="1.5" height="1.5" fill="#7a7462"/>
<rect x="228.61" y="103.05" width="1.5" height="1.5" fill="#7a7462"/>
<rect x="228.61" y="162.45" width="1.5" height="1.5" fill="#7a7462"/>
<rect x="228.61" y="221.85" width="1.5" height="1.5" fill="#7a7462"/>
<rect x="228.61" y="281.25" width="1.5" height="1.5" fill="#7a7462"/>
<rect x="228.61" y="400.05" width="1.5" height="1.5" fill="#7a7462"/>
<rect x="228.61" y="459.45" width="1.5" height="1.5" fill="#7a7462"/>
<rect x="228.61" y="518.85" width="1.5" height="1.5" fill="#7a7462"/>
<rect x="228.61" y="578.25" width="1.5" height="1.5" fill="#7a7462"/>
<rect x="331.09" y="103.05" width="1.5" height="1.5" fill="#7a7462"/>
<rect x="331.09" y="162.45" width="1.5" height="1.5" fill="#7a7462"/>
<rect x="331.09" y="221.85" width="1.5" height="1.5" fill="#7a7462"/>
<rect x="331.09" y="281.25" width="1.5" height="1.5" fill="#7a7462"/>
<rect x="331.09" y="400.05" width="1.5" height="1.5" fill="#7a7462"/>
<rect x="331.09" y="459.45" width="1.5" height="1.5" fill="#7a7462"/>
<rect x="331.09" y="518.85" width="1.5" height="1.5" fill="#7a7462"/>
<rect x="331.09" y="578.25" width="1.5" height="1.5" fill="#7a7462"/>
<rect x="433.57" y="103.05" width="1.5" height="1.5" fill="#7a7462"/>
<rect x="433.57" y="162.45" width="1.5" height="1.5" fill="#7a7462"/>
<rect x="433.57" y="221.85" width="1.5" height="1.5" fill="#7a7462"/>
<rect x="433.57" y="281.25" width="1.5" height="1.5" fill="#7a7462"/>
<rect x="433.57" y="400.05" width="1.5" height="1.5" fill="#7a7462"/>
<rect x="433.57" y="459.45" width="1.5" height="1.5" fill="#7a7462"/>
<rect x="433.57" y="518.85" width="1.5" height="1.5" fill="#7a7462"/>
<rect x="433.57" y="578.25" width="1.5" height="1.5" fill="#7a7462"/>
<rect x="638.53" y="103.05" width="1.5" height="1.5" fill="#7a7462"/>
<rect x="638.53" y="162.45" width="1.5" height="1.5" fill="#7a7462"/>
<rect x="638.53" y="221.85" width="1.5" height="1.5" fill="#7a7462"/>
<rect x="638.53" y="281.25" width="1.5" height="1.5" fill="#7a7462"/>
<rect x="638.53" y="400.05" width="1.5" height="1.5" fill="#7a7462"/>
<rect x="638.53" y="459.45" width="1.5" height="1.5" fill="#7a7462"/>
<rect x="638.53" y="518.85" width="1.5" height="1.5" fill="#7a7462"/>
<rect x="638.53" y="578.25" width="1.5" height="1.5" fill="#7a7462"/>
<rect x="741.01" y="103.05" width="1.5" height="1.5" fill="#7a7462"/>
<rect x="741.01" y="162.45" width="1.5" height="1.5" fill="#7a7462"/>
<rect x="741.01" y="221.85" width="1.5" height="1.5" fill="#7a7462"/>
<rect x="741.01" y="281.25" width="1.5" height="1.5" fill="#7a7462"/>
<rect x="741.01" y="400.05" width="1.5" height="1.5" fill="#7a7462"/>
<rect x="741.01" y="459.45" width="1.5" height="1.5" fill="#7a7462"/>
<rect x="741.01" y="518.85" width="1.5" height="1.5" fill="#7a7462"/>
<rect x="741.01" y="578.25" width="1.5" height="1.5" fill="#7a7462"/>
<rect x="843.49" y="103.05" width="1.5" height="1.5" fill="#7a7462"/>
<rect x="843.49" y="162.45" width="1.5" height="1.5" fill="#7a7462"/>
<rect x="843.49" y="221.85" width="1.5" height="1.5" fill="#7a7462"/>
<rect x="843.49" y="281.25" width="1.5" height="1.5" fill="#7a7462"/>
<rect x="843.49" y="400.05" width="1.5" height="1.5" fill="#7a7462"/>
<rect x="843.49" y="459.45" width="1.5" height="1.5" fill="#7a7462"/>
<rect x="843.49" y="518.85" width="1.5" height="1.5" fill="#7a7462"/>
<rect x="843.49" y="578.25" width="1.5" height="1.5" fill="#7a7462"/>
<rect x="945.97" y="103.05" width="1.5" height="1.5" fill="#7a7462"/>
<rect x="945.97" y="162.45" width="1.5" height="1.5" fill="#7a7462"/>
<rect x="945.97" y="221.85" width="1.5" height="1.5" fill="#7a7462"/>
<rect x="945.97" y="281.25" width="1.5" height="1.5" fill="#7a7462"/>
<rect x="945.97" y="400.05" width="1.5" height="1.5" fill="#7a7462"/>
<rect x="945.97" y="459.45" width="1.5" height="1.5" fill="#7a7462"/>
<rect x="945.97" y="518.85" width="1.5" height="1.5" fill="#7a7462"/>
<rect x="945.97" y="578.25" width="1.5" height="1.5" fill="#7a7462"/>
<rect x="439.5" y="336.8" width="234.5" height="12.3" fill="none" stroke="#8a4a22" stroke-width="1.6"/>
<path d="M535,44.5 L545.5,44.5 L540.2,55 Z" fill="#ffa800"/>
<line x1="1036" y1="300" x2="1052" y2="300" stroke="#b9b500" stroke-width="2"/>
<path d="M1028,300 L1037,294.5 L1037,305.5 Z" fill="#ffff00"/>
<path d="M30.5,336 L39.3,341.3 L30.5,346.8 Z" fill="#ffff00" stroke="#7ad000" stroke-width="0.8"/>
<line x1="26" y1="341.3" x2="31" y2="341.3" stroke="#ffff00" stroke-width="2.5"/>
<circle cx="18.2" cy="341.3" r="9.3" fill="#ffff00" stroke="#ff9c00" stroke-width="1.6"/>
<path d="M15.6,339.9 L19.3,336.9 L19.3,346.2" fill="none" stroke="#3a3a00" stroke-width="2.3" stroke-linejoin="miter"/>
</svg>
<div class="t" style="left:16.4px;top:18.99px;font-size:11px;line-height:11px;font-weight:normal;color:#f0f0f8;">File</div>
<div class="t" style="left:47.5px;top:18.99px;font-size:11px;line-height:11px;font-weight:normal;color:#f0f0f8;">Edit</div>
<div class="t" style="left:86px;top:18.99px;font-size:11px;line-height:11px;font-weight:normal;color:#f0f0f8;">Vertical</div>
<div class="t" style="left:140.3px;top:18.99px;font-size:11px;line-height:11px;font-weight:normal;color:#f0f0f8;">Horiz/Acq</div>
<div class="t" style="left:206px;top:18.99px;font-size:11px;line-height:11px;font-weight:normal;color:#f0f0f8;">Trig</div>
<div class="t" style="left:241.4px;top:18.99px;font-size:11px;line-height:11px;font-weight:normal;color:#f0f0f8;">Display</div>
<div class="t" style="left:295px;top:18.99px;font-size:11px;line-height:11px;font-weight:normal;color:#f0f0f8;">Cursors</div>
<div class="t" style="left:352.6px;top:18.99px;font-size:11px;line-height:11px;font-weight:normal;color:#f0f0f8;">Measure</div>
<div class="t" style="left:411.5px;top:18.99px;font-size:11px;line-height:11px;font-weight:normal;color:#f0f0f8;">Mask</div>
<div class="t" style="left:455px;top:18.99px;font-size:11px;line-height:11px;font-weight:normal;color:#f0f0f8;">Math</div>
<div class="t" style="left:496.5px;top:18.99px;font-size:11px;line-height:11px;font-weight:normal;color:#f0f0f8;">MyScope</div>
<div class="t" style="left:559.7px;top:18.99px;font-size:11px;line-height:11px;font-weight:normal;color:#f0f0f8;">Analyze</div>
<div class="t" style="left:616.6px;top:18.99px;font-size:11px;line-height:11px;font-weight:normal;color:#f0f0f8;">Utilities</div>
<div class="t" style="left:669px;top:18.99px;font-size:11px;line-height:11px;font-weight:normal;color:#f0f0f8;">Help</div>
<div class="sep" style="left:41.2px"></div>
<div class="sep" style="left:77.1px"></div>
<div class="sep" style="left:131.5px"></div>
<div class="sep" style="left:196.7px"></div>
<div class="sep" style="left:233.0px"></div>
<div class="sep" style="left:286.4px"></div>
<div class="sep" style="left:343.3px"></div>
<div class="sep" style="left:403.4px"></div>
<div class="sep" style="left:446.1px"></div>
<div class="sep" style="left:487.3px"></div>
<div class="sep" style="left:550.9px"></div>
<div class="sep" style="left:607.3px"></div>
<div class="sep" style="left:659.6px"></div>
<div class="sep" style="left:699.5px"></div>
<div class="a" style="left:729px;top:8px;width:1px;height:32px;background:#3a48a0"></div>
<div class="a" style="left:962px;top:8px;width:1px;height:32px;background:#3a48a0"></div>
<div class="a" style="left:1016px;top:8px;width:1px;height:32px;background:#3a48a0"></div>
<div class="a" style="left:702.5px;top:11.5px;width:25.5px;height:25.5px;border-radius:3px;background:linear-gradient(#b4d8ff,#6a9ee0 55%,#3a68b0)"></div>
<svg class="a" style="left:0;top:0" width="1068" height="50"><path d="M712,22 L719,22 L715.5,29 Z" fill="#101a70"/></svg>
<svg class="a" style="left:0;top:0" width="1068" height="50"><text x="845.5" y="28.3" font-family="Liberation Sans" font-size="13" fill="#22287c" textLength="65" lengthAdjust="spacingAndGlyphs">DPO72004</text></svg>
<div class="t" style="left:927.3px;top:17.03px;font-size:16.5px;line-height:16.5px;font-weight:bold;color:#8e8e8e;">Tek</div>
<div class="t" style="left:924.6px;top:14.83px;font-size:16.5px;line-height:16.5px;font-weight:bold;color:#ffffff;">Tek</div>
<div class="a" style="left:976.5px;top:11.5px;width:25px;height:26px;border-radius:3px;background:linear-gradient(#9ccaff,#5a9ae8 50%,#2a66c0)"></div>
<div class="a" style="left:983px;top:27px;width:12px;height:3px;background:#ffffff"></div>
<div class="a" style="left:1018.5px;top:11.5px;width:25px;height:25.5px;border-radius:3px;background:linear-gradient(#ffd0c0,#ff3a10 45%,#c02000 75%,#600000)"></div>
<svg class="a" style="left:0;top:0" width="1068" height="50"><path d="M1025.5,20 L1036,30.5 M1036,20 L1025.5,30.5" stroke="#ffffff" stroke-width="1.8"/></svg>
<div class="box" style="left:898px;top:71.5px;width:130px;height:139px;background:linear-gradient(#4a5488,#232b5a 9px,#1f2752 20px,#1f2752);border-color:#9a9aa8"></div>
<div class="a" style="left:911px;top:107.5px;width:101px;height:1.5px;background:#9090a0"></div>
<div class="a" style="left:911px;top:173px;width:101px;height:1.5px;background:#9090a0"></div>
<div class="a" style="left:1004.9px;top:87.9px;width:14.6px;height:14.6px;border-radius:50%;background:radial-gradient(circle at 45% 40%,#ffd84a,#f0b000 70%,#c08000)"></div>
<div class="a" style="left:1004.9px;top:152.1px;width:14.6px;height:14.6px;border-radius:50%;background:radial-gradient(circle at 45% 40%,#ffd84a,#f0b000 70%,#c08000)"></div>
<svg class="a" style="left:0;top:0" width="1068" height="801"><text x="1012.4" y="99.8" font-family="Liberation Sans" font-weight="bold" font-size="14.5" text-anchor="middle" fill="#0a0a0a">a</text><text x="1012.2" y="164.6" font-family="Liberation Sans" font-weight="bold" font-size="14.5" text-anchor="middle" fill="#0a0a0a">b</text></svg>
<div class="box" style="left:29.5px;top:647px;width:287.5px;height:48px"></div>
<div class="pill" style="left:38px;top:655px;width:33px;height:13.5px;line-height:11.5px;background:linear-gradient(#f8f870,#e0e000 45%,#b0b000);font-size:10px;color:#202020;">C1</div>
<div class="pill" style="left:38px;top:676px;width:33px;height:13.5px;line-height:11.5px;background:linear-gradient(#a0ffff,#00d8e0 45%,#00a0b0);font-size:10px;color:#202020;">C2</div>
<div class="box" style="left:613.5px;top:647.5px;width:190.5px;height:24px"></div>
<div class="a" style="left:619.3px;top:654px;width:16.3px;height:15.6px;box-sizing:border-box;border:1.5px solid #e89000;background:linear-gradient(#d8d8d8,#a8a8a8)"></div>
<svg class="a" style="left:0;top:0" width="1068" height="801"><text x="621" y="666.3" font-family="Liberation Sans" font-weight="bold" font-size="11" fill="#303030">A'</text></svg>
<div class="pill" style="left:637.5px;top:654.8px;width:33px;height:13.8px;line-height:11.8px;background:linear-gradient(#f8f870,#e0e000 45%,#b0b000);font-size:10px;color:#202020;">C1</div>
<svg class="a" style="left:0;top:0" width="1068" height="801"><path d="M674.2,655.5 L677.5,655.5 L685.4,666.6 L688.4,666.6" fill="none" stroke="#f0f0f0" stroke-width="1.6"/><path d="M238.5,652.5 L237.6,656.9 M238.5,673.3 L237.6,677.7" stroke="#e0e0e0" stroke-width="1.2"/></svg>
<div class="box" style="left:808.5px;top:648px;width:236px;height:94px"></div>
<div class="a" style="left:1025.4px;top:675.3px;width:3.4px;height:12px;background:#f0e820;border-radius:1.5px"></div>
<div class="a" style="left:1023px;top:685.4px;width:7.8px;height:7.8px;background:#f0e820;border-radius:50%"></div>
<div class="box" style="left:29.5px;top:701px;width:578.5px;height:67px"></div>
<div class="a" style="left:210.1px;top:727.8px;width:81.50000000000003px;height:38.40000000000009px;background:#2e2e2e"></div>
<div class="a" style="left:363.5px;top:727.8px;width:71.89999999999998px;height:38.40000000000009px;background:#2e2e2e"></div>
<svg class="a" style="left:0;top:0" width="1068" height="801"><line x1="138.8" y1="727.8" x2="605.5" y2="727.8" stroke="#b8b8b8" stroke-width="1.3"/><line x1="138.8" y1="747.0" x2="605.5" y2="747.0" stroke="#b8b8b8" stroke-width="1.3"/><line x1="138.8" y1="766.2" x2="605.5" y2="766.2" stroke="#b8b8b8" stroke-width="1.3"/><line x1="138.8" y1="727.8" x2="138.8" y2="766.2" stroke="#b8b8b8" stroke-width="1.3"/><line x1="210.1" y1="727.8" x2="210.1" y2="766.2" stroke="#b8b8b8" stroke-width="1.3"/><line x1="291.6" y1="727.8" x2="291.6" y2="766.2" stroke="#b8b8b8" stroke-width="1.3"/><line x1="363.5" y1="727.8" x2="363.5" y2="766.2" stroke="#b8b8b8" stroke-width="1.3"/><line x1="435.4" y1="727.8" x2="435.4" y2="766.2" stroke="#b8b8b8" stroke-width="1.3"/><line x1="507.7" y1="727.8" x2="507.7" y2="766.2" stroke="#b8b8b8" stroke-width="1.3"/><line x1="568.1" y1="727.8" x2="568.1" y2="766.2" stroke="#b8b8b8" stroke-width="1.3"/><line x1="605.5" y1="727.8" x2="605.5" y2="766.2" stroke="#b8b8b8" stroke-width="1.3"/></svg>
<div class="pill" style="left:38px;top:729.8px;width:33px;height:12.8px;line-height:10.8px;background:linear-gradient(90deg,#00e0e8 0,#00e0e8 50%,#e0e000 50%,#e0e000);font-size:9.5px;color:#202020;">C2C1</div>
<div class="pill" style="left:38px;top:749px;width:33px;height:13px;line-height:11px;background:linear-gradient(#f0f0f0,#b8b8b8 50%,#888);font-size:10px;color:#303030;">Hs</div>
<div class="a" style="left:580px;top:748.6px;width:14.5px;height:14.5px;border-radius:50%;background:radial-gradient(circle at 45% 35%,#e0f0ff,#5aa0f0 55%,#2050b0);"></div>
<svg class="a" style="left:0;top:0" width="1068" height="801"><text x="587.4" y="760.3" font-family="Liberation Sans" font-weight="bold" font-size="11" text-anchor="middle" fill="#e02020">?</text></svg>
<svg class="a" style="left:0;top:0" width="1068" height="801" font-family="Liberation Sans">
<text x="933.77" y="94.00" font-size="12.2" font-weight="bold" fill="#ececec" textLength="58.16" lengthAdjust="spacingAndGlyphs">Top Limit</text>
<text x="937.57" y="126.30" font-size="12.2" font-weight="bold" fill="#ececec" textLength="49.66" lengthAdjust="spacingAndGlyphs">4.57mV</text>
<text x="923.37" y="162.50" font-size="12.2" font-weight="bold" fill="#ececec" textLength="78.66" lengthAdjust="spacingAndGlyphs">Bottom Limit</text>
<text x="935.37" y="193.90" font-size="12.2" font-weight="bold" fill="#ececec" textLength="54.26" lengthAdjust="spacingAndGlyphs">-7.43mV</text>
<text x="75.32" y="664.80" font-size="11.3" font-weight="bold" fill="#ececec" textLength="67.36" lengthAdjust="spacingAndGlyphs">60.0mV/div</text>
<text x="193.62" y="664.80" font-size="11.3" font-weight="bold" fill="#ececec" textLength="24.66" lengthAdjust="spacingAndGlyphs">50Ω</text>
<text x="242.32" y="664.80" font-size="11.3" font-weight="bold" fill="#ececec" textLength="38.76" lengthAdjust="spacingAndGlyphs">:20.0G</text>
<text x="227.78" y="660.90" font-size="8.6" font-weight="bold" fill="#ececec">B</text>
<text x="232.74" y="668.30" font-size="11.0" font-weight="bold" fill="#ececec">W</text>
<text x="75.32" y="685.60" font-size="11.3" font-weight="bold" fill="#ececec" textLength="67.36" lengthAdjust="spacingAndGlyphs">60.0mV/div</text>
<text x="193.62" y="685.60" font-size="11.3" font-weight="bold" fill="#ececec" textLength="24.66" lengthAdjust="spacingAndGlyphs">50Ω</text>
<text x="242.32" y="685.60" font-size="11.3" font-weight="bold" fill="#ececec" textLength="38.76" lengthAdjust="spacingAndGlyphs">:20.0G</text>
<text x="227.78" y="681.70" font-size="8.6" font-weight="bold" fill="#ececec">B</text>
<text x="232.74" y="689.10" font-size="11.0" font-weight="bold" fill="#ececec">W</text>
<text x="690.62" y="664.70" font-size="11.3" font-weight="bold" fill="#ececec" textLength="43.96" lengthAdjust="spacingAndGlyphs">42.0mV</text>
<text x="816.40" y="664.50" font-size="11.6" font-weight="bold" fill="#ececec" textLength="53.89" lengthAdjust="spacingAndGlyphs">1.0ns/div</text>
<text x="882.30" y="664.50" font-size="11.6" font-weight="bold" fill="#ececec" textLength="53.79" lengthAdjust="spacingAndGlyphs">50.0GS/s</text>
<text x="943.80" y="664.50" font-size="11.6" font-weight="bold" fill="#ececec" textLength="11.59" lengthAdjust="spacingAndGlyphs">IT</text>
<text x="969.10" y="664.50" font-size="11.6" font-weight="bold" fill="#ececec" textLength="49.09" lengthAdjust="spacingAndGlyphs">2.0ps/pt</text>
<text x="816.00" y="685.90" font-size="11.6" font-weight="bold" fill="#22e022" textLength="24.49" lengthAdjust="spacingAndGlyphs">Run</text>
<text x="904.90" y="685.90" font-size="11.6" font-weight="bold" fill="#ececec" textLength="45.39" lengthAdjust="spacingAndGlyphs">Sample</text>
<text x="816.00" y="707.20" font-size="11.6" font-weight="bold" fill="#ececec" textLength="64.09" lengthAdjust="spacingAndGlyphs">5 671 acqs</text>
<text x="959.00" y="707.30" font-size="11.6" font-weight="bold" fill="#ececec" textLength="46.29" lengthAdjust="spacingAndGlyphs">RL:5.0k</text>
<text x="816.00" y="728.50" font-size="11.6" font-weight="bold" fill="#ececec" textLength="28.99" lengthAdjust="spacingAndGlyphs">Auto</text>
<text x="859.20" y="728.50" font-size="11.6" font-weight="bold" fill="#ececec" textLength="77.49" lengthAdjust="spacingAndGlyphs">May 08, 2012</text>
<text x="987.10" y="728.60" font-size="11.6" font-weight="bold" fill="#f5a000" textLength="50.99" lengthAdjust="spacingAndGlyphs">13:21:58</text>
<text x="156.39" y="720.10" font-size="11.8" font-weight="bold" fill="#ececec" textLength="34.02" lengthAdjust="spacingAndGlyphs">Value</text>
<text x="234.09" y="720.10" font-size="11.8" font-weight="bold" fill="#ececec" textLength="32.82" lengthAdjust="spacingAndGlyphs">Mean</text>
<text x="316.09" y="720.10" font-size="11.8" font-weight="bold" fill="#ececec" textLength="22.12" lengthAdjust="spacingAndGlyphs">Min</text>
<text x="386.19" y="720.10" font-size="11.8" font-weight="bold" fill="#ececec" textLength="25.32" lengthAdjust="spacingAndGlyphs">Max</text>
<text x="450.39" y="720.10" font-size="11.8" font-weight="bold" fill="#ececec" textLength="40.02" lengthAdjust="spacingAndGlyphs">St Dev</text>
<text x="518.89" y="720.10" font-size="11.8" font-weight="bold" fill="#ececec" textLength="37.22" lengthAdjust="spacingAndGlyphs">Count</text>
<text x="574.59" y="720.10" font-size="11.8" font-weight="bold" fill="#ececec" textLength="23.72" lengthAdjust="spacingAndGlyphs">Info</text>
<text x="77.82" y="740.10" font-size="11.3" font-weight="bold" fill="#ececec" textLength="27.06" lengthAdjust="spacingAndGlyphs">Dely</text>
<text x="77.82" y="759.90" font-size="11.3" font-weight="bold" fill="#ececec" textLength="36.86" lengthAdjust="spacingAndGlyphs">Mean*</text>
<text x="139.61" y="740.30" font-size="11.5" font-weight="bold" fill="#ececec" textLength="46.48" lengthAdjust="spacingAndGlyphs">1.168ns</text>
<text x="211.31" y="740.30" font-size="11.5" font-weight="bold" fill="#ececec" textLength="60.28" lengthAdjust="spacingAndGlyphs">1.167973n</text>
<text x="293.91" y="740.30" font-size="11.5" font-weight="bold" fill="#ececec" textLength="39.58" lengthAdjust="spacingAndGlyphs">1.164n</text>
<text x="365.51" y="740.30" font-size="11.5" font-weight="bold" fill="#ececec" textLength="39.28" lengthAdjust="spacingAndGlyphs">1.172n</text>
<text x="436.31" y="740.30" font-size="11.5" font-weight="bold" fill="#ececec" textLength="36.98" lengthAdjust="spacingAndGlyphs">859.2f</text>
<text x="508.51" y="740.30" font-size="11.5" font-weight="bold" fill="#ececec" textLength="38.88" lengthAdjust="spacingAndGlyphs">5.671k</text>
<text x="139.61" y="759.90" font-size="11.5" font-weight="bold" fill="#ececec" textLength="10.98" lengthAdjust="spacingAndGlyphs">-s</text>
<text x="211.81" y="759.90" font-size="11.5" font-weight="bold" fill="#ececec">?</text>
<text x="293.91" y="759.90" font-size="11.5" font-weight="bold" fill="#ececec">?</text>
<text x="365.51" y="759.90" font-size="11.5" font-weight="bold" fill="#ececec">?</text>
<text x="436.31" y="759.90" font-size="11.5" font-weight="bold" fill="#ececec" textLength="17.38" lengthAdjust="spacingAndGlyphs">0.0</text>
<text x="508.51" y="759.90" font-size="11.5" font-weight="bold" fill="#ececec" textLength="17.38" lengthAdjust="spacingAndGlyphs">0.0</text>
</svg>
</body></html>
